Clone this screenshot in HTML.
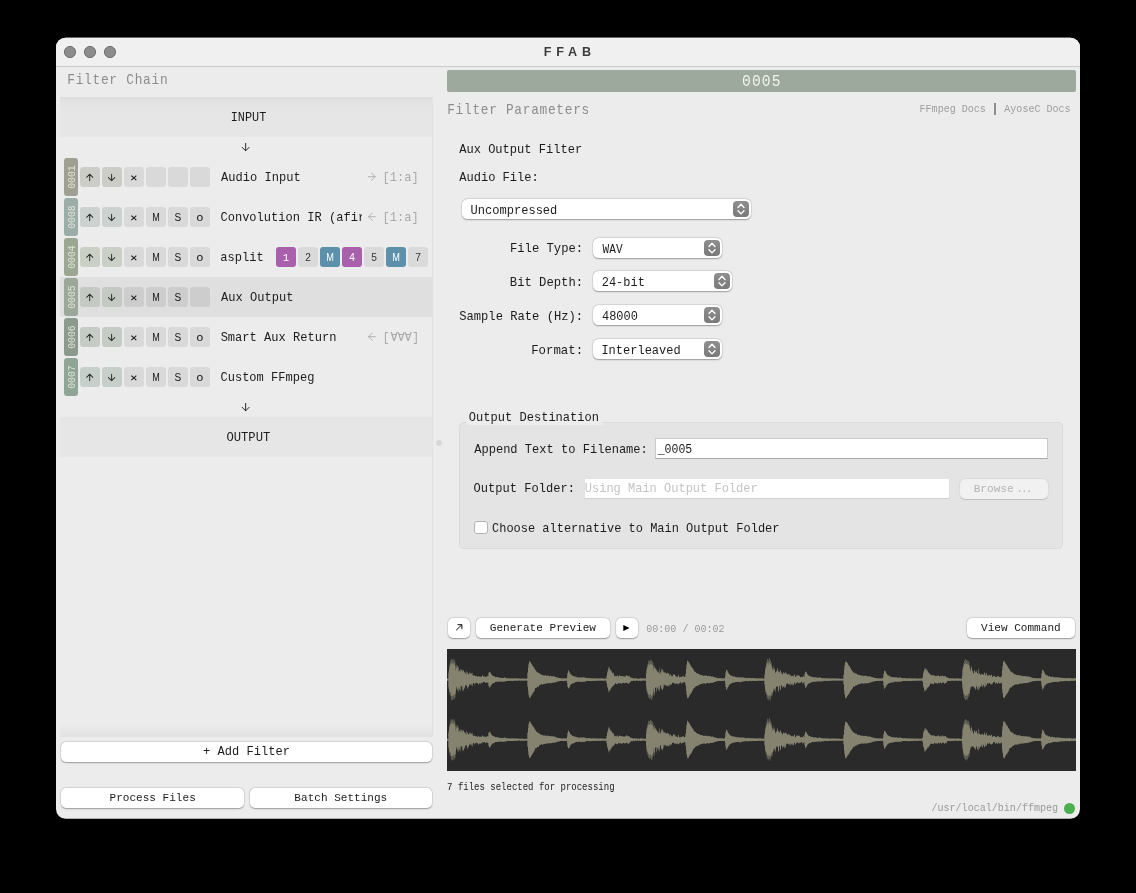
<!DOCTYPE html>
<html><head><meta charset="utf-8"><title>FFAB</title>
<style>
html,body{margin:0;padding:0;background:#000;}
body{width:1136px;height:893px;position:relative;overflow:hidden;font-family:"Liberation Mono",monospace;}
div,span,svg{position:absolute;box-sizing:border-box;}
.t{font-family:"Liberation Mono",monospace;line-height:20px;white-space:pre;transform-origin:0 0;}
.ts{font-family:"Liberation Sans",sans-serif;line-height:20px;white-space:pre;transform-origin:0 0;}
#root{left:0;top:0;width:1136px;height:893px;will-change:transform;}
.btn{background:#fff;border-radius:5px;box-shadow:0 0.5px 1.5px rgba(0,0,0,.32),0 0 0 0.5px rgba(0,0,0,.07);}
.sel{background:#fff;border-radius:5.5px;box-shadow:0 0.5px 1.5px rgba(0,0,0,.32),0 0 0 0.5px rgba(0,0,0,.07);}
.stp{width:16px;height:16px;border-radius:4px;background:linear-gradient(#8f8f8f,#797979);}
.sq{border-radius:3px;}
</style></head><body>
<div id="root">
<svg style="left:0;top:0" width="1136" height="893" viewBox="0 0 1136 893"><defs><clipPath id="wc"><rect x="56" y="37.8" width="1024" height="780.9" rx="9.6"/></clipPath></defs><g clip-path="url(#wc)"><rect x="56" y="37" width="1024" height="782" fill="#ececec"/><rect x="56" y="37" width="1024" height="29.2" fill="#f0f0f0"/><rect x="56" y="66.1" width="1024" height="0.95" fill="#c9c9c9"/></g></svg>

<span class="ts" style="left:543px;top:45px;line-height:14px;font-size:12.6px;color:#3c3c3c;transform:translateX(0.84px) scaleX(1.0000);letter-spacing:4.75px;font-weight:bold;">FFAB</span>
<span class="t" style="left:67px;top:72px;line-height:16px;font-size:14.6px;color:#8c8c8c;transform:translateX(0.28px) scaleX(0.8790);letter-spacing:0.82px;">Filter Chain</span>
<div style="left:60.00px;top:97.00px;width:373.00px;height:640.00px;background:#ececec;border-right:1px solid #e2e2e2;"></div>
<div style="left:60.00px;top:97.00px;width:372.00px;height:40.00px;background:linear-gradient(#dedede 0,#e3e3e3 6px,#e6e6e6 14px,#e6e6e6 100%);"></div>
<div style="left:60.00px;top:417.00px;width:372.00px;height:40.00px;background:#e6e6e6;"></div>
<div style="left:60.00px;top:277.00px;width:372.00px;height:40.00px;background:#dfdfdf;"></div>
<div style="left:60.00px;top:722.00px;width:372.00px;height:15.00px;background:linear-gradient(rgba(0,0,0,0),rgba(0,0,0,.045));"></div>
<span class="t" style="left:230px;top:110px;line-height:15px;font-size:13.5px;color:#1c1c1c;transform:translateX(0.73px) scaleX(0.8767);">INPUT</span>
<span class="t" style="left:226px;top:430px;line-height:15px;font-size:13.5px;color:#1c1c1c;transform:translateX(0.49px) scaleX(0.9003);">OUTPUT</span>
<div style="left:64.00px;top:158.00px;width:14.00px;height:38.00px;background:#a0a092;border-radius:3px;"></div>
<span class="t" style="left:58.17px;top:171.35px;width:27.36px;line-height:12px;font-size:11.4px;color:rgba(236,236,228,.86);transform-origin:50% 50%;transform:rotate(-90deg) scaleX(0.86);text-align:center;">0001</span>
<div class="sq" style="left:80.00px;top:167.00px;width:20.00px;height:20.00px;background:rgba(160,160,146,.4);"></div>
<div class="sq" style="left:102.00px;top:167.00px;width:20.00px;height:20.00px;background:rgba(160,160,146,.4);"></div>
<div class="sq" style="left:124.00px;top:167.00px;width:20.00px;height:20.00px;background:rgba(0,0,0,.078);"></div>
<div class="sq" style="left:146.00px;top:167.00px;width:20.00px;height:20.00px;background:rgba(0,0,0,.078);"></div>
<div class="sq" style="left:168.00px;top:167.00px;width:20.00px;height:20.00px;background:rgba(0,0,0,.078);"></div>
<div class="sq" style="left:190.00px;top:167.00px;width:20.00px;height:20.00px;background:rgba(0,0,0,.078);"></div>
<span class="t" style="left:221px;top:170px;line-height:15px;font-size:13.5px;color:#1c1c1c;transform:translateX(0.10px) scaleX(0.8930);">Audio Input</span>
<span class="t" style="left:382px;top:170px;line-height:15px;font-size:13.5px;color:#aaa;transform:translateX(0.49px) scaleX(0.8930);">[1:a]</span>
<div style="left:64.00px;top:198.00px;width:14.00px;height:38.00px;background:#9aada6;border-radius:3px;"></div>
<span class="t" style="left:58.17px;top:211.35px;width:27.36px;line-height:12px;font-size:11.4px;color:rgba(236,236,228,.86);transform-origin:50% 50%;transform:rotate(-90deg) scaleX(0.86);text-align:center;">0008</span>
<div class="sq" style="left:80.00px;top:207.00px;width:20.00px;height:20.00px;background:rgba(154,173,166,.4);"></div>
<div class="sq" style="left:102.00px;top:207.00px;width:20.00px;height:20.00px;background:rgba(154,173,166,.4);"></div>
<div class="sq" style="left:124.00px;top:207.00px;width:20.00px;height:20.00px;background:rgba(0,0,0,.078);"></div>
<div class="sq" style="left:146.00px;top:207.00px;width:20.00px;height:20.00px;background:rgba(0,0,0,.078);"></div>
<div class="sq" style="left:168.00px;top:207.00px;width:20.00px;height:20.00px;background:rgba(0,0,0,.078);"></div>
<div class="sq" style="left:190.00px;top:207.00px;width:20.00px;height:20.00px;background:rgba(0,0,0,.078);"></div>
<span class="ts" style="left:152px;top:212px;line-height:11px;font-size:10.0px;color:#111;transform:translateX(0.15px) scaleX(0.9000);">M</span>
<span class="ts" style="left:174px;top:212px;line-height:11px;font-size:10.0px;color:#111;transform:translateX(0.57px) scaleX(1.0000);">S</span>
<span class="ts" style="left:196px;top:212px;line-height:11px;font-size:10.0px;color:#111;transform:translateX(0.56px) scaleX(1.2000);">o</span>
<div style="left:215px;top:197px;width:147.3px;height:40px;overflow:hidden;">
<span class="t" style="left:5px;top:13px;line-height:15px;font-size:13.5px;color:#1c1c1c;transform:translateX(0.43px) scaleX(0.8930);">Convolution IR (afir)</span>
</div>
<span class="t" style="left:382px;top:210px;line-height:15px;font-size:13.5px;color:#aaa;transform:translateX(0.49px) scaleX(0.8930);">[1:a]</span>
<div style="left:64.00px;top:238.00px;width:14.00px;height:38.00px;background:#9ba791;border-radius:3px;"></div>
<span class="t" style="left:58.17px;top:251.35px;width:27.36px;line-height:12px;font-size:11.4px;color:rgba(236,236,228,.86);transform-origin:50% 50%;transform:rotate(-90deg) scaleX(0.86);text-align:center;">0004</span>
<div class="sq" style="left:80.00px;top:247.00px;width:20.00px;height:20.00px;background:rgba(155,167,145,.4);"></div>
<div class="sq" style="left:102.00px;top:247.00px;width:20.00px;height:20.00px;background:rgba(155,167,145,.4);"></div>
<div class="sq" style="left:124.00px;top:247.00px;width:20.00px;height:20.00px;background:rgba(0,0,0,.078);"></div>
<div class="sq" style="left:146.00px;top:247.00px;width:20.00px;height:20.00px;background:rgba(0,0,0,.078);"></div>
<div class="sq" style="left:168.00px;top:247.00px;width:20.00px;height:20.00px;background:rgba(0,0,0,.078);"></div>
<div class="sq" style="left:190.00px;top:247.00px;width:20.00px;height:20.00px;background:rgba(0,0,0,.078);"></div>
<span class="ts" style="left:152px;top:252px;line-height:11px;font-size:10.0px;color:#111;transform:translateX(0.15px) scaleX(0.9000);">M</span>
<span class="ts" style="left:174px;top:252px;line-height:11px;font-size:10.0px;color:#111;transform:translateX(0.57px) scaleX(1.0000);">S</span>
<span class="ts" style="left:196px;top:252px;line-height:11px;font-size:10.0px;color:#111;transform:translateX(0.56px) scaleX(1.2000);">o</span>
<span class="t" style="left:220px;top:250px;line-height:15px;font-size:13.5px;color:#1c1c1c;transform:translateX(0.35px) scaleX(0.8930);">asplit</span>
<div style="left:64.00px;top:278.00px;width:14.00px;height:38.00px;background:#9ba799;border-radius:3px;"></div>
<span class="t" style="left:58.17px;top:291.35px;width:27.36px;line-height:12px;font-size:11.4px;color:rgba(236,236,228,.86);transform-origin:50% 50%;transform:rotate(-90deg) scaleX(0.86);text-align:center;">0005</span>
<div class="sq" style="left:80.00px;top:287.00px;width:20.00px;height:20.00px;background:rgba(155,167,153,.4);"></div>
<div class="sq" style="left:102.00px;top:287.00px;width:20.00px;height:20.00px;background:rgba(155,167,153,.4);"></div>
<div class="sq" style="left:124.00px;top:287.00px;width:20.00px;height:20.00px;background:rgba(0,0,0,.078);"></div>
<div class="sq" style="left:146.00px;top:287.00px;width:20.00px;height:20.00px;background:rgba(0,0,0,.078);"></div>
<div class="sq" style="left:168.00px;top:287.00px;width:20.00px;height:20.00px;background:rgba(0,0,0,.078);"></div>
<div class="sq" style="left:190.00px;top:287.00px;width:20.00px;height:20.00px;background:rgba(0,0,0,.078);"></div>
<span class="ts" style="left:152px;top:292px;line-height:11px;font-size:10.0px;color:#111;transform:translateX(0.15px) scaleX(0.9000);">M</span>
<span class="ts" style="left:174px;top:292px;line-height:11px;font-size:10.0px;color:#111;transform:translateX(0.57px) scaleX(1.0000);">S</span>
<span class="t" style="left:221px;top:290px;line-height:15px;font-size:13.5px;color:#1c1c1c;transform:translateX(0.10px) scaleX(0.8930);">Aux Output</span>
<div style="left:64.00px;top:318.00px;width:14.00px;height:38.00px;background:#8b9a8d;border-radius:3px;"></div>
<span class="t" style="left:58.17px;top:331.35px;width:27.36px;line-height:12px;font-size:11.4px;color:rgba(236,236,228,.86);transform-origin:50% 50%;transform:rotate(-90deg) scaleX(0.86);text-align:center;">0006</span>
<div class="sq" style="left:80.00px;top:327.00px;width:20.00px;height:20.00px;background:rgba(139,154,141,.4);"></div>
<div class="sq" style="left:102.00px;top:327.00px;width:20.00px;height:20.00px;background:rgba(139,154,141,.4);"></div>
<div class="sq" style="left:124.00px;top:327.00px;width:20.00px;height:20.00px;background:rgba(0,0,0,.078);"></div>
<div class="sq" style="left:146.00px;top:327.00px;width:20.00px;height:20.00px;background:rgba(0,0,0,.078);"></div>
<div class="sq" style="left:168.00px;top:327.00px;width:20.00px;height:20.00px;background:rgba(0,0,0,.078);"></div>
<div class="sq" style="left:190.00px;top:327.00px;width:20.00px;height:20.00px;background:rgba(0,0,0,.078);"></div>
<span class="ts" style="left:152px;top:332px;line-height:11px;font-size:10.0px;color:#111;transform:translateX(0.15px) scaleX(0.9000);">M</span>
<span class="ts" style="left:174px;top:332px;line-height:11px;font-size:10.0px;color:#111;transform:translateX(0.57px) scaleX(1.0000);">S</span>
<span class="ts" style="left:196px;top:332px;line-height:11px;font-size:10.0px;color:#111;transform:translateX(0.56px) scaleX(1.2000);">o</span>
<span class="t" style="left:220px;top:330px;line-height:15px;font-size:13.5px;color:#1c1c1c;transform:translateX(0.63px) scaleX(0.8930);">Smart Aux Return</span>
<span class="t" style="left:382px;top:330px;line-height:15px;font-size:13.5px;color:#aaa;transform:translateX(0.39px) scaleX(0.8930);">[</span>
<span class="t" style="left:412px;top:330px;line-height:15px;font-size:13.5px;color:#aaa;transform:translateX(0.09px) scaleX(0.8930);">]</span>
<span class="t" style="left:389.55px;top:327.41px;font-size:13.5px;color:#aaa;transform-origin:50% 9.14px;transform:rotate(180deg) scaleX(0.893);">A</span>
<span class="t" style="left:396.75px;top:327.41px;font-size:13.5px;color:#aaa;transform-origin:50% 9.14px;transform:rotate(180deg) scaleX(0.893);">A</span>
<span class="t" style="left:403.95px;top:327.41px;font-size:13.5px;color:#aaa;transform-origin:50% 9.14px;transform:rotate(180deg) scaleX(0.893);">A</span>
<div style="left:64.00px;top:358.00px;width:14.00px;height:38.00px;background:#8fa696;border-radius:3px;"></div>
<span class="t" style="left:58.17px;top:371.35px;width:27.36px;line-height:12px;font-size:11.4px;color:rgba(236,236,228,.86);transform-origin:50% 50%;transform:rotate(-90deg) scaleX(0.86);text-align:center;">0007</span>
<div class="sq" style="left:80.00px;top:367.00px;width:20.00px;height:20.00px;background:rgba(143,166,150,.4);"></div>
<div class="sq" style="left:102.00px;top:367.00px;width:20.00px;height:20.00px;background:rgba(143,166,150,.4);"></div>
<div class="sq" style="left:124.00px;top:367.00px;width:20.00px;height:20.00px;background:rgba(0,0,0,.078);"></div>
<div class="sq" style="left:146.00px;top:367.00px;width:20.00px;height:20.00px;background:rgba(0,0,0,.078);"></div>
<div class="sq" style="left:168.00px;top:367.00px;width:20.00px;height:20.00px;background:rgba(0,0,0,.078);"></div>
<div class="sq" style="left:190.00px;top:367.00px;width:20.00px;height:20.00px;background:rgba(0,0,0,.078);"></div>
<span class="ts" style="left:152px;top:372px;line-height:11px;font-size:10.0px;color:#111;transform:translateX(0.15px) scaleX(0.9000);">M</span>
<span class="ts" style="left:174px;top:372px;line-height:11px;font-size:10.0px;color:#111;transform:translateX(0.57px) scaleX(1.0000);">S</span>
<span class="ts" style="left:196px;top:372px;line-height:11px;font-size:10.0px;color:#111;transform:translateX(0.56px) scaleX(1.2000);">o</span>
<span class="t" style="left:220px;top:370px;line-height:15px;font-size:13.5px;color:#1c1c1c;transform:translateX(0.43px) scaleX(0.8930);">Custom FFmpeg</span>
<div class="sq" style="left:276.00px;top:247.00px;width:20.00px;height:20.00px;background:#a960ac;"></div>
<span class="t" style="left:282px;top:252px;line-height:12px;font-size:10.8px;color:#fff;transform:translateX(0.63px) scaleX(1.0000);">1</span>
<div class="sq" style="left:298.00px;top:247.00px;width:20.00px;height:20.00px;background:#dadada;"></div>
<span class="ts" style="left:305px;top:252px;line-height:11px;font-size:10.2px;color:#333;transform:translateX(0.16px) scaleX(1.0000);">2</span>
<div class="sq" style="left:320.00px;top:247.00px;width:20.00px;height:20.00px;background:#5d90aa;"></div>
<span class="ts" style="left:326px;top:252px;line-height:11px;font-size:10.2px;color:#fff;transform:translateX(0.18px) scaleX(0.9000);">M</span>
<div class="sq" style="left:342.00px;top:247.00px;width:20.00px;height:20.00px;background:#a960ac;"></div>
<span class="ts" style="left:349px;top:252px;line-height:11px;font-size:10.2px;color:#fff;transform:translateX(0.20px) scaleX(1.0000);">4</span>
<div class="sq" style="left:364.00px;top:247.00px;width:20.00px;height:20.00px;background:#dadada;"></div>
<span class="ts" style="left:371px;top:252px;line-height:11px;font-size:10.2px;color:#333;transform:translateX(0.17px) scaleX(1.0000);">5</span>
<div class="sq" style="left:386.00px;top:247.00px;width:20.00px;height:20.00px;background:#5d90aa;"></div>
<span class="ts" style="left:392px;top:252px;line-height:11px;font-size:10.2px;color:#fff;transform:translateX(0.18px) scaleX(0.9000);">M</span>
<div class="sq" style="left:408.00px;top:247.00px;width:20.00px;height:20.00px;background:#dadada;"></div>
<span class="ts" style="left:415px;top:252px;line-height:11px;font-size:10.2px;color:#333;transform:translateX(0.16px) scaleX(1.0000);">7</span>
<div class="btn" style="left:61.00px;top:741.50px;width:371.00px;height:20.30px;"></div>
<span class="t" style="left:203px;top:744px;line-height:15px;font-size:13.5px;color:#1c1c1c;transform:translateX(0.12px) scaleX(0.8930);">+ Add Filter</span>
<div class="btn" style="left:61.00px;top:788.00px;width:183.00px;height:20.20px;"></div>
<span class="t" style="left:109px;top:791px;line-height:13px;font-size:11.6px;color:#1c1c1c;transform:translateX(0.53px) scaleX(0.9535);">Process Files</span>
<div class="btn" style="left:249.60px;top:788.00px;width:182.40px;height:20.20px;"></div>
<span class="t" style="left:294px;top:791px;line-height:13px;font-size:11.6px;color:#1c1c1c;transform:translateX(0.36px) scaleX(0.9535);">Batch Settings</span>
<div style="left:447.00px;top:70.00px;width:629.00px;height:22.00px;background:#9da99c;border-radius:2px;"></div>
<span class="t" style="left:742px;top:72px;line-height:19px;font-size:16.6px;color:#f3f3ec;transform:translateX(0.10px) scaleX(0.8850);letter-spacing:1.2px;">0005</span>
<span class="t" style="left:447px;top:102px;line-height:16px;font-size:14.6px;color:#8c8c8c;transform:translateX(0.19px) scaleX(0.8766);letter-spacing:0.82px;">Filter Parameters</span>
<span class="t" style="left:919px;top:103px;line-height:12px;font-size:10.8px;color:#9d9d9d;transform:translateX(0.55px) scaleX(0.9310);">FFmpeg Docs</span>
<div style="left:993.90px;top:103.20px;width:2.40px;height:11.40px;background:#8e8e8e;"></div>
<span class="t" style="left:1004px;top:103px;line-height:12px;font-size:10.8px;color:#9d9d9d;transform:translateX(0.30px) scaleX(0.9310);">AyoseC Docs</span>
<span class="t" style="left:459px;top:142px;line-height:15px;font-size:13.5px;color:#1c1c1c;transform:translateX(0.20px) scaleX(0.8930);">Aux Output Filter</span>
<span class="t" style="left:459px;top:170px;line-height:15px;font-size:13.5px;color:#1c1c1c;transform:translateX(0.20px) scaleX(0.8930);">Audio File:</span>
<div class="sel" style="left:462.00px;top:199.00px;width:289.00px;height:20.00px;"></div>
<div class="stp" style="left:733.00px;top:201.10px;"><svg width="16" height="16" viewBox="0 0 16 16" style="left:0;top:0"><path d="M5 6.5L8 3.3L11 6.5M5 9.7L8 12.9L11 9.7" fill="none" stroke="#fff" stroke-width="1.35" stroke-linecap="round" stroke-linejoin="round"/></svg></div>
<span class="t" style="left:470px;top:203px;line-height:15px;font-size:13.3px;color:#1c1c1c;transform:translateX(0.56px) scaleX(0.9062);">Uncompressed</span>
<span class="t" style="left:509px;top:241px;line-height:15px;font-size:13.5px;color:#1c1c1c;transform:translateX(0.95px) scaleX(0.9025);">File Type:</span>
<div class="sel" style="left:593.00px;top:238.00px;width:129.00px;height:20.00px;"></div>
<div class="stp" style="left:704.00px;top:240.10px;"><svg width="16" height="16" viewBox="0 0 16 16" style="left:0;top:0"><path d="M5 6.5L8 3.3L11 6.5M5 9.7L8 12.9L11 9.7" fill="none" stroke="#fff" stroke-width="1.35" stroke-linecap="round" stroke-linejoin="round"/></svg></div>
<span class="t" style="left:602px;top:242px;line-height:15px;font-size:13.3px;color:#1c1c1c;transform:translateX(0.60px) scaleX(0.8336);">WAV</span>
<span class="t" style="left:509px;top:275px;line-height:15px;font-size:13.5px;color:#1c1c1c;transform:translateX(0.83px) scaleX(0.9040);">Bit Depth:</span>
<div class="sel" style="left:593.00px;top:271.00px;width:139.20px;height:20.00px;"></div>
<div class="stp" style="left:714.20px;top:273.10px;"><svg width="16" height="16" viewBox="0 0 16 16" style="left:0;top:0"><path d="M5 6.5L8 3.3L11 6.5M5 9.7L8 12.9L11 9.7" fill="none" stroke="#fff" stroke-width="1.35" stroke-linecap="round" stroke-linejoin="round"/></svg></div>
<span class="t" style="left:601px;top:275px;line-height:15px;font-size:13.3px;color:#1c1c1c;transform:translateX(0.76px) scaleX(0.8996);">24-bit</span>
<span class="t" style="left:459px;top:309px;line-height:15px;font-size:13.5px;color:#1c1c1c;transform:translateX(0.23px) scaleX(0.8991);">Sample Rate (Hz):</span>
<div class="sel" style="left:593.00px;top:305.00px;width:129.00px;height:20.00px;"></div>
<div class="stp" style="left:704.00px;top:307.10px;"><svg width="16" height="16" viewBox="0 0 16 16" style="left:0;top:0"><path d="M5 6.5L8 3.3L11 6.5M5 9.7L8 12.9L11 9.7" fill="none" stroke="#fff" stroke-width="1.35" stroke-linecap="round" stroke-linejoin="round"/></svg></div>
<span class="t" style="left:601px;top:309px;line-height:15px;font-size:13.3px;color:#1c1c1c;transform:translateX(1.00px) scaleX(0.8980);">48000</span>
<span class="t" style="left:531px;top:343px;line-height:15px;font-size:13.5px;color:#1c1c1c;transform:translateX(0.13px) scaleX(0.9166);">Format:</span>
<div class="sel" style="left:593.00px;top:339.00px;width:129.00px;height:20.00px;"></div>
<div class="stp" style="left:704.00px;top:341.10px;"><svg width="16" height="16" viewBox="0 0 16 16" style="left:0;top:0"><path d="M5 6.5L8 3.3L11 6.5M5 9.7L8 12.9L11 9.7" fill="none" stroke="#fff" stroke-width="1.35" stroke-linecap="round" stroke-linejoin="round"/></svg></div>
<span class="t" style="left:601px;top:343px;line-height:15px;font-size:13.3px;color:#1c1c1c;transform:translateX(0.42px) scaleX(0.9026);">Interleaved</span>
<div style="left:459.30px;top:422.30px;width:604.00px;height:126.40px;background:#e4e4e4;border:1px solid #dadada;border-radius:5px;"></div>
<div style="left:466.00px;top:409.00px;width:137.00px;height:16.20px;background:#ececec;"></div>
<span class="t" style="left:468px;top:410px;line-height:15px;font-size:13.5px;color:#1c1c1c;transform:translateX(0.80px) scaleX(0.8930);">Output Destination</span>
<span class="t" style="left:474px;top:442px;line-height:15px;font-size:13.5px;color:#1c1c1c;transform:translateX(0.20px) scaleX(0.8930);">Append Text to Filename:</span>
<div style="left:655.00px;top:438.00px;width:393.00px;height:21.00px;background:#fff;border:1px solid #cacaca;border-bottom-color:#a9a9a9;"></div>
<span class="t" style="left:657px;top:442px;line-height:15px;font-size:13.5px;color:#1c1c1c;transform:translateX(0.63px) scaleX(0.8543);">_0005</span>
<span class="t" style="left:473px;top:481px;line-height:15px;font-size:13.5px;color:#1c1c1c;transform:translateX(0.60px) scaleX(0.8930);">Output Folder:</span>
<div style="left:584.00px;top:478.00px;width:366.00px;height:21.00px;background:#fff;border:1px solid #e2e2e2;border-bottom-color:#d0d0d0;"></div>
<span class="t" style="left:584px;top:481px;line-height:15px;font-size:13.5px;color:#c4c4c4;transform:translateX(0.77px) scaleX(0.8893);">Using Main Output Folder</span>
<div style="left:959.70px;top:479.00px;width:88.50px;height:20.40px;background:#f1f1f1;border-radius:5px;box-shadow:0 0.5px 1px rgba(0,0,0,.14),0 0 0 0.5px rgba(0,0,0,.05);"></div>
<span class="t" style="left:973px;top:482px;line-height:13px;font-size:11.6px;color:#b4b4b4;transform:translateX(0.73px) scaleX(0.9535);">Browse</span>
<span class="t" style="left:1016px;top:482px;line-height:13px;font-size:11.6px;color:#b4b4b4;transform:translateX(0.29px) scaleX(0.9535);letter-spacing:-2.0px;">...</span>
<div style="left:474.30px;top:521.20px;width:13.40px;height:13.20px;background:#fff;border:1px solid #b4b4b4;border-radius:3px;"></div>
<span class="t" style="left:492px;top:521px;line-height:15px;font-size:13.5px;color:#1c1c1c;transform:translateX(0.04px) scaleX(0.8870);">Choose alternative to Main Output Folder</span>
<div class="btn" style="left:447.70px;top:617.70px;width:22.60px;height:20.30px;"></div>
<div class="btn" style="left:475.60px;top:617.70px;width:134.40px;height:20.30px;"></div>
<span class="t" style="left:489px;top:621px;line-height:13px;font-size:11.6px;color:#1c1c1c;transform:translateX(0.79px) scaleX(0.9535);">Generate Preview</span>
<div class="btn" style="left:615.60px;top:617.70px;width:22.70px;height:20.30px;"></div>
<span class="t" style="left:646px;top:623px;line-height:12px;font-size:10.8px;color:#9a9a9a;transform:translateX(0.19px) scaleX(0.9310);">00:00 / 00:02</span>
<div class="btn" style="left:966.50px;top:617.70px;width:108.70px;height:20.30px;"></div>
<span class="t" style="left:981px;top:621px;line-height:13px;font-size:11.6px;color:#1c1c1c;transform:translateX(0.05px) scaleX(0.9535);">View Command</span>
<div style="left:447.00px;top:649.00px;width:629.00px;height:121.70px;background:#2a2a2a;"></div>
<span class="t" style="left:447px;top:781px;line-height:12px;font-size:10.3px;color:#222;transform:translateX(0.11px) scaleX(0.8740);">7 files selected for processing</span>
<span class="t" style="left:931px;top:802px;line-height:12px;font-size:10.8px;color:#9a9a9a;transform:translateX(0.44px) scaleX(0.9310);">/usr/local/bin/ffmpeg</span>
<div style="left:1064.10px;top:802.70px;width:11.00px;height:11.00px;background:#4caf50;border-radius:50%;"></div>
<svg style="left:0;top:0" width="1136" height="893" viewBox="0 0 1136 893">
<circle cx="70" cy="52" r="5.6" fill="#8c8c8c" stroke="#686868" stroke-width="0.9"/><circle cx="90" cy="52" r="5.6" fill="#8c8c8c" stroke="#686868" stroke-width="0.9"/><circle cx="110" cy="52" r="5.6" fill="#8c8c8c" stroke="#686868" stroke-width="0.9"/>
<path d="M245.65 143.40V150.70M242.20 147.35L245.65 150.80L249.10 147.35" fill="none" stroke="#222" stroke-width="0.95" stroke-linecap="round" stroke-linejoin="round"/>
<path d="M245.65 403.40V410.70M242.20 407.35L245.65 410.80L249.10 407.35" fill="none" stroke="#222" stroke-width="0.95" stroke-linecap="round" stroke-linejoin="round"/>
<path d="M89.70 180.60V174.30M86.60 177.30L89.70 174.20L92.80 177.30" fill="none" stroke="#333" stroke-width="1.05" stroke-linecap="round" stroke-linejoin="round"/>
<path d="M111.60 174.30V180.60M108.50 177.60L111.60 180.70L114.70 177.60" fill="none" stroke="#333" stroke-width="1.05" stroke-linecap="round" stroke-linejoin="round"/>
<path d="M131.35 175.6L136.35 180.20000000000002M136.35 175.6L131.35 180.20000000000002" stroke="#222" stroke-width="1.15" fill="none"/>
<path d="M368.40 176.70H375.10M371.40 173.10L375.30 176.70L371.40 180.30" fill="none" stroke="#aaa" stroke-width="0.9" stroke-linecap="round" stroke-linejoin="round"/>
<path d="M89.70 220.60V214.30M86.60 217.30L89.70 214.20L92.80 217.30" fill="none" stroke="#333" stroke-width="1.05" stroke-linecap="round" stroke-linejoin="round"/>
<path d="M111.60 214.30V220.60M108.50 217.60L111.60 220.70L114.70 217.60" fill="none" stroke="#333" stroke-width="1.05" stroke-linecap="round" stroke-linejoin="round"/>
<path d="M131.35 215.6L136.35 220.20000000000002M136.35 215.6L131.35 220.20000000000002" stroke="#222" stroke-width="1.15" fill="none"/>
<path d="M375.30 216.70H368.60M372.30 213.10L368.40 216.70L372.30 220.30" fill="none" stroke="#aaa" stroke-width="0.9" stroke-linecap="round" stroke-linejoin="round"/>
<path d="M89.70 260.60V254.30M86.60 257.30L89.70 254.20L92.80 257.30" fill="none" stroke="#333" stroke-width="1.05" stroke-linecap="round" stroke-linejoin="round"/>
<path d="M111.60 254.30V260.60M108.50 257.60L111.60 260.70L114.70 257.60" fill="none" stroke="#333" stroke-width="1.05" stroke-linecap="round" stroke-linejoin="round"/>
<path d="M131.35 255.59999999999997L136.35 260.2M136.35 255.59999999999997L131.35 260.2" stroke="#222" stroke-width="1.15" fill="none"/>
<path d="M89.70 300.60V294.30M86.60 297.30L89.70 294.20L92.80 297.30" fill="none" stroke="#333" stroke-width="1.05" stroke-linecap="round" stroke-linejoin="round"/>
<path d="M111.60 294.30V300.60M108.50 297.60L111.60 300.70L114.70 297.60" fill="none" stroke="#333" stroke-width="1.05" stroke-linecap="round" stroke-linejoin="round"/>
<path d="M131.35 295.59999999999997L136.35 300.2M136.35 295.59999999999997L131.35 300.2" stroke="#222" stroke-width="1.15" fill="none"/>
<path d="M89.70 340.60V334.30M86.60 337.30L89.70 334.20L92.80 337.30" fill="none" stroke="#333" stroke-width="1.05" stroke-linecap="round" stroke-linejoin="round"/>
<path d="M111.60 334.30V340.60M108.50 337.60L111.60 340.70L114.70 337.60" fill="none" stroke="#333" stroke-width="1.05" stroke-linecap="round" stroke-linejoin="round"/>
<path d="M131.35 335.59999999999997L136.35 340.2M136.35 335.59999999999997L131.35 340.2" stroke="#222" stroke-width="1.15" fill="none"/>
<path d="M375.40 336.70H368.60M372.30 333.10L368.40 336.70L372.30 340.30" fill="none" stroke="#aaa" stroke-width="0.9" stroke-linecap="round" stroke-linejoin="round"/>
<path d="M89.70 380.60V374.30M86.60 377.30L89.70 374.20L92.80 377.30" fill="none" stroke="#333" stroke-width="1.05" stroke-linecap="round" stroke-linejoin="round"/>
<path d="M111.60 374.30V380.60M108.50 377.60L111.60 380.70L114.70 377.60" fill="none" stroke="#333" stroke-width="1.05" stroke-linecap="round" stroke-linejoin="round"/>
<path d="M131.35 375.59999999999997L136.35 380.2M136.35 375.59999999999997L131.35 380.2" stroke="#222" stroke-width="1.15" fill="none"/>
<circle cx="439" cy="443" r="2.9" fill="#d7d7d7"/>
<path d="M456.4 630.0L461.8 624.8M457.9 624.7H461.9V628.7" fill="none" stroke="#111" stroke-width="1.0" stroke-linecap="round" stroke-linejoin="round"/>
<path d="M623.3 625V631L629.6 628Z" fill="#000"/>
<g transform="translate(0,0)"><path d="M447 679.6V678.7H447.5V678.8H448V678.8H448.5V670.9H449V666.0H449.5V663.7H450V661.2H450.5V659.9H451V659.5H451.5V658.8H452V659.5H452.5V659.3H453V659.3H453.5V661.0H454V660.6H454.5V658.8H455V662.4H455.5V669.2H456V664.8H456.5V665.6H457V665.0H457.5V666.0H458V671.0H458.5V666.2H459V670.1H459.5V670.3H460V671.0H460.5V668.8H461V669.2H461.5V669.3H462V671.5H462.5V669.4H463V669.8H463.5V669.9H464V671.8H464.5V672.0H465V672.0H465.5V673.7H466V670.5H466.5V674.2H467V672.2H467.5V672.4H468V673.8H468.5V674.0H469V671.9H469.5V673.7H470V672.8H470.5V672.9H471V672.7H471.5V673.7H472V674.9H472.5V672.7H473V675.3H473.5V675.4H474V675.6H474.5V675.1H475V675.8H475.5V675.8H476V675.8H476.5V675.9H477V676.4H477.5V676.5H478V676.0H478.5V676.0H479V676.4H479.5V676.4H480V676.7H480.5V676.3H481V676.5H481.5V676.6H482V674.9H482.5V675.5H483V676.2H483.5V676.3H484V676.3H484.5V676.3H485V676.6H485.5V676.7H486V677.2H486.5V675.8H487V676.0H487.5V676.1H488V676.2H488.5V672.4H489V671.4H489.5V671.9H490V672.0H490.5V672.9H491V673.8H491.5V674.7H492V675.3H492.5V675.7H493V676.0H493.5V676.1H494V676.2H494.5V676.4H495V677.0H495.5V677.1H496V676.7H496.5V677.1H497V677.1H497.5V677.2H498V677.3H498.5V677.4H499V677.6H499.5V677.7H500V677.9H500.5V677.9H501V677.8H501.5V677.8H502V677.8H502.5V677.8H503V677.8H503.5V677.9H504V677.4H504.5V677.5H505V678.0H505.5V677.7H506V678.1H506.5V678.2H507V678.1H507.5V678.2H508V678.4H508.5V678.4H509V678.3H509.5V678.5H510V678.4H510.5V678.4H511V678.4H511.5V678.4H512V678.4H512.5V678.4H513V678.4H513.5V678.4H514V678.3H514.5V678.3H515V678.4H515.5V678.4H516V678.5H516.5V678.5H517V678.5H517.5V678.4H518V678.5H518.5V678.6H519V678.6H519.5V678.7H520V678.7H520.5V678.7H521V678.5H521.5V678.7H522V678.5H522.5V678.6H523V678.8H523.5V678.8H524V678.8H524.5V678.6H525V678.8H525.5V678.7H526V678.6H526.5V678.7H527V678.8H527.5V672.3H528V667.4H528.5V663.5H529V660.8H529.5V661.2H530V661.4H530.5V662.2H531V663.1H531.5V664.0H532V664.7H532.5V665.5H533V666.3H533.5V667.1H534V667.5H534.5V669.1H535V669.6H535.5V670.0H536V671.0H536.5V671.4H537V672.0H537.5V672.3H538V672.5H538.5V672.8H539V673.0H539.5V673.3H540V673.9H540.5V674.3H541V674.6H541.5V674.7H542V674.7H542.5V674.9H543V675.3H543.5V675.4H544V675.1H544.5V675.5H545V675.3H545.5V675.3H546V675.8H546.5V675.8H547V675.3H547.5V675.4H548V675.6H548.5V675.6H549V676.1H549.5V676.0H550V675.6H550.5V675.7H551V676.0H551.5V676.1H552V676.2H552.5V676.3H553V676.1H553.5V676.2H554V676.3H554.5V676.5H555V676.9H555.5V677.1H556V677.3H556.5V677.4H557V677.6H557.5V677.7H558V677.8H558.5V677.8H559V677.9H559.5V678.0H560V678.1H560.5V678.1H561V678.3H561.5V678.3H562V678.4H562.5V678.4H563V678.3H563.5V678.4H564V678.4H564.5V678.4H565V678.4H565.5V678.4H566V678.4H566.5V678.4H567V676.1H567.5V672.5H568V670.0H568.5V670.6H569V671.3H569.5V672.2H570V673.3H570.5V674.4H571V674.4H571.5V674.8H572V675.6H572.5V675.8H573V675.7H573.5V675.9H574V676.2H574.5V676.8H575V676.5H575.5V676.6H576V676.8H576.5V676.9H577V677.3H577.5V677.3H578V677.4H578.5V677.4H579V677.6H579.5V677.7H580V677.3H580.5V677.3H581V677.3H581.5V677.3H582V677.7H582.5V677.6H583V677.1H583.5V677.1H584V677.3H584.5V677.8H585V677.6H585.5V677.7H586V678.0H586.5V678.3H587V678.1H587.5V677.8H588V678.1H588.5V678.4H589V677.9H589.5V677.9H590V678.2H590.5V678.3H591V678.4H591.5V678.4H592V678.3H592.5V678.4H593V678.1H593.5V678.3H594V678.3H594.5V678.4H595V678.5H595.5V678.4H596V678.5H596.5V678.3H597V678.4H597.5V678.4H598V678.6H598.5V678.4H599V678.5H599.5V678.5H600V678.4H600.5V678.4H601V678.5H601.5V678.5H602V678.5H602.5V678.5H603V678.7H603.5V678.5H604V678.7H604.5V678.7H605V678.5H605.5V678.7H606V678.7H606.5V675.7H607V672.4H607.5V670.4H608V669.0H608.5V666.5H609V666.8H609.5V667.7H610V669.3H610.5V670.0H611V670.4H611.5V671.2H612V672.0H612.5V672.9H613V672.6H613.5V673.1H614V675.7H614.5V676.0H615V675.4H615.5V676.2H616V675.9H616.5V676.3H617V676.3H617.5V674.8H618V676.4H618.5V676.5H619V675.6H619.5V675.3H620V675.6H620.5V675.7H621V676.0H621.5V676.1H622V676.1H622.5V676.1H623V676.3H623.5V676.3H624V676.5H624.5V676.5H625V676.0H625.5V676.1H626V675.2H626.5V675.2H627V676.4H627.5V675.4H628V675.9H628.5V676.0H629V675.8H629.5V677.1H630V677.4H630.5V677.7H631V677.6H631.5V677.8H632V677.8H632.5V677.9H633V678.6H633.5V678.6H634V678.1H634.5V678.2H635V678.6H635.5V678.3H636V678.3H636.5V678.3H637V678.7H637.5V678.7H638V678.7H638.5V678.7H639V678.7H639.5V678.6H640V678.3H640.5V678.3H641V678.4H641.5V678.4H642V678.7H642.5V678.5H643V678.5H643.5V678.5H644V678.6H644.5V678.6H645V678.5H645.5V678.8H646V672.6H646.5V667.7H647V665.5H647.5V663.4H648V661.1H648.5V660.2H649V661.2H649.5V660.9H650V660.0H650.5V659.8H651V660.3H651.5V660.6H652V661.5H652.5V661.9H653V663.1H653.5V668.2H654V665.2H654.5V666.0H655V667.7H655.5V667.9H656V670.0H656.5V668.7H657V670.8H657.5V671.0H658V672.2H658.5V671.6H659V667.7H659.5V673.2H660V672.3H660.5V672.5H661V668.3H661.5V670.8H662V669.0H662.5V669.3H663V670.6H663.5V672.1H664V671.7H664.5V672.2H665V672.2H665.5V672.4H666V673.1H666.5V673.3H667V672.4H667.5V672.6H668V672.8H668.5V673.0H669V675.8H669.5V674.1H670V674.2H670.5V674.0H671V675.5H671.5V676.2H672V675.7H672.5V675.8H673V674.0H673.5V674.1H674V674.1H674.5V674.6H675V675.2H675.5V676.3H676V676.2H676.5V676.4H677V676.8H677.5V676.8H678V674.8H678.5V674.9H679V677.1H679.5V677.2H680V676.7H680.5V676.8H681V676.7H681.5V676.8H682V676.3H682.5V675.8H683V675.9H683.5V676.3H684V676.8H684.5V676.8H685V676.5H685.5V673.5H686V668.4H686.5V664.2H687V660.6H687.5V660.4H688V661.1H688.5V662.0H689V662.6H689.5V663.4H690V664.4H690.5V665.4H691V666.2H691.5V667.0H692V667.5H692.5V668.3H693V668.9H693.5V670.4H694V671.0H694.5V671.4H695V671.5H695.5V671.9H696V672.7H696.5V673.0H697V673.1H697.5V673.4H698V673.6H698.5V673.9H699V674.0H699.5V674.2H700V674.7H700.5V675.1H701V674.8H701.5V674.9H702V675.0H702.5V675.2H703V675.7H703.5V675.7H704V675.6H704.5V675.5H705V675.4H705.5V675.5H706V675.5H706.5V675.5H707V676.1H707.5V676.1H708V675.6H708.5V675.7H709V676.0H709.5V676.0H710V676.1H710.5V676.2H711V676.5H711.5V676.6H712V676.2H712.5V676.4H713V676.8H713.5V677.0H714V677.1H714.5V677.3H715V677.4H715.5V677.5H716V677.7H716.5V678.0H717V678.1H717.5V678.1H718V678.2H718.5V678.2H719V678.2H719.5V678.1H720V678.2H720.5V678.2H721V678.2H721.5V678.4H722V678.4H722.5V678.4H723V678.5H723.5V678.5H724V678.4H724.5V678.4H725V676.2H725.5V672.1H726V669.3H726.5V669.9H727V670.0H727.5V671.6H728V672.3H728.5V673.4H729V673.8H729.5V674.3H730V675.2H730.5V675.5H731V675.3H731.5V675.6H732V675.8H732.5V676.6H733V676.1H733.5V676.7H734V676.4H734.5V676.5H735V676.8H735.5V676.9H736V677.0H736.5V677.0H737V677.2H737.5V677.2H738V677.2H738.5V677.2H739V677.4H739.5V677.4H740V677.5H740.5V677.5H741V677.5H741.5V677.5H742V677.4H742.5V677.5H743V677.4H743.5V677.5H744V677.6H744.5V677.9H745V677.8H745.5V677.8H746V678.2H746.5V678.2H747V677.7H747.5V677.7H748V677.9H748.5V677.9H749V677.8H749.5V677.9H750V678.2H750.5V678.2H751V678.1H751.5V678.2H752V678.0H752.5V678.0H753V678.2H753.5V678.2H754V678.2H754.5V678.3H755V678.3H755.5V678.3H756V678.4H756.5V678.5H757V678.4H757.5V678.5H758V678.4H758.5V678.5H759V678.4H759.5V678.4H760V678.4H760.5V678.4H761V678.5H761.5V678.5H762V678.6H762.5V678.5H763V678.6H763.5V678.7H764V678.7H764.5V673.5H765V667.9H765.5V665.9H766V663.1H766.5V661.5H767V659.4H767.5V658.4H768V661.1H768.5V659.1H769V658.1H769.5V658.3H770V660.8H770.5V660.1H771V662.3H771.5V663.4H772V667.3H772.5V668.0H773V665.3H773.5V669.1H774V667.5H774.5V669.2H775V671.7H775.5V672.5H776V670.7H776.5V670.9H777V668.1H777.5V668.2H778V670.8H778.5V670.9H779V671.7H779.5V671.8H780V669.8H780.5V670.0H781V672.4H781.5V672.6H782V673.8H782.5V674.0H783V671.9H783.5V672.1H784V672.7H784.5V673.2H785V672.1H785.5V672.3H786V672.5H786.5V673.4H787V674.3H787.5V674.5H788V673.6H788.5V673.8H789V674.7H789.5V674.0H790V674.7H790.5V675.5H791V676.0H791.5V676.1H792V675.7H792.5V675.7H793V675.8H793.5V675.9H794V674.1H794.5V674.2H795V676.7H795.5V676.8H796V675.7H796.5V675.6H797V675.1H797.5V675.2H798V675.2H798.5V675.3H799V675.6H799.5V675.7H800V677.1H800.5V677.1H801V676.8H801.5V676.8H802V677.0H802.5V676.7H803V675.8H803.5V675.9H804V677.2H804.5V673.8H805V671.4H805.5V671.4H806V671.9H806.5V672.7H807V673.7H807.5V674.6H808V675.1H808.5V675.5H809V675.8H809.5V676.0H810V676.3H810.5V676.5H811V676.6H811.5V676.7H812V676.7H812.5V676.8H813V677.3H813.5V677.4H814V677.6H814.5V677.0H815V677.3H815.5V677.4H816V677.4H816.5V677.4H817V677.8H817.5V677.8H818V677.7H818.5V677.7H819V677.3H819.5V677.3H820V677.7H820.5V677.7H821V677.8H821.5V677.9H822V678.2H822.5V678.2H823V678.2H823.5V678.2H824V678.0H824.5V678.3H825V678.4H825.5V678.3H826V678.2H826.5V678.3H827V678.3H827.5V678.3H828V678.4H828.5V678.4H829V678.6H829.5V678.6H830V678.6H830.5V678.6H831V678.5H831.5V678.5H832V678.3H832.5V678.3H833V678.5H833.5V678.5H834V678.4H834.5V678.4H835V678.5H835.5V678.5H836V678.6H836.5V678.6H837V678.5H837.5V678.6H838V678.6H838.5V678.7H839V678.6H839.5V678.6H840V678.8H840.5V678.8H841V678.7H841.5V678.7H842V678.9H842.5V678.7H843V678.8H843.5V674.7H844V669.2H844.5V665.1H845V661.5H845.5V661.3H846V661.2H846.5V661.9H847V662.2H847.5V663.1H848V664.2H848.5V665.3H849V665.8H849.5V666.4H850V667.5H850.5V668.3H851V669.3H851.5V669.9H852V670.8H852.5V671.2H853V672.0H853.5V672.4H854V672.4H854.5V672.8H855V673.4H855.5V673.1H856V673.2H856.5V673.6H857V674.4H857.5V674.6H858V674.5H858.5V674.6H859V674.8H859.5V674.9H860V675.2H860.5V675.3H861V675.7H861.5V675.5H862V675.3H862.5V675.4H863V675.9H863.5V675.9H864V675.8H864.5V675.8H865V675.4H865.5V675.5H866V675.9H866.5V676.0H867V676.3H867.5V676.3H868V676.3H868.5V676.4H869V676.3H869.5V676.4H870V676.6H870.5V676.4H871V677.0H871.5V677.1H872V677.3H872.5V677.4H873V677.4H873.5V677.6H874V677.8H874.5V677.9H875V677.8H875.5V677.9H876V678.1H876.5V678.2H877V678.3H877.5V678.3H878V678.3H878.5V678.4H879V678.3H879.5V678.4H880V678.4H880.5V678.4H881V678.3H881.5V678.4H882V678.5H882.5V678.5H883V677.2H883.5V673.4H884V670.3H884.5V670.8H885V670.9H885.5V671.8H886V672.6H886.5V673.7H887V674.5H887.5V674.9H888V675.2H888.5V675.5H889V675.9H889.5V676.1H890V676.1H890.5V676.7H891V677.0H891.5V677.0H892V676.9H892.5V676.9H893V677.4H893.5V677.3H894V677.2H894.5V677.2H895V677.5H895.5V677.5H896V677.0H896.5V677.3H897V677.7H897.5V677.7H898V677.7H898.5V677.7H899V677.4H899.5V677.4H900V677.5H900.5V677.6H901V677.8H901.5V677.9H902V677.9H902.5V678.0H903V678.3H903.5V678.3H904V678.0H904.5V678.0H905V678.1H905.5V678.1H906V678.4H906.5V678.2H907V678.3H907.5V678.3H908V678.4H908.5V678.4H909V678.2H909.5V678.2H910V678.3H910.5V678.4H911V678.5H911.5V678.5H912V678.5H912.5V678.6H913V678.3H913.5V678.3H914V678.5H914.5V678.6H915V678.5H915.5V678.5H916V678.6H916.5V678.6H917V678.6H917.5V678.7H918V678.4H918.5V678.5H919V678.5H919.5V678.7H920V678.6H920.5V678.6H921V678.6H921.5V678.6H922V678.6H922.5V677.0H923V673.1H923.5V670.9H924V669.7H924.5V667.9H925V667.7H925.5V668.5H926V668.5H926.5V669.5H927V669.8H927.5V670.5H928V671.9H928.5V672.4H929V672.9H929.5V672.9H930V674.3H930.5V674.6H931V674.8H931.5V675.0H932V675.2H932.5V675.3H933V675.3H933.5V675.3H934V675.4H934.5V675.4H935V676.1H935.5V676.1H936V675.8H936.5V675.8H937V675.4H937.5V676.3H938V675.3H938.5V675.4H939V676.3H939.5V676.3H940V676.7H940.5V675.5H941V676.0H941.5V676.0H942V675.2H942.5V675.9H943V676.2H943.5V676.2H944V676.2H944.5V676.2H945V675.7H945.5V676.0H946V677.0H946.5V677.5H947V677.4H947.5V677.7H948V677.9H948.5V678.0H949V678.5H949.5V678.5H950V678.3H950.5V678.3H951V678.3H951.5V678.5H952V678.2H952.5V678.2H953V678.6H953.5V678.6H954V678.4H954.5V678.3H955V678.7H955.5V678.7H956V678.5H956.5V678.5H957V678.3H957.5V678.3H958V678.4H958.5V678.6H959V678.6H959.5V678.6H960V678.8H960.5V678.7H961V678.7H961.5V678.7H962V675.3H962.5V667.2H963V665.2H963.5V663.0H964V660.8H964.5V660.2H965V659.5H965.5V659.0H966V660.2H966.5V660.0H967V660.2H967.5V661.3H968V660.7H968.5V661.5H969V662.1H969.5V665.4H970V669.9H970.5V667.7H971V666.2H971.5V666.6H972V670.3H972.5V670.5H973V672.8H973.5V672.9H974V669.8H974.5V670.0H975V671.4H975.5V671.5H976V670.7H976.5V670.3H977V672.9H977.5V673.1H978V668.1H978.5V674.0H979V673.0H979.5V673.1H980V674.2H980.5V674.4H981V673.8H981.5V674.1H982V673.7H982.5V673.8H983V674.4H983.5V674.5H984V672.2H984.5V672.4H985V674.4H985.5V674.8H986V672.7H986.5V672.9H987V675.2H987.5V675.5H988V675.2H988.5V675.3H989V674.6H989.5V674.8H990V675.4H990.5V675.5H991V674.3H991.5V674.5H992V676.5H992.5V676.5H993V675.7H993.5V675.8H994V675.7H994.5V675.8H995V676.6H995.5V676.6H996V676.8H996.5V676.9H997V675.8H997.5V675.9H998V675.7H998.5V676.9H999V676.8H999.5V676.8H1000V677.1H1000.5V677.1H1001V677.4H1001.5V675.8H1002V669.9H1002.5V665.8H1003V661.2H1003.5V660.8H1004V660.8H1004.5V661.6H1005V662.2H1005.5V663.4H1006V664.0H1006.5V664.9H1007V665.5H1007.5V666.3H1008V667.3H1008.5V668.1H1009V669.0H1009.5V669.6H1010V670.8H1010.5V671.3H1011V671.4H1011.5V671.8H1012V672.2H1012.5V672.6H1013V673.0H1013.5V673.3H1014V674.0H1014.5V674.3H1015V674.0H1015.5V674.4H1016V675.0H1016.5V674.6H1017V675.1H1017.5V675.2H1018V674.9H1018.5V675.1H1019V675.0H1019.5V675.1H1020V675.5H1020.5V675.5H1021V675.8H1021.5V675.9H1022V675.8H1022.5V675.8H1023V676.1H1023.5V676.1H1024V676.0H1024.5V676.1H1025V676.1H1025.5V676.1H1026V676.2H1026.5V676.0H1027V676.5H1027.5V676.6H1028V676.3H1028.5V676.4H1029V676.4H1029.5V676.6H1030V677.0H1030.5V677.2H1031V677.5H1031.5V677.7H1032V677.6H1032.5V678.0H1033V677.8H1033.5V678.1H1034V678.1H1034.5V678.3H1035V678.1H1035.5V678.2H1036V678.3H1036.5V678.3H1037V678.3H1037.5V678.3H1038V678.3H1038.5V678.3H1039V678.3H1039.5V678.3H1040V678.4H1040.5V678.5H1041V677.5H1041.5V673.3H1042V669.6H1042.5V669.4H1043V670.0H1043.5V670.9H1044V672.0H1044.5V673.1H1045V674.2H1045.5V674.6H1046V674.9H1046.5V675.4H1047V675.2H1047.5V675.5H1048V675.9H1048.5V676.6H1049V675.9H1049.5V676.0H1050V676.7H1050.5V676.8H1051V676.8H1051.5V676.7H1052V676.5H1052.5V676.6H1053V677.1H1053.5V677.3H1054V677.0H1054.5V677.0H1055V677.5H1055.5V677.5H1056V677.3H1056.5V677.3H1057V677.4H1057.5V677.5H1058V677.3H1058.5V677.5H1059V677.5H1059.5V677.7H1060V677.6H1060.5V677.7H1061V677.7H1061.5V678.2H1062V678.0H1062.5V678.0H1063V677.8H1063.5V677.8H1064V678.0H1064.5V678.0H1065V678.3H1065.5V678.3H1066V678.0H1066.5V678.0H1067V678.4H1067.5V678.0H1068V677.9H1068.5V677.9H1069V678.1H1069.5V678.1H1070V678.2H1070.5V678.3H1071V678.3H1071.5V678.3H1072V678.5H1072.5V678.5H1073V678.5H1073.5V678.5H1074V678.2H1074.5V678.2H1075V678.2H1075.5V678.3H1076V679.6V680.7H1075.5V680.7H1075V680.7H1074.5V680.7H1074V680.7H1073.5V680.7H1073V681.0H1072.5V681.0H1072V680.8H1071.5V680.8H1071V680.8H1070.5V680.8H1070V681.2H1069.5V681.2H1069V681.1H1068.5V681.2H1068V680.9H1067.5V681.1H1067V681.1H1066.5V681.1H1066V680.9H1065.5V680.9H1065V681.2H1064.5V681.2H1064V681.2H1063.5V681.2H1063V681.3H1062.5V681.3H1062V681.2H1061.5V681.2H1061V681.2H1060.5V681.3H1060V681.4H1059.5V681.5H1059V682.0H1058.5V682.0H1058V681.8H1057.5V681.9H1057V681.9H1056.5V682.0H1056V681.8H1055.5V681.9H1055V681.9H1054.5V681.9H1054V682.0H1053.5V682.1H1053V682.2H1052.5V682.2H1052V682.5H1051.5V682.5H1051V682.7H1050.5V682.8H1050V683.2H1049.5V683.3H1049V683.0H1048.5V683.3H1048V683.6H1047.5V683.8H1047V683.8H1046.5V684.2H1046V685.0H1045.5V685.4H1045V685.8H1044.5V686.8H1044V688.1H1043.5V689.0H1043V689.4H1042.5V689.6H1042V686.0H1041.5V681.7H1041V680.7H1040.5V680.8H1040V680.8H1039.5V680.8H1039V680.9H1038.5V680.9H1038V680.8H1037.5V680.8H1037V680.9H1036.5V680.9H1036V681.0H1035.5V681.0H1035V680.9H1034.5V681.2H1034V681.1H1033.5V681.2H1033V681.3H1032.5V681.5H1032V681.7H1031.5V681.8H1031V681.8H1030.5V682.0H1030V682.3H1029.5V682.4H1029V682.5H1028.5V682.7H1028V683.0H1027.5V683.0H1027V683.3H1026.5V682.9H1026V683.1H1025.5V683.2H1025V683.2H1024.5V683.3H1024V683.3H1023.5V683.3H1023V683.7H1022.5V683.8H1022V683.5H1021.5V683.5H1021V683.7H1020.5V683.8H1020V683.7H1019.5V683.8H1019V684.2H1018.5V684.3H1018V684.6H1017.5V684.7H1017V684.4H1016.5V684.6H1016V684.4H1015.5V684.7H1015V684.8H1014.5V685.1H1014V685.6H1013.5V685.9H1013V686.1H1012.5V686.4H1012V687.3H1011.5V687.8H1011V687.6H1010.5V688.0H1010V688.7H1009.5V689.2H1009V691.1H1008.5V691.9H1008V692.9H1007.5V693.7H1007V694.1H1006.5V695.0H1006V695.8H1005.5V696.8H1005V698.0H1004.5V698.8H1004V698.0H1003.5V697.6H1003V693.4H1002.5V689.6H1002V683.4H1001.5V682.0H1001V683.4H1000.5V683.4H1000V683.7H999.5V683.7H999V683.3H998.5V682.0H998V684.0H997.5V684.0H997V682.9H996.5V683.0H996V683.8H995.5V683.9H995V682.1H994.5V682.1H994V682.3H993.5V682.3H993V683.8H992.5V683.9H992V684.5H991.5V684.6H991V684.3H990.5V684.4H990V683.1H989.5V683.2H989V683.8H988.5V683.9H988V683.6H987.5V683.4H987V685.6H986.5V685.9H986V686.8H985.5V683.8H985V687.2H984.5V687.4H984V685.2H983.5V685.4H983V687.3H982.5V687.5H982V684.4H981.5V686.6H981V687.0H980.5V687.2H980V688.4H979.5V688.7H979V686.8H978.5V691.0H978V689.6H977.5V689.8H977V687.1H976.5V686.4H976V689.7H975.5V689.9H975V688.3H974.5V688.4H974V687.1H973.5V687.2H973V686.7H972.5V686.9H972V686.9H971.5V687.2H971V688.4H970.5V689.9H970V693.8H969.5V696.2H969V696.7H968.5V697.4H968V698.7H967.5V700.4H967V699.4H966.5V699.2H966V700.2H965.5V699.7H965V698.7H964.5V698.1H964V696.4H963.5V694.1H963V690.3H962.5V684.4H962V680.5H961.5V680.5H961V680.8H960.5V680.8H960V680.7H959.5V680.7H959V680.6H958.5V680.6H958V680.9H957.5V680.9H957V680.7H956.5V680.6H956V680.6H955.5V680.6H955V680.8H954.5V680.5H954V680.9H953.5V680.9H953V680.7H952.5V680.7H952V680.7H951.5V680.9H951V681.1H950.5V681.1H950V681.1H949.5V681.1H949V680.9H948.5V681.0H948V681.0H947.5V681.2H947V682.5H946.5V683.1H946V682.9H945.5V683.2H945V683.6H944.5V683.7H944V682.5H943.5V682.5H943V682.9H942.5V682.5H942V683.5H941.5V683.5H941V682.5H940.5V682.6H940V683.3H939.5V683.3H939V682.7H938.5V682.8H938V683.1H937.5V684.3H937V683.3H936.5V683.3H936V683.4H935.5V683.4H935V682.8H934.5V682.8H934V684.2H933.5V684.2H933V683.9H932.5V684.0H932V683.7H931.5V683.8H931V683.8H930.5V684.1H930V685.7H929.5V686.1H929V687.2H928.5V687.8H928V687.9H927.5V688.6H927V689.9H926.5V689.9H926V691.0H925.5V691.8H925V692.1H924.5V690.2H924V687.9H923.5V686.1H923V682.1H922.5V680.5H922V680.5H921.5V680.5H921V680.5H920.5V680.5H920V680.5H919.5V680.7H919V680.5H918.5V680.7H918V680.7H917.5V680.7H917V680.9H916.5V680.9H916V680.6H915.5V680.6H915V680.8H914.5V680.8H914V680.7H913.5V680.7H913V680.9H912.5V680.9H912V681.0H911.5V681.0H911V681.0H910.5V681.0H910V680.9H909.5V680.9H909V681.2H908.5V681.2H908V681.1H907.5V681.1H907V680.9H906.5V681.1H906V681.0H905.5V681.0H905V681.0H904.5V681.0H904V681.0H903.5V681.0H903V681.0H902.5V681.1H902V681.4H901.5V681.5H901V681.6H900.5V681.7H900V681.5H899.5V681.5H899V681.7H898.5V682.1H898V681.6H897.5V681.6H897V681.8H896.5V681.9H896V681.8H895.5V681.8H895V681.9H894.5V681.9H894V682.1H893.5V682.6H893V682.3H892.5V682.4H892V682.5H891.5V682.6H891V682.8H890.5V682.9H890V683.0H889.5V683.2H889V683.6H888.5V683.8H888V684.3H887.5V684.7H887V685.3H886.5V686.3H886V687.1H885.5V688.0H885V688.6H884.5V689.2H884V685.8H883.5V682.0H883V680.7H882.5V680.7H882V680.7H881.5V680.8H881V680.8H880.5V680.8H880V680.9H879.5V680.9H879V680.9H878.5V680.9H878V680.9H877.5V681.1H877V681.1H876.5V681.1H876V681.1H875.5V681.2H875V681.3H874.5V681.4H874V681.4H873.5V681.5H873V681.8H872.5V681.9H872V682.1H871.5V682.3H871V682.5H870.5V682.8H870V682.6H869.5V682.7H869V683.1H868.5V683.2H868V683.2H867.5V683.3H867V683.5H866.5V683.5H866V683.3H865.5V683.4H865V683.4H864.5V683.5H864V683.7H863.5V683.7H863V683.5H862.5V683.5H862V683.4H861.5V683.5H861V683.9H860.5V684.0H860V684.2H859.5V684.4H859V684.3H858.5V684.4H858V684.9H857.5V685.1H857V685.4H856.5V685.7H856V685.5H855.5V686.1H855V686.7H854.5V687.1H854V686.7H853.5V687.1H853V688.5H852.5V689.0H852V689.6H851.5V690.2H851V690.8H850.5V691.6H850V692.5H849.5V693.7H849V694.5H848.5V695.1H848V695.7H847.5V696.5H847V697.2H846.5V698.5H846V698.6H845.5V698.4H845V694.7H844.5V690.5H844V684.5H843.5V680.4H843V680.5H842.5V680.5H842V680.5H841.5V680.4H841V680.6H840.5V680.4H840V680.6H839.5V680.6H839V680.6H838.5V680.6H838V680.6H837.5V680.5H837V680.6H836.5V680.6H836V680.7H835.5V680.7H835V680.6H834.5V680.6H834V680.7H833.5V680.7H833V680.6H832.5V680.6H832V680.6H831.5V680.7H831V681.0H830.5V681.0H830V680.6H829.5V680.6H829V681.0H828.5V681.0H828V681.1H827.5V681.1H827V680.9H826.5V680.9H826V681.1H825.5V680.8H825V680.7H824.5V680.9H824V681.2H823.5V681.3H823V681.1H822.5V681.2H822V681.4H821.5V681.5H821V681.6H820.5V681.6H820V681.3H819.5V681.3H819V681.5H818.5V681.5H818V681.4H817.5V681.4H817V681.8H816.5V681.8H816V681.8H815.5V681.9H815V681.8H814.5V681.7H814V682.0H813.5V682.1H813V681.9H812.5V681.9H812V682.2H811.5V682.8H811V682.8H810.5V683.0H810V683.0H809.5V683.2H809V683.7H808.5V684.1H808V684.5H807.5V685.4H807V686.6H806.5V687.5H806V687.5H805.5V688.3H805V685.2H804.5V682.0H804V682.9H803.5V682.9H803V683.3H802.5V683.6H802V681.9H801.5V681.9H801V682.8H800.5V682.8H800V683.0H799.5V683.1H799V683.4H798.5V683.4H798V682.4H797.5V682.4H797V682.7H796.5V683.4H796V684.5H795.5V684.6H795V682.9H794.5V682.9H794V685.1H793.5V685.3H793V683.7H792.5V685.4H792V684.5H791.5V684.6H791V685.6H790.5V683.3H790V685.2H789.5V683.8H789V684.4H788.5V684.5H788V683.6H787.5V683.7H787V683.8H786.5V684.7H786V687.6H785.5V687.8H785V685.9H784.5V688.6H784V686.8H783.5V687.0H783V687.4H782.5V687.7H782V685.6H781.5V685.8H781V690.2H780.5V690.4H780V686.4H779.5V686.5H779V691.7H778.5V691.9H778V687.0H777.5V687.1H777V687.0H776.5V687.1H776V689.2H775.5V692.4H775V689.3H774.5V690.5H774V691.6H773.5V690.3H773V694.8H772.5V695.7H772V695.9H771.5V697.0H771V700.9H770.5V698.7H770V699.2H769.5V699.5H769V699.0H768.5V700.5H768V699.3H767.5V698.4H767V696.6H766.5V695.0H766V693.5H765.5V691.4H765V685.9H764.5V680.6H764V680.7H763.5V680.7H763V680.7H762.5V680.8H762V680.7H761.5V680.8H761V680.7H760.5V680.8H760V680.6H759.5V680.6H759V680.8H758.5V680.8H758V680.8H757.5V680.9H757V680.9H756.5V681.0H756V680.9H755.5V680.9H755V681.0H754.5V681.0H754V681.1H753.5V681.1H753V680.8H752.5V680.9H752V680.9H751.5V681.1H751V681.2H750.5V681.2H750V680.9H749.5V680.9H749V681.2H748.5V681.2H748V681.3H747.5V681.3H747V681.1H746.5V681.1H746V681.1H745.5V681.1H745V681.1H744.5V681.5H744V681.3H743.5V681.4H743V681.4H742.5V681.5H742V681.8H741.5V681.8H741V682.3H740.5V682.3H740V682.2H739.5V682.2H739V681.7H738.5V681.7H738V682.1H737.5V682.0H737V682.0H736.5V682.1H736V682.2H735.5V682.3H735V682.4H734.5V682.4H734V682.7H733.5V682.9H733V682.4H732.5V683.3H732V683.3H731.5V683.5H731V684.0H730.5V684.3H730V684.6H729.5V685.1H729V685.9H728.5V687.0H728V687.7H727.5V688.9H727V689.6H726.5V690.2H726V687.1H725.5V683.0H725V680.7H724.5V680.7H724V680.9H723.5V680.9H723V680.8H722.5V680.9H722V680.8H721.5V680.9H721V680.9H720.5V681.0H720V681.0H719.5V680.9H719V681.0H718.5V681.1H718V681.1H717.5V681.3H717V681.3H716.5V681.4H716V681.7H715.5V681.8H715V681.9H714.5V682.1H714V682.4H713.5V682.6H713V682.8H712.5V682.9H712V682.9H711.5V683.0H711V682.9H710.5V682.9H710V683.4H709.5V683.5H709V683.3H708.5V683.4H708V683.1H707.5V683.1H707V683.3H706.5V683.4H706V683.9H705.5V683.9H705V683.5H704.5V683.4H704V683.5H703.5V683.5H703V683.7H702.5V683.8H702V684.1H701.5V684.2H701V684.1H700.5V684.3H700V685.0H699.5V685.2H699V685.2H698.5V685.5H698V685.9H697.5V686.2H697V686.3H696.5V686.2H696V686.7H695.5V687.1H695V687.9H694.5V688.3H694V688.6H693.5V689.2H693V690.7H692.5V691.3H692V692.7H691.5V693.5H691V693.8H690.5V694.9H690V695.6H689.5V696.5H689V697.6H688.5V698.5H688V698.4H687.5V698.2H687V694.9H686.5V690.8H686V685.7H685.5V682.8H685V682.2H684.5V682.2H684V682.8H683.5V682.3H683V682.8H682.5V683.0H682V683.6H681.5V683.7H681V682.5H680.5V682.5H680V683.4H679.5V683.4H679V684.4H678.5V684.4H678V683.8H677.5V683.9H677V683.5H676.5V684.3H676V684.0H675.5V683.7H675V683.4H674.5V684.0H674V682.9H673.5V682.9H673V683.0H672.5V683.0H672V684.6H671.5V685.0H671V684.7H670.5V685.3H670V686.4H669.5V684.3H669V686.2H668.5V686.4H668V686.0H667.5V686.2H667V686.2H666.5V686.4H666V685.3H665.5V685.5H665V685.9H664.5V684.8H664V685.1H663.5V688.5H663V690.2H662.5V690.5H662V688.9H661.5V689.4H661V685.7H660.5V685.8H660V691.5H659.5V689.0H659V686.8H658.5V690.9H658V688.7H657.5V688.9H657V692.7H656.5V687.7H656V687.9H655.5V688.0H655V694.7H654.5V695.6H654V690.2H653.5V695.8H653V697.5H652.5V699.4H652V699.8H651.5V700.1H651V698.2H650.5V698.0H650V699.0H649.5V698.8H649V697.8H648.5V697.0H648V695.1H647.5V693.1H647V692.2H646.5V687.0H646V680.7H645.5V680.4H645V680.6H644.5V680.6H644V680.5H643.5V680.5H643V680.5H642.5V680.5H642V680.8H641.5V680.8H641V680.8H640.5V680.8H640V680.5H639.5V680.5H639V680.9H638.5V681.0H638V680.5H637.5V680.5H637V680.6H636.5V680.6H636V680.5H635.5V680.5H635V681.1H634.5V681.1H634V680.6H633.5V680.6H633V681.1H632.5V681.2H632V680.9H631.5V681.1H631V681.7H630.5V682.3H630V682.1H629.5V683.2H629V683.9H628.5V683.9H628V683.2H627.5V683.5H627V682.8H626.5V682.8H626V683.1H625.5V683.2H625V683.4H624.5V683.4H624V682.9H623.5V682.9H623V683.3H622.5V683.4H622V684.0H621.5V683.6H621V683.2H620.5V683.3H620V683.4H619.5V683.3H619V683.2H618.5V683.2H618V684.1H617.5V684.1H617V684.0H616.5V684.3H616V682.9H615.5V683.8H615V684.9H614.5V684.6H614V685.9H613.5V686.4H613V686.6H612.5V687.0H612V687.9H611.5V688.6H611V689.8H610.5V690.5H610V691.1H609.5V692.0H609V692.7H608.5V690.4H608V688.5H607.5V686.9H607V683.4H606.5V680.5H606V680.7H605.5V680.6H605V680.7H604.5V680.7H604V680.7H603.5V680.7H603V680.5H602.5V680.6H602V680.7H601.5V680.7H601V680.6H600.5V680.7H600V680.7H599.5V680.7H599V680.7H598.5V680.6H598V680.7H597.5V680.7H597V680.8H596.5V680.9H596V680.8H595.5V681.0H595V680.7H594.5V680.7H594V680.9H593.5V681.0H593V680.8H592.5V681.1H592V681.0H591.5V681.0H591V681.2H590.5V681.2H590V681.0H589.5V681.1H589V681.0H588.5V681.1H588V680.9H587.5V680.9H587V680.9H586.5V681.1H586V681.5H585.5V681.6H585V681.5H584.5V681.8H584V681.7H583.5V681.8H583V681.6H582.5V682.1H582V682.0H581.5V682.1H581V681.9H580.5V681.9H580V681.8H579.5V681.8H579V681.6H578.5V681.7H578V681.9H577.5V682.0H577V681.8H576.5V681.9H576V682.1H575.5V682.2H575V682.9H574.5V683.1H574V683.3H573.5V683.5H573V683.4H572.5V683.6H572V684.1H571.5V684.5H571V684.8H570.5V685.7H570V687.0H569.5V687.9H569V688.6H568.5V688.7H568V687.0H567.5V683.3H567V680.7H566.5V680.7H566V680.8H565.5V680.9H565V680.9H564.5V680.9H564V680.9H563.5V680.9H563V681.0H562.5V680.9H562V680.8H561.5V680.9H561V681.0H560.5V681.0H560V681.2H559.5V681.3H559V681.2H558.5V681.4H558V681.7H557.5V681.8H557V681.8H556.5V682.2H556V682.3H555.5V682.5H555V682.5H554.5V682.7H554V682.6H553.5V682.7H553V682.7H552.5V682.8H552V683.2H551.5V683.3H551V683.2H550.5V683.2H550V683.3H549.5V683.2H549V683.4H548.5V683.4H548V683.3H547.5V683.3H547V683.4H546.5V683.5H546V684.0H545.5V684.1H545V684.0H544.5V683.9H544V684.1H543.5V684.3H543V684.6H542.5V684.7H542V684.4H541.5V684.5H541V684.6H540.5V684.9H540V685.3H539.5V685.6H539V686.8H538.5V687.2H538V686.8H537.5V687.2H537V687.8H536.5V688.3H536V688.1H535.5V688.5H535V689.7H534.5V691.5H534V692.1H533.5V692.9H533V693.7H532.5V694.5H532V695.3H531.5V696.2H531V697.1H530.5V698.0H530V698.1H529.5V698.4H529V695.5H528.5V691.4H528V686.8H527.5V680.4H527V680.6H526.5V680.6H526V680.5H525.5V680.6H525V680.5H524.5V680.6H524V680.6H523.5V680.6H523V680.5H522.5V680.6H522V680.6H521.5V680.5H521V680.7H520.5V680.7H520V680.5H519.5V680.5H519V680.5H518.5V680.5H518V680.6H517.5V680.7H517V680.8H516.5V680.8H516V680.7H515.5V680.7H515V680.7H514.5V680.7H514V680.9H513.5V680.9H513V681.0H512.5V681.0H512V680.9H511.5V680.9H511V680.8H510.5V680.9H510V680.9H509.5V680.9H509V680.7H508.5V680.8H508V681.0H507.5V681.1H507V681.1H506.5V681.1H506V681.3H505.5V681.4H505V681.5H504.5V681.5H504V681.7H503.5V681.8H503V681.6H502.5V681.6H502V681.7H501.5V681.7H501V681.6H500.5V681.6H500V681.5H499.5V681.6H499V681.7H498.5V681.7H498V681.9H497.5V681.9H497V681.9H496.5V681.8H496V682.0H495.5V682.0H495V682.8H494.5V683.0H494V683.2H493.5V683.3H493V683.5H492.5V683.8H492V684.6H491.5V685.5H491V686.1H490.5V686.9H490V687.4H489.5V687.9H489V686.2H488.5V683.0H488V682.7H487.5V682.8H487V682.7H486.5V682.3H486V683.1H485.5V683.1H485V682.2H484.5V682.2H484V682.1H483.5V682.1H483V682.1H482.5V683.4H482V683.1H481.5V683.1H481V683.2H480.5V684.4H480V683.6H479.5V683.6H479V684.6H478.5V684.7H478V683.4H477.5V683.5H477V682.8H476.5V682.9H476V683.4H475.5V683.5H475V683.5H474.5V684.9H474V683.1H473.5V683.2H473V686.6H472.5V684.2H472V683.8H471.5V685.7H471V685.6H470.5V684.1H470V684.4H469.5V685.0H469V687.1H468.5V687.3H468V688.4H467.5V688.7H467V685.2H466.5V686.0H466V685.9H465.5V685.8H465V688.4H464.5V688.7H464V690.8H463.5V691.0H463V686.9H462.5V691.2H462V686.6H461.5V686.7H461V686.4H460.5V691.7H460V689.6H459.5V689.8H459V687.9H458.5V692.7H458V691.2H457.5V689.7H457V688.4H456.5V688.9H456V693.7H455.5V698.0H455V698.1H454.5V699.9H454V698.2H453.5V699.4H453V700.0H452.5V699.8H452V700.2H451.5V700.4H451V696.5H450.5V695.3H450V694.9H449.5V692.7H449V688.9H448.5V680.4H448V680.4H447.5V680.5H447Z" fill="#85836f" opacity=".55"/><path d="M447 679.6V678.7H447.5V678.8H448V678.8H448.5V672.7H449V668.7H449.5V666.9H450V664.9H450.5V663.8H451V663.5H451.5V662.9H452V663.5H452.5V663.4H453V663.3H453.5V664.8H454V664.4H454.5V663.0H455V665.9H455.5V671.2H456V667.8H456.5V668.4H457V666.8H457.5V667.6H458V672.0H458.5V667.8H459V671.3H459.5V671.4H460V672.0H460.5V670.1H461V670.4H461.5V670.6H462V672.4H462.5V670.6H463V671.0H463.5V671.1H464V672.7H464.5V672.9H465V673.0H465.5V674.4H466V671.6H466.5V674.9H467V673.1H467.5V673.3H468V674.5H468.5V674.6H469V672.8H469.5V674.4H470V673.6H470.5V673.7H471V673.6H471.5V674.4H472V675.4H472.5V673.5H473V675.8H473.5V675.9H474V676.1H474.5V675.7H475V676.2H475.5V676.3H476V676.3H476.5V676.3H477V676.8H477.5V676.9H478V676.4H478.5V676.5H479V676.8H479.5V676.8H480V677.0H480.5V676.7H481V676.9H481.5V676.9H482V675.4H482.5V676.0H483V676.6H483.5V676.7H484V676.7H484.5V676.7H485V677.0H485.5V677.0H486V677.5H486.5V676.3H487V676.4H487.5V676.5H488V676.5H488.5V672.9H489V672.0H489.5V672.5H490V672.6H490.5V673.4H491V674.3H491.5V675.1H492V675.6H492.5V676.0H493V676.3H493.5V676.4H494V676.5H494.5V676.6H495V677.3H495.5V677.3H496V676.9H496.5V677.3H497V677.3H497.5V677.4H498V677.5H498.5V677.6H499V677.7H499.5V677.8H500V678.0H500.5V678.0H501V677.9H501.5V678.0H502V677.9H502.5V677.9H503V678.0H503.5V678.0H504V677.6H504.5V677.6H505V678.2H505.5V677.9H506V678.2H506.5V678.3H507V678.2H507.5V678.3H508V678.5H508.5V678.5H509V678.4H509.5V678.6H510V678.5H510.5V678.5H511V678.4H511.5V678.5H512V678.4H512.5V678.5H513V678.5H513.5V678.5H514V678.4H514.5V678.4H515V678.5H515.5V678.5H516V678.6H516.5V678.6H517V678.5H517.5V678.5H518V678.6H518.5V678.6H519V678.7H519.5V678.7H520V678.7H520.5V678.8H521V678.6H521.5V678.7H522V678.6H522.5V678.6H523V678.8H523.5V678.8H524V678.8H524.5V678.6H525V678.8H525.5V678.7H526V678.7H526.5V678.7H527V678.8H527.5V672.7H528V668.0H528.5V664.3H529V661.7H529.5V662.1H530V662.3H530.5V663.1H531V664.0H531.5V664.8H532V665.4H532.5V666.2H533V666.9H533.5V667.7H534V668.1H534.5V669.6H535V670.1H535.5V670.5H536V671.6H536.5V672.0H537V672.5H537.5V672.8H538V673.0H538.5V673.3H539V673.5H539.5V673.8H540V674.3H540.5V674.6H541V674.9H541.5V675.0H542V675.1H542.5V675.2H543V675.6H543.5V675.7H544V675.4H544.5V675.8H545V675.6H545.5V675.6H546V676.1H546.5V676.1H547V675.6H547.5V675.7H548V675.9H548.5V675.9H549V676.3H549.5V676.2H550V675.9H550.5V676.0H551V676.3H551.5V676.4H552V676.4H552.5V676.5H553V676.3H553.5V676.4H554V676.6H554.5V676.7H555V677.1H555.5V677.3H556V677.5H556.5V677.5H557V677.7H557.5V677.8H558V677.9H558.5V678.0H559V678.0H559.5V678.1H560V678.2H560.5V678.3H561V678.4H561.5V678.4H562V678.5H562.5V678.5H563V678.4H563.5V678.5H564V678.5H564.5V678.5H565V678.5H565.5V678.5H566V678.5H566.5V678.5H567V676.4H567.5V673.1H568V670.8H568.5V671.3H569V671.9H569.5V672.8H570V673.8H570.5V674.8H571V674.8H571.5V675.2H572V675.9H572.5V676.1H573V676.1H573.5V676.2H574V676.5H574.5V677.0H575V676.7H575.5V676.8H576V677.0H576.5V677.1H577V677.4H577.5V677.5H578V677.5H578.5V677.6H579V677.8H579.5V677.8H580V677.5H580.5V677.5H581V677.5H581.5V677.5H582V677.9H582.5V677.7H583V677.3H583.5V677.3H584V677.4H584.5V677.9H585V677.7H585.5V677.8H586V678.1H586.5V678.3H587V678.2H587.5V678.0H588V678.2H588.5V678.4H589V678.0H589.5V678.0H590V678.3H590.5V678.3H591V678.5H591.5V678.5H592V678.4H592.5V678.5H593V678.2H593.5V678.4H594V678.4H594.5V678.5H595V678.6H595.5V678.5H596V678.6H596.5V678.4H597V678.4H597.5V678.5H598V678.7H598.5V678.5H599V678.6H599.5V678.6H600V678.5H600.5V678.5H601V678.5H601.5V678.6H602V678.5H602.5V678.6H603V678.7H603.5V678.6H604V678.8H604.5V678.8H605V678.6H605.5V678.7H606V678.7H606.5V676.2H607V673.2H607.5V671.5H608V670.2H608.5V668.0H609V668.3H609.5V669.1H610V670.5H610.5V671.1H611V671.5H611.5V672.2H612V672.9H612.5V673.7H613V673.5H613.5V673.9H614V676.2H614.5V676.4H615V675.9H615.5V676.4H616V676.1H616.5V676.6H617V676.5H617.5V675.1H618V676.7H618.5V676.7H619V675.9H619.5V675.6H620V675.9H620.5V675.9H621V676.2H621.5V676.4H622V676.3H622.5V676.3H623V676.6H623.5V676.6H624V676.7H624.5V676.7H625V676.3H625.5V676.3H626V675.5H626.5V675.5H627V676.7H627.5V675.7H628V676.2H628.5V676.2H629V676.1H629.5V677.2H630V677.6H630.5V677.8H631V677.7H631.5V677.9H632V677.9H632.5V678.0H633V678.7H633.5V678.7H634V678.2H634.5V678.3H635V678.7H635.5V678.4H636V678.4H636.5V678.4H637V678.7H637.5V678.7H638V678.7H638.5V678.7H639V678.8H639.5V678.7H640V678.4H640.5V678.4H641V678.5H641.5V678.5H642V678.7H642.5V678.6H643V678.6H643.5V678.6H644V678.7H644.5V678.7H645V678.6H645.5V678.8H646V674.0H646.5V670.1H647V668.3H647.5V666.6H648V664.8H648.5V664.1H649V664.9H649.5V664.7H650V663.9H650.5V663.7H651V664.2H651.5V664.4H652V665.1H652.5V665.5H653V666.4H653.5V670.5H654V668.1H654.5V668.7H655V669.1H655.5V669.3H656V671.2H656.5V670.0H657V671.9H657.5V672.0H658V673.1H658.5V672.6H659V669.2H659.5V674.0H660V673.2H660.5V673.3H661V669.6H661.5V671.9H662V670.3H662.5V670.6H663V671.7H663.5V673.0H664V672.6H664.5V673.1H665V673.1H665.5V673.3H666V673.9H666.5V674.0H667V673.3H667.5V673.5H668V673.6H668.5V673.8H669V676.3H669.5V674.7H670V674.8H670.5V674.7H671V676.0H671.5V676.6H672V676.2H672.5V676.3H673V674.6H673.5V674.7H674V674.8H674.5V675.2H675V675.7H675.5V676.7H676V676.6H676.5V676.8H677V677.1H677.5V677.1H678V675.4H678.5V675.5H679V677.4H679.5V677.5H680V677.1H680.5V677.1H681V677.0H681.5V677.1H682V676.7H682.5V676.3H683V676.3H683.5V676.7H684V677.1H684.5V677.1H685V676.8H685.5V673.8H686V668.9H686.5V665.0H687V661.5H687.5V661.4H688V662.1H688.5V662.8H689V663.4H689.5V664.2H690V665.2H690.5V666.1H691V666.9H691.5V667.7H692V668.1H692.5V668.8H693V669.5H693.5V670.8H694V671.4H694.5V672.0H695V672.0H695.5V672.4H696V673.2H696.5V673.5H697V673.5H697.5V673.8H698V674.0H698.5V674.3H699V674.4H699.5V674.6H700V675.0H700.5V675.4H701V675.1H701.5V675.2H702V675.4H702.5V675.5H703V675.9H703.5V676.0H704V675.9H704.5V675.8H705V675.7H705.5V675.8H706V675.8H706.5V675.8H707V676.3H707.5V676.4H708V675.9H708.5V676.0H709V676.2H709.5V676.3H710V676.3H710.5V676.4H711V676.8H711.5V676.8H712V676.5H712.5V676.6H713V677.0H713.5V677.2H714V677.3H714.5V677.4H715V677.5H715.5V677.6H716V677.8H716.5V678.1H717V678.2H717.5V678.2H718V678.3H718.5V678.3H719V678.3H719.5V678.2H720V678.3H720.5V678.3H721V678.3H721.5V678.4H722V678.5H722.5V678.5H723V678.6H723.5V678.6H724V678.5H724.5V678.5H725V676.5H725.5V672.7H726V670.1H726.5V670.7H727V670.8H727.5V672.3H728V672.8H728.5V673.9H729V674.3H729.5V674.7H730V675.6H730.5V675.8H731V675.7H731.5V675.9H732V676.1H732.5V676.8H733V676.4H733.5V676.9H734V676.6H734.5V676.7H735V677.0H735.5V677.1H736V677.1H736.5V677.2H737V677.4H737.5V677.4H738V677.4H738.5V677.4H739V677.5H739.5V677.5H740V677.6H740.5V677.6H741V677.6H741.5V677.7H742V677.5H742.5V677.6H743V677.6H743.5V677.7H744V677.7H744.5V678.1H745V677.9H745.5V677.9H746V678.3H746.5V678.3H747V677.8H747.5V677.9H748V678.0H748.5V678.0H749V678.0H749.5V678.0H750V678.3H750.5V678.3H751V678.2H751.5V678.3H752V678.1H752.5V678.1H753V678.3H753.5V678.3H754V678.3H754.5V678.4H755V678.3H755.5V678.4H756V678.5H756.5V678.6H757V678.5H757.5V678.5H758V678.5H758.5V678.5H759V678.5H759.5V678.5H760V678.5H760.5V678.5H761V678.6H761.5V678.6H762V678.6H762.5V678.6H763V678.7H763.5V678.7H764V678.7H764.5V674.7H765V670.3H765.5V668.6H766V666.4H766.5V665.1H767V663.4H767.5V662.7H768V664.8H768.5V663.2H769V662.4H769.5V662.6H770V664.5H770.5V664.0H771V665.8H771.5V666.7H772V669.8H772.5V670.3H773V668.2H773.5V670.4H774V669.0H774.5V670.4H775V672.7H775.5V673.4H776V671.8H776.5V671.9H777V669.4H777.5V669.6H778V671.9H778.5V672.0H779V672.6H779.5V672.7H780V671.0H780.5V671.2H781V673.2H781.5V673.4H782V674.5H782.5V674.7H783V672.8H783.5V673.0H784V673.5H784.5V674.0H785V673.0H785.5V673.1H786V673.4H786.5V674.2H787V674.9H787.5V675.1H788V674.3H788.5V674.5H789V675.3H789.5V674.6H790V675.2H790.5V676.0H791V676.4H791.5V676.5H792V676.1H792.5V676.2H793V676.3H793.5V676.4H794V674.8H794.5V674.9H795V677.1H795.5V677.1H796V676.1H796.5V676.1H797V675.6H797.5V675.7H798V675.8H798.5V675.8H799V676.1H799.5V676.2H800V677.4H800.5V677.4H801V677.1H801.5V677.2H802V677.3H802.5V677.1H803V676.3H803.5V676.3H804V677.3H804.5V674.3H805V672.0H805.5V672.0H806V672.5H806.5V673.3H807V674.2H807.5V675.0H808V675.5H808.5V675.8H809V676.1H809.5V676.3H810V676.5H810.5V676.7H811V676.9H811.5V676.9H812V676.9H812.5V677.0H813V677.5H813.5V677.6H814V677.7H814.5V677.2H815V677.5H815.5V677.5H816V677.6H816.5V677.6H817V677.9H817.5V678.0H818V677.8H818.5V677.8H819V677.5H819.5V677.5H820V677.8H820.5V677.8H821V677.9H821.5V678.0H822V678.3H822.5V678.3H823V678.3H823.5V678.3H824V678.1H824.5V678.4H825V678.5H825.5V678.4H826V678.3H826.5V678.4H827V678.4H827.5V678.4H828V678.5H828.5V678.5H829V678.6H829.5V678.6H830V678.6H830.5V678.7H831V678.6H831.5V678.5H832V678.4H832.5V678.4H833V678.6H833.5V678.6H834V678.4H834.5V678.5H835V678.6H835.5V678.6H836V678.7H836.5V678.7H837V678.6H837.5V678.6H838V678.7H838.5V678.7H839V678.6H839.5V678.7H840V678.8H840.5V678.9H841V678.8H841.5V678.7H842V678.9H842.5V678.7H843V678.8H843.5V674.9H844V669.7H844.5V665.8H845V662.4H845.5V662.2H846V662.1H846.5V662.8H847V663.1H847.5V663.9H848V665.0H848.5V666.0H849V666.5H849.5V667.1H850V668.1H850.5V668.9H851V669.9H851.5V670.4H852V671.2H852.5V671.8H853V672.5H853.5V672.9H854V672.9H854.5V673.3H855V673.8H855.5V673.6H856V673.7H856.5V674.0H857V674.8H857.5V674.9H858V674.9H858.5V675.0H859V675.1H859.5V675.3H860V675.5H860.5V675.6H861V676.0H861.5V675.8H862V675.6H862.5V675.7H863V676.2H863.5V676.2H864V676.0H864.5V676.1H865V675.7H865.5V675.8H866V676.2H866.5V676.2H867V676.5H867.5V676.5H868V676.6H868.5V676.6H869V676.6H869.5V676.6H870V676.8H870.5V676.6H871V677.1H871.5V677.3H872V677.4H872.5V677.6H873V677.6H873.5V677.7H874V678.0H874.5V678.0H875V677.9H875.5V678.1H876V678.2H876.5V678.3H877V678.4H877.5V678.4H878V678.4H878.5V678.5H879V678.4H879.5V678.5H880V678.5H880.5V678.5H881V678.4H881.5V678.5H882V678.6H882.5V678.6H883V677.4H883.5V673.9H884V671.0H884.5V671.5H885V671.6H885.5V672.4H886V673.2H886.5V674.1H887V674.9H887.5V675.3H888V675.6H888.5V675.8H889V676.2H889.5V676.3H890V676.3H890.5V677.0H891V677.2H891.5V677.2H892V677.1H892.5V677.1H893V677.5H893.5V677.4H894V677.3H894.5V677.4H895V677.6H895.5V677.6H896V677.2H896.5V677.5H897V677.8H897.5V677.8H898V677.9H898.5V677.8H899V677.5H899.5V677.6H900V677.7H900.5V677.8H901V677.9H901.5V678.0H902V678.0H902.5V678.1H903V678.4H903.5V678.4H904V678.1H904.5V678.1H905V678.2H905.5V678.2H906V678.5H906.5V678.3H907V678.4H907.5V678.4H908V678.5H908.5V678.5H909V678.3H909.5V678.3H910V678.4H910.5V678.4H911V678.6H911.5V678.6H912V678.6H912.5V678.6H913V678.4H913.5V678.4H914V678.6H914.5V678.6H915V678.6H915.5V678.6H916V678.7H916.5V678.7H917V678.7H917.5V678.7H918V678.5H918.5V678.6H919V678.6H919.5V678.8H920V678.7H920.5V678.7H921V678.6H921.5V678.7H922V678.7H922.5V677.3H923V673.9H923.5V671.9H924V670.9H924.5V669.3H925V669.1H925.5V669.8H926V669.8H926.5V670.7H927V670.9H927.5V671.6H928V672.8H928.5V673.3H929V673.7H929.5V673.7H930V674.9H930.5V675.2H931V675.4H931.5V675.3H932V675.5H932.5V675.6H933V675.6H933.5V675.6H934V675.7H934.5V675.7H935V676.3H935.5V676.4H936V676.0H936.5V676.1H937V675.7H937.5V676.6H938V675.6H938.5V675.7H939V676.5H939.5V676.5H940V676.9H940.5V675.8H941V676.3H941.5V676.3H942V675.5H942.5V676.1H943V676.4H943.5V676.4H944V676.5H944.5V676.5H945V675.9H945.5V676.2H946V677.2H946.5V677.6H947V677.6H947.5V677.8H948V678.0H948.5V678.1H949V678.6H949.5V678.6H950V678.3H950.5V678.4H951V678.4H951.5V678.6H952V678.3H952.5V678.3H953V678.7H953.5V678.7H954V678.5H954.5V678.4H955V678.7H955.5V678.7H956V678.6H956.5V678.6H957V678.4H957.5V678.4H958V678.5H958.5V678.7H959V678.7H959.5V678.7H960V678.8H960.5V678.7H961V678.7H961.5V678.8H962V676.1H962.5V669.7H963V668.1H963.5V666.3H964V664.5H964.5V664.1H965V663.5H965.5V663.1H966V664.1H966.5V663.9H967V664.1H967.5V665.0H968V664.5H968.5V665.1H969V665.6H969.5V668.2H970V671.8H970.5V670.1H971V667.8H971.5V668.2H972V671.4H972.5V671.6H973V673.6H973.5V673.7H974V671.0H974.5V671.1H975V672.4H975.5V672.5H976V671.7H976.5V671.4H977V673.7H977.5V673.8H978V669.5H978.5V674.6H979V673.8H979.5V673.9H980V674.9H980.5V675.0H981V674.5H981.5V674.8H982V674.4H982.5V674.5H983V675.0H983.5V675.1H984V673.1H984.5V673.3H985V675.0H985.5V675.4H986V673.5H986.5V673.7H987V675.7H987.5V675.9H988V675.7H988.5V675.8H989V675.2H989.5V675.3H990V675.9H990.5V676.0H991V675.0H991.5V675.1H992V676.9H992.5V676.9H993V676.2H993.5V676.2H994V676.2H994.5V676.3H995V676.9H995.5V677.0H996V677.2H996.5V677.2H997V676.2H997.5V676.3H998V676.2H998.5V677.2H999V677.1H999.5V677.1H1000V677.4H1000.5V677.4H1001V677.6H1001.5V676.0H1002V670.4H1002.5V666.5H1003V662.2H1003.5V661.8H1004V661.7H1004.5V662.5H1005V663.1H1005.5V664.2H1006V664.8H1006.5V665.6H1007V666.2H1007.5V666.9H1008V667.9H1008.5V668.7H1009V669.6H1009.5V670.1H1010V671.3H1010.5V671.8H1011V671.9H1011.5V672.4H1012V672.7H1012.5V673.1H1013V673.5H1013.5V673.8H1014V674.4H1014.5V674.7H1015V674.4H1015.5V674.7H1016V675.3H1016.5V675.0H1017V675.4H1017.5V675.5H1018V675.3H1018.5V675.4H1019V675.3H1019.5V675.4H1020V675.8H1020.5V675.8H1021V676.1H1021.5V676.1H1022V676.0H1022.5V676.1H1023V676.3H1023.5V676.4H1024V676.3H1024.5V676.3H1025V676.3H1025.5V676.4H1026V676.4H1026.5V676.3H1027V676.7H1027.5V676.8H1028V676.5H1028.5V676.7H1029V676.7H1029.5V676.9H1030V677.2H1030.5V677.4H1031V677.6H1031.5V677.8H1032V677.8H1032.5V678.1H1033V678.0H1033.5V678.2H1034V678.2H1034.5V678.4H1035V678.2H1035.5V678.3H1036V678.4H1036.5V678.4H1037V678.4H1037.5V678.4H1038V678.4H1038.5V678.4H1039V678.4H1039.5V678.4H1040V678.5H1040.5V678.6H1041V677.7H1041.5V673.8H1042V670.4H1042.5V670.2H1043V670.8H1043.5V671.6H1044V672.6H1044.5V673.6H1045V674.6H1045.5V675.0H1046V675.3H1046.5V675.7H1047V675.6H1047.5V675.8H1048V676.2H1048.5V676.9H1049V676.2H1049.5V676.3H1050V676.9H1050.5V677.0H1051V677.0H1051.5V676.9H1052V676.7H1052.5V676.8H1053V677.2H1053.5V677.5H1054V677.2H1054.5V677.2H1055V677.6H1055.5V677.6H1056V677.4H1056.5V677.5H1057V677.6H1057.5V677.6H1058V677.5H1058.5V677.6H1059V677.7H1059.5V677.8H1060V677.7H1060.5V677.8H1061V677.8H1061.5V678.3H1062V678.1H1062.5V678.1H1063V677.9H1063.5V677.9H1064V678.1H1064.5V678.1H1065V678.4H1065.5V678.4H1066V678.1H1066.5V678.1H1067V678.4H1067.5V678.1H1068V678.0H1068.5V678.1H1069V678.2H1069.5V678.2H1070V678.3H1070.5V678.4H1071V678.4H1071.5V678.4H1072V678.6H1072.5V678.6H1073V678.6H1073.5V678.6H1074V678.3H1074.5V678.3H1075V678.3H1075.5V678.3H1076V679.6V680.6H1075.5V680.6H1075V680.6H1074.5V680.6H1074V680.6H1073.5V680.6H1073V680.9H1072.5V680.9H1072V680.7H1071.5V680.8H1071V680.7H1070.5V680.8H1070V681.1H1069.5V681.1H1069V681.0H1068.5V681.0H1068V680.8H1067.5V681.0H1067V681.0H1066.5V681.0H1066V680.8H1065.5V680.8H1065V681.1H1064.5V681.1H1064V681.1H1063.5V681.1H1063V681.2H1062.5V681.2H1062V681.1H1061.5V681.0H1061V681.1H1060.5V681.2H1060V681.3H1059.5V681.4H1059V681.9H1058.5V681.8H1058V681.7H1057.5V681.7H1057V681.8H1056.5V681.8H1056V681.7H1055.5V681.7H1055V681.7H1054.5V681.7H1054V681.9H1053.5V681.9H1053V682.0H1052.5V682.1H1052V682.3H1051.5V682.3H1051V682.5H1050.5V682.6H1050V682.9H1049.5V683.0H1049V682.7H1048.5V683.0H1048V683.3H1047.5V683.5H1047V683.5H1046.5V683.8H1046V684.5H1045.5V684.9H1045V685.3H1044.5V686.3H1044V687.5H1043.5V688.3H1043V688.6H1042.5V688.8H1042V685.5H1041.5V681.6H1041V680.6H1040.5V680.7H1040V680.7H1039.5V680.7H1039V680.8H1038.5V680.9H1038V680.7H1037.5V680.8H1037V680.8H1036.5V680.8H1036V680.9H1035.5V680.9H1035V680.8H1034.5V681.0H1034V681.0H1033.5V681.1H1033V681.2H1032.5V681.3H1032V681.6H1031.5V681.7H1031V681.7H1030.5V681.8H1030V682.1H1029.5V682.2H1029V682.3H1028.5V682.4H1028V682.7H1027.5V682.8H1027V683.0H1026.5V682.7H1026V682.9H1025.5V683.0H1025V683.0H1024.5V683.0H1024V683.0H1023.5V683.1H1023V683.4H1022.5V683.5H1022V683.2H1021.5V683.2H1021V683.4H1020.5V683.5H1020V683.4H1019.5V683.5H1019V683.9H1018.5V684.0H1018V684.2H1017.5V684.3H1017V684.1H1016.5V684.3H1016V684.1H1015.5V684.4H1015V684.4H1014.5V684.7H1014V685.2H1013.5V685.5H1013V685.6H1012.5V686.0H1012V686.8H1011.5V687.2H1011V687.1H1010.5V687.6H1010V688.2H1009.5V688.7H1009V690.5H1008.5V691.3H1008V692.2H1007.5V693.0H1007V693.4H1006.5V694.2H1006V695.0H1005.5V695.9H1005V697.1H1004.5V697.8H1004V697.1H1003.5V696.7H1003V692.7H1002.5V689.1H1002V683.2H1001.5V681.7H1001V683.0H1000.5V683.0H1000V683.2H999.5V683.2H999V682.8H998.5V681.7H998V683.4H997.5V683.5H997V682.5H996.5V682.6H996V683.3H995.5V683.3H995V681.8H994.5V681.8H994V682.0H993.5V682.0H993V683.3H992.5V683.4H992V683.9H991.5V684.0H991V683.7H990.5V683.8H990V682.7H989.5V682.8H989V683.3H988.5V683.4H988V683.1H987.5V683.0H987V684.9H986.5V685.1H986V685.9H985.5V683.3H985V686.3H984.5V686.5H984V684.5H983.5V684.7H983V686.4H982.5V686.6H982V683.8H981.5V685.7H981V686.1H980.5V686.3H980V687.3H979.5V687.6H979V685.9H978.5V689.7H978V688.4H977.5V688.5H977V686.2H976.5V685.6H976V688.5H975.5V688.6H975V687.3H974.5V687.4H974V686.2H973.5V686.3H973V685.9H972.5V686.0H972V686.0H971.5V686.3H971V686.6H970.5V687.8H970V690.9H969.5V692.9H969V693.3H968.5V693.9H968V694.9H967.5V696.2H967V695.4H966.5V695.3H966V696.1H965.5V695.7H965V694.8H964.5V694.4H964V693.0H963.5V691.2H963V688.2H962.5V683.5H962V680.4H961.5V680.4H961V680.8H960.5V680.7H960V680.6H959.5V680.6H959V680.5H958.5V680.5H958V680.8H957.5V680.8H957V680.6H956.5V680.5H956V680.5H955.5V680.5H955V680.7H954.5V680.5H954V680.8H953.5V680.8H953V680.6H952.5V680.6H952V680.6H951.5V680.8H951V681.0H950.5V681.0H950V681.0H949.5V681.0H949V680.8H948.5V680.9H948V680.9H947.5V681.1H947V682.3H946.5V682.8H946V682.6H945.5V682.9H945V683.4H944.5V683.4H944V682.3H943.5V682.3H943V682.7H942.5V682.3H942V683.2H941.5V683.3H941V682.3H940.5V682.4H940V683.1H939.5V683.1H939V682.5H938.5V682.5H938V682.9H937.5V684.0H937V683.1H936.5V683.1H936V683.1H935.5V683.1H935V682.6H934.5V682.6H934V683.9H933.5V683.9H933V683.6H932.5V683.7H932V683.4H931.5V683.3H931V683.3H930.5V683.5H930V685.0H929.5V685.3H929V686.3H928.5V686.9H928V686.9H927.5V687.6H927V688.7H926.5V688.7H926V689.6H925.5V690.4H925V690.6H924.5V688.9H924V686.9H923.5V685.3H923V681.8H922.5V680.4H922V680.5H921.5V680.4H921V680.5H920.5V680.4H920V680.4H919.5V680.6H919V680.5H918.5V680.6H918V680.6H917.5V680.6H917V680.8H916.5V680.8H916V680.5H915.5V680.5H915V680.7H914.5V680.7H914V680.7H913.5V680.7H913V680.8H912.5V680.8H912V680.9H911.5V680.9H911V680.9H910.5V680.9H910V680.8H909.5V680.8H909V681.1H908.5V681.1H908V681.0H907.5V681.0H907V680.8H906.5V681.0H906V680.9H905.5V680.9H905V680.9H904.5V680.9H904V680.9H903.5V680.9H903V680.9H902.5V681.0H902V681.3H901.5V681.4H901V681.5H900.5V681.6H900V681.3H899.5V681.4H899V681.6H898.5V681.9H898V681.4H897.5V681.4H897V681.7H896.5V681.7H896V681.6H895.5V681.6H895V681.7H894.5V681.8H894V681.9H893.5V682.4H893V682.1H892.5V682.2H892V682.3H891.5V682.4H891V682.5H890.5V682.7H890V682.7H889.5V682.9H889V683.2H888.5V683.5H888V683.9H887.5V684.3H887V684.9H886.5V685.8H886V686.5H885.5V687.3H885V687.9H884.5V688.4H884V685.3H883.5V681.8H883V680.6H882.5V680.6H882V680.7H881.5V680.7H881V680.7H880.5V680.7H880V680.8H879.5V680.8H879V680.8H878.5V680.8H878V680.8H877.5V681.0H877V681.0H876.5V681.0H876V681.0H875.5V681.1H875V681.2H874.5V681.3H874V681.3H873.5V681.4H873V681.6H872.5V681.8H872V681.9H871.5V682.1H871V682.3H870.5V682.6H870V682.4H869.5V682.5H869V682.9H868.5V682.9H868V683.0H867.5V683.0H867V683.2H866.5V683.3H866V683.1H865.5V683.1H865V683.2H864.5V683.2H864V683.4H863.5V683.4H863V683.2H862.5V683.2H862V683.1H861.5V683.3H861V683.6H860.5V683.7H860V683.9H859.5V684.0H859V684.0H858.5V684.1H858V684.5H857.5V684.7H857V685.0H856.5V685.3H856V685.1H855.5V685.7H855V686.2H854.5V686.6H854V686.2H853.5V686.5H853V687.9H852.5V688.5H852V689.1H851.5V689.6H851V690.2H850.5V691.0H850V691.9H849.5V693.0H849V693.7H848.5V694.3H848V694.9H847.5V695.7H847V696.3H846.5V697.5H846V697.7H845.5V697.5H845V694.0H844.5V689.9H844V684.2H843.5V680.3H843V680.5H842.5V680.4H842V680.5H841.5V680.3H841V680.5H840.5V680.4H840V680.5H839.5V680.5H839V680.5H838.5V680.6H838V680.5H837.5V680.4H837V680.5H836.5V680.5H836V680.6H835.5V680.6H835V680.5H834.5V680.5H834V680.6H833.5V680.6H833V680.5H832.5V680.5H832V680.5H831.5V680.6H831V680.9H830.5V680.9H830V680.6H829.5V680.6H829V680.9H828.5V680.9H828V681.0H827.5V681.0H827V680.8H826.5V680.8H826V681.0H825.5V680.7H825V680.7H824.5V680.8H824V681.1H823.5V681.2H823V681.0H822.5V681.1H822V681.3H821.5V681.4H821V681.4H820.5V681.5H820V681.2H819.5V681.2H819V681.3H818.5V681.3H818V681.2H817.5V681.3H817V681.6H816.5V681.6H816V681.7H815.5V681.7H815V681.6H814.5V681.6H814V681.9H813.5V681.9H813V681.7H812.5V681.7H812V682.0H811.5V682.5H811V682.6H810.5V682.7H810V682.7H809.5V682.9H809V683.4H808.5V683.7H808V684.1H807.5V684.9H807V686.1H806.5V686.8H806V686.8H805.5V687.6H805V684.8H804.5V681.8H804V682.5H803.5V682.5H803V682.8H802.5V683.1H802V681.6H801.5V681.7H801V682.4H800.5V682.4H800V682.6H799.5V682.7H799V682.9H798.5V683.0H798V682.1H797.5V682.1H797V682.3H796.5V682.9H796V683.9H795.5V684.0H795V682.5H794.5V682.5H794V684.5H793.5V684.6H793V683.2H792.5V684.7H792V683.9H791.5V684.0H791V684.9H790.5V682.9H790V684.5H789.5V683.3H789V683.8H788.5V683.9H788V683.1H787.5V683.2H787V683.3H786.5V684.1H786V686.6H785.5V686.8H785V685.2H784.5V687.5H784V686.0H783.5V686.2H783V686.5H782.5V686.7H782V684.9H781.5V685.0H781V688.9H780.5V689.1H780V685.6H779.5V685.7H779V690.3H778.5V690.4H778V686.1H777.5V686.2H777V686.1H776.5V686.2H776V688.0H775.5V690.9H775V688.2H774.5V689.2H774V690.2H773.5V688.2H773V691.8H772.5V692.5H772V692.6H771.5V693.5H771V696.6H770.5V694.9H770V695.3H769.5V695.5H769V695.1H768.5V696.3H768V695.3H767.5V694.6H767V693.2H766.5V691.9H766V690.7H765.5V689.0H765V684.6H764.5V680.5H764V680.6H763.5V680.6H763V680.6H762.5V680.7H762V680.7H761.5V680.7H761V680.7H760.5V680.7H760V680.5H759.5V680.5H759V680.7H758.5V680.7H758V680.7H757.5V680.8H757V680.9H756.5V680.9H756V680.8H755.5V680.8H755V680.9H754.5V680.9H754V681.0H753.5V681.0H753V680.7H752.5V680.8H752V680.8H751.5V681.0H751V681.1H750.5V681.1H750V680.8H749.5V680.8H749V681.1H748.5V681.1H748V681.1H747.5V681.2H747V681.0H746.5V681.0H746V681.0H745.5V681.0H745V681.0H744.5V681.4H744V681.2H743.5V681.3H743V681.3H742.5V681.4H742V681.7H741.5V681.7H741V682.1H740.5V682.1H740V682.0H739.5V682.0H739V681.6H738.5V681.6H738V681.9H737.5V681.9H737V681.8H736.5V681.9H736V682.0H735.5V682.1H735V682.2H734.5V682.2H734V682.5H733.5V682.6H733V682.1H732.5V683.0H732V683.0H731.5V683.2H731V683.7H730.5V683.9H730V684.2H729.5V684.6H729V685.4H728.5V686.4H728V687.1H727.5V688.2H727V688.8H726.5V689.4H726V686.5H725.5V682.7H725V680.6H724.5V680.6H724V680.8H723.5V680.8H723V680.7H722.5V680.8H722V680.7H721.5V680.8H721V680.8H720.5V680.9H720V680.9H719.5V680.8H719V680.9H718.5V681.0H718V681.0H717.5V681.1H717V681.2H716.5V681.3H716V681.5H715.5V681.7H715V681.8H714.5V682.0H714V682.2H713.5V682.4H713V682.5H712.5V682.7H712V682.7H711.5V682.7H711V682.7H710.5V682.6H710V683.1H709.5V683.2H709V683.1H708.5V683.1H708V682.8H707.5V682.9H707V683.1H706.5V683.1H706V683.6H705.5V683.6H705V683.2H704.5V683.2H704V683.2H703.5V683.3H703V683.4H702.5V683.5H702V683.8H701.5V683.9H701V683.8H700.5V683.9H700V684.6H699.5V684.8H699V684.8H698.5V685.1H698V685.5H697.5V685.8H697V685.8H696.5V685.7H696V686.2H695.5V686.6H695V687.3H694.5V687.9H694V688.1H693.5V688.7H693V690.1H692.5V690.8H692V692.1H691.5V692.8H691V693.1H690.5V694.1H690V694.8H689.5V695.6H689V696.7H688.5V697.6H688V697.5H687.5V697.3H687V694.1H686.5V690.2H686V685.4H685.5V682.4H685V681.9H684.5V681.9H684V682.4H683.5V682.0H683V682.5H682.5V682.6H682V683.2H681.5V683.2H681V682.1H680.5V682.2H680V682.9H679.5V683.0H679V683.8H678.5V683.9H678V683.3H677.5V683.4H677V683.0H676.5V683.7H676V683.5H675.5V683.2H675V682.9H674.5V683.5H674V682.5H673.5V682.5H673V682.5H672.5V682.6H672V684.0H671.5V684.4H671V684.1H670.5V684.7H670V685.6H669.5V683.8H669V685.4H668.5V685.6H668V685.2H667.5V685.4H667V685.4H666.5V685.6H666V684.7H665.5V684.8H665V685.1H664.5V684.1H664V684.4H663.5V687.4H663V689.0H662.5V689.2H662V687.8H661.5V688.3H661V685.0H660.5V685.0H660V690.0H659.5V687.9H659V686.0H658.5V689.5H658V687.6H657.5V687.8H657V691.1H656.5V686.8H656V686.9H655.5V687.0H655V691.7H654.5V692.4H654V688.1H653.5V692.6H653V693.9H652.5V695.4H652V695.7H651.5V696.0H651V694.5H650.5V694.3H650V695.2H649.5V694.9H649V694.2H648.5V693.5H648V692.0H647.5V690.4H647V689.7H646.5V685.5H646V680.6H645.5V680.4H645V680.5H644.5V680.5H644V680.5H643.5V680.5H643V680.4H642.5V680.4H642V680.7H641.5V680.7H641V680.7H640.5V680.7H640V680.4H639.5V680.5H639V680.9H638.5V680.9H638V680.4H637.5V680.4H637V680.5H636.5V680.5H636V680.5H635.5V680.5H635V681.0H634.5V681.0H634V680.6H633.5V680.6H633V681.0H632.5V681.1H632V680.8H631.5V681.0H631V681.5H630.5V682.1H630V681.9H629.5V683.0H629V683.6H628.5V683.6H628V682.9H627.5V683.2H627V682.6H626.5V682.6H626V682.9H625.5V682.9H625V683.1H624.5V683.1H624V682.6H623.5V682.7H623V683.1H622.5V683.1H622V683.7H621.5V683.3H621V683.0H620.5V683.0H620V683.2H619.5V683.0H619V682.9H618.5V682.9H618V683.7H617.5V683.7H617V683.7H616.5V683.9H616V682.7H615.5V683.3H615V684.3H614.5V684.0H614V685.1H613.5V685.6H613V685.7H612.5V686.1H612V686.9H611.5V687.5H611V688.5H610.5V689.2H610V689.7H609.5V690.5H609V691.2H608.5V689.1H608V687.4H607.5V686.0H607V683.0H606.5V680.4H606V680.6H605.5V680.5H605V680.6H604.5V680.6H604V680.6H603.5V680.6H603V680.5H602.5V680.5H602V680.6H601.5V680.6H601V680.6H600.5V680.6H600V680.6H599.5V680.7H599V680.6H598.5V680.6H598V680.6H597.5V680.6H597V680.7H596.5V680.8H596V680.7H595.5V680.9H595V680.7H594.5V680.7H594V680.8H593.5V680.9H593V680.7H592.5V681.0H592V680.9H591.5V680.9H591V681.1H590.5V681.1H590V680.9H589.5V681.0H589V680.9H588.5V681.0H588V680.8H587.5V680.8H587V680.8H586.5V681.0H586V681.3H585.5V681.4H585V681.3H584.5V681.7H584V681.6H583.5V681.6H583V681.4H582.5V682.0H582V681.9H581.5V681.9H581V681.7H580.5V681.7H580V681.6H579.5V681.6H579V681.5H578.5V681.6H578V681.7H577.5V681.8H577V681.7H576.5V681.7H576V681.9H575.5V682.0H575V682.6H574.5V682.9H574V683.0H573.5V683.1H573V683.1H572.5V683.2H572V683.7H571.5V684.1H571V684.4H570.5V685.2H570V686.4H569.5V687.3H569V687.9H568.5V688.0H568V686.4H567.5V683.0H567V680.6H566.5V680.6H566V680.8H565.5V680.8H565V680.8H564.5V680.8H564V680.9H563.5V680.8H563V680.9H562.5V680.8H562V680.8H561.5V680.8H561V680.9H560.5V680.9H560V681.1H559.5V681.2H559V681.1H558.5V681.3H558V681.5H557.5V681.6H557V681.6H556.5V682.0H556V682.1H555.5V682.3H555V682.3H554.5V682.5H554V682.4H553.5V682.5H553V682.5H552.5V682.5H552V683.0H551.5V683.0H551V682.9H550.5V683.0H550V683.1H549.5V682.9H549V683.1H548.5V683.2H548V683.0H547.5V683.1H547V683.2H546.5V683.2H546V683.7H545.5V683.8H545V683.7H544.5V683.6H544V683.8H543.5V683.9H543V684.3H542.5V684.4H542V684.0H541.5V684.1H541V684.3H540.5V684.5H540V684.9H539.5V685.1H539V686.3H538.5V686.7H538V686.3H537.5V686.6H537V687.3H536.5V687.7H536V687.7H535.5V688.1H535V689.2H534.5V690.9H534V691.5H533.5V692.2H533V693.0H532.5V693.8H532V694.6H531.5V695.3H531V696.3H530.5V697.0H530V697.1H529.5V697.5H529V694.7H528.5V690.8H528V686.5H527.5V680.4H527V680.5H526.5V680.5H526V680.5H525.5V680.5H525V680.4H524.5V680.5H524V680.6H523.5V680.6H523V680.5H522.5V680.5H522V680.5H521.5V680.4H521V680.6H520.5V680.6H520V680.5H519.5V680.5H519V680.5H518.5V680.5H518V680.6H517.5V680.6H517V680.7H516.5V680.7H516V680.6H515.5V680.6H515V680.6H514.5V680.6H514V680.8H513.5V680.8H513V680.9H512.5V680.9H512V680.8H511.5V680.8H511V680.8H510.5V680.8H510V680.8H509.5V680.8H509V680.7H508.5V680.7H508V680.9H507.5V681.0H507V681.0H506.5V681.0H506V681.2H505.5V681.3H505V681.3H504.5V681.4H504V681.6H503.5V681.6H503V681.4H502.5V681.4H502V681.5H501.5V681.6H501V681.4H500.5V681.5H500V681.4H499.5V681.4H499V681.5H498.5V681.6H498V681.7H497.5V681.8H497V681.8H496.5V681.6H496V681.8H495.5V681.8H495V682.5H494.5V682.7H494V682.9H493.5V683.0H493V683.2H492.5V683.5H492V684.2H491.5V685.0H491V685.5H490.5V686.3H490V686.8H489.5V687.3H489V685.7H488.5V682.7H488V682.3H487.5V682.4H487V682.4H486.5V682.0H486V682.7H485.5V682.7H485V681.9H484.5V681.9H484V681.8H483.5V681.8H483V681.8H482.5V683.0H482V682.6H481.5V682.7H481V682.8H480.5V683.8H480V683.1H479.5V683.1H479V684.0H478.5V684.1H478V682.9H477.5V683.0H477V682.4H476.5V682.5H476V683.0H475.5V683.1H475V683.1H474.5V684.2H474V682.7H473.5V682.7H473V685.8H472.5V683.7H472V683.3H471.5V684.9H471V684.8H470.5V683.5H470V683.9H469.5V684.4H469V686.2H468.5V686.4H468V687.4H467.5V687.6H467V684.6H466.5V685.2H466V685.1H465.5V685.1H465V687.4H464.5V687.6H464V689.5H463.5V689.7H463V686.1H462.5V689.8H462V685.8H461.5V685.9H461V685.6H460.5V690.3H460V688.4H459.5V688.6H459V686.9H458.5V691.1H458V689.8H457.5V688.5H457V686.7H456.5V687.1H456V690.9H455.5V694.3H455V694.4H454.5V695.8H454V694.5H453.5V695.5H453V695.9H452.5V695.7H452V696.1H451.5V696.3H451V693.1H450.5V692.2H450V691.8H449.5V690.1H449V687.0H448.5V680.4H448V680.4H447.5V680.5H447Z" fill="#85836f"/></g>
<g transform="translate(0,60.1)"><path d="M447 679.6V678.7H447.5V678.8H448V678.8H448.5V670.9H449V666.0H449.5V663.7H450V661.2H450.5V659.9H451V659.5H451.5V658.8H452V659.5H452.5V659.3H453V659.3H453.5V661.0H454V660.6H454.5V658.8H455V662.4H455.5V669.2H456V664.8H456.5V665.6H457V665.0H457.5V666.0H458V671.0H458.5V666.2H459V670.1H459.5V670.3H460V671.0H460.5V668.8H461V669.2H461.5V669.3H462V671.5H462.5V669.4H463V669.8H463.5V669.9H464V671.8H464.5V672.0H465V672.0H465.5V673.7H466V670.5H466.5V674.2H467V672.2H467.5V672.4H468V673.8H468.5V674.0H469V671.9H469.5V673.7H470V672.8H470.5V672.9H471V672.7H471.5V673.7H472V674.9H472.5V672.7H473V675.3H473.5V675.4H474V675.6H474.5V675.1H475V675.8H475.5V675.8H476V675.8H476.5V675.9H477V676.4H477.5V676.5H478V676.0H478.5V676.0H479V676.4H479.5V676.4H480V676.7H480.5V676.3H481V676.5H481.5V676.6H482V674.9H482.5V675.5H483V676.2H483.5V676.3H484V676.3H484.5V676.3H485V676.6H485.5V676.7H486V677.2H486.5V675.8H487V676.0H487.5V676.1H488V676.2H488.5V672.4H489V671.4H489.5V671.9H490V672.0H490.5V672.9H491V673.8H491.5V674.7H492V675.3H492.5V675.7H493V676.0H493.5V676.1H494V676.2H494.5V676.4H495V677.0H495.5V677.1H496V676.7H496.5V677.1H497V677.1H497.5V677.2H498V677.3H498.5V677.4H499V677.6H499.5V677.7H500V677.9H500.5V677.9H501V677.8H501.5V677.8H502V677.8H502.5V677.8H503V677.8H503.5V677.9H504V677.4H504.5V677.5H505V678.0H505.5V677.7H506V678.1H506.5V678.2H507V678.1H507.5V678.2H508V678.4H508.5V678.4H509V678.3H509.5V678.5H510V678.4H510.5V678.4H511V678.4H511.5V678.4H512V678.4H512.5V678.4H513V678.4H513.5V678.4H514V678.3H514.5V678.3H515V678.4H515.5V678.4H516V678.5H516.5V678.5H517V678.5H517.5V678.4H518V678.5H518.5V678.6H519V678.6H519.5V678.7H520V678.7H520.5V678.7H521V678.5H521.5V678.7H522V678.5H522.5V678.6H523V678.8H523.5V678.8H524V678.8H524.5V678.6H525V678.8H525.5V678.7H526V678.6H526.5V678.7H527V678.8H527.5V672.3H528V667.4H528.5V663.5H529V660.8H529.5V661.2H530V661.4H530.5V662.2H531V663.1H531.5V664.0H532V664.7H532.5V665.5H533V666.3H533.5V667.1H534V667.5H534.5V669.1H535V669.6H535.5V670.0H536V671.0H536.5V671.4H537V672.0H537.5V672.3H538V672.5H538.5V672.8H539V673.0H539.5V673.3H540V673.9H540.5V674.3H541V674.6H541.5V674.7H542V674.7H542.5V674.9H543V675.3H543.5V675.4H544V675.1H544.5V675.5H545V675.3H545.5V675.3H546V675.8H546.5V675.8H547V675.3H547.5V675.4H548V675.6H548.5V675.6H549V676.1H549.5V676.0H550V675.6H550.5V675.7H551V676.0H551.5V676.1H552V676.2H552.5V676.3H553V676.1H553.5V676.2H554V676.3H554.5V676.5H555V676.9H555.5V677.1H556V677.3H556.5V677.4H557V677.6H557.5V677.7H558V677.8H558.5V677.8H559V677.9H559.5V678.0H560V678.1H560.5V678.1H561V678.3H561.5V678.3H562V678.4H562.5V678.4H563V678.3H563.5V678.4H564V678.4H564.5V678.4H565V678.4H565.5V678.4H566V678.4H566.5V678.4H567V676.1H567.5V672.5H568V670.0H568.5V670.6H569V671.3H569.5V672.2H570V673.3H570.5V674.4H571V674.4H571.5V674.8H572V675.6H572.5V675.8H573V675.7H573.5V675.9H574V676.2H574.5V676.8H575V676.5H575.5V676.6H576V676.8H576.5V676.9H577V677.3H577.5V677.3H578V677.4H578.5V677.4H579V677.6H579.5V677.7H580V677.3H580.5V677.3H581V677.3H581.5V677.3H582V677.7H582.5V677.6H583V677.1H583.5V677.1H584V677.3H584.5V677.8H585V677.6H585.5V677.7H586V678.0H586.5V678.3H587V678.1H587.5V677.8H588V678.1H588.5V678.4H589V677.9H589.5V677.9H590V678.2H590.5V678.3H591V678.4H591.5V678.4H592V678.3H592.5V678.4H593V678.1H593.5V678.3H594V678.3H594.5V678.4H595V678.5H595.5V678.4H596V678.5H596.5V678.3H597V678.4H597.5V678.4H598V678.6H598.5V678.4H599V678.5H599.5V678.5H600V678.4H600.5V678.4H601V678.5H601.5V678.5H602V678.5H602.5V678.5H603V678.7H603.5V678.5H604V678.7H604.5V678.7H605V678.5H605.5V678.7H606V678.7H606.5V675.7H607V672.4H607.5V670.4H608V669.0H608.5V666.5H609V666.8H609.5V667.7H610V669.3H610.5V670.0H611V670.4H611.5V671.2H612V672.0H612.5V672.9H613V672.6H613.5V673.1H614V675.7H614.5V676.0H615V675.4H615.5V676.2H616V675.9H616.5V676.3H617V676.3H617.5V674.8H618V676.4H618.5V676.5H619V675.6H619.5V675.3H620V675.6H620.5V675.7H621V676.0H621.5V676.1H622V676.1H622.5V676.1H623V676.3H623.5V676.3H624V676.5H624.5V676.5H625V676.0H625.5V676.1H626V675.2H626.5V675.2H627V676.4H627.5V675.4H628V675.9H628.5V676.0H629V675.8H629.5V677.1H630V677.4H630.5V677.7H631V677.6H631.5V677.8H632V677.8H632.5V677.9H633V678.6H633.5V678.6H634V678.1H634.5V678.2H635V678.6H635.5V678.3H636V678.3H636.5V678.3H637V678.7H637.5V678.7H638V678.7H638.5V678.7H639V678.7H639.5V678.6H640V678.3H640.5V678.3H641V678.4H641.5V678.4H642V678.7H642.5V678.5H643V678.5H643.5V678.5H644V678.6H644.5V678.6H645V678.5H645.5V678.8H646V672.6H646.5V667.7H647V665.5H647.5V663.4H648V661.1H648.5V660.2H649V661.2H649.5V660.9H650V660.0H650.5V659.8H651V660.3H651.5V660.6H652V661.5H652.5V661.9H653V663.1H653.5V668.2H654V665.2H654.5V666.0H655V667.7H655.5V667.9H656V670.0H656.5V668.7H657V670.8H657.5V671.0H658V672.2H658.5V671.6H659V667.7H659.5V673.2H660V672.3H660.5V672.5H661V668.3H661.5V670.8H662V669.0H662.5V669.3H663V670.6H663.5V672.1H664V671.7H664.5V672.2H665V672.2H665.5V672.4H666V673.1H666.5V673.3H667V672.4H667.5V672.6H668V672.8H668.5V673.0H669V675.8H669.5V674.1H670V674.2H670.5V674.0H671V675.5H671.5V676.2H672V675.7H672.5V675.8H673V674.0H673.5V674.1H674V674.1H674.5V674.6H675V675.2H675.5V676.3H676V676.2H676.5V676.4H677V676.8H677.5V676.8H678V674.8H678.5V674.9H679V677.1H679.5V677.2H680V676.7H680.5V676.8H681V676.7H681.5V676.8H682V676.3H682.5V675.8H683V675.9H683.5V676.3H684V676.8H684.5V676.8H685V676.5H685.5V673.5H686V668.4H686.5V664.2H687V660.6H687.5V660.4H688V661.1H688.5V662.0H689V662.6H689.5V663.4H690V664.4H690.5V665.4H691V666.2H691.5V667.0H692V667.5H692.5V668.3H693V668.9H693.5V670.4H694V671.0H694.5V671.4H695V671.5H695.5V671.9H696V672.7H696.5V673.0H697V673.1H697.5V673.4H698V673.6H698.5V673.9H699V674.0H699.5V674.2H700V674.7H700.5V675.1H701V674.8H701.5V674.9H702V675.0H702.5V675.2H703V675.7H703.5V675.7H704V675.6H704.5V675.5H705V675.4H705.5V675.5H706V675.5H706.5V675.5H707V676.1H707.5V676.1H708V675.6H708.5V675.7H709V676.0H709.5V676.0H710V676.1H710.5V676.2H711V676.5H711.5V676.6H712V676.2H712.5V676.4H713V676.8H713.5V677.0H714V677.1H714.5V677.3H715V677.4H715.5V677.5H716V677.7H716.5V678.0H717V678.1H717.5V678.1H718V678.2H718.5V678.2H719V678.2H719.5V678.1H720V678.2H720.5V678.2H721V678.2H721.5V678.4H722V678.4H722.5V678.4H723V678.5H723.5V678.5H724V678.4H724.5V678.4H725V676.2H725.5V672.1H726V669.3H726.5V669.9H727V670.0H727.5V671.6H728V672.3H728.5V673.4H729V673.8H729.5V674.3H730V675.2H730.5V675.5H731V675.3H731.5V675.6H732V675.8H732.5V676.6H733V676.1H733.5V676.7H734V676.4H734.5V676.5H735V676.8H735.5V676.9H736V677.0H736.5V677.0H737V677.2H737.5V677.2H738V677.2H738.5V677.2H739V677.4H739.5V677.4H740V677.5H740.5V677.5H741V677.5H741.5V677.5H742V677.4H742.5V677.5H743V677.4H743.5V677.5H744V677.6H744.5V677.9H745V677.8H745.5V677.8H746V678.2H746.5V678.2H747V677.7H747.5V677.7H748V677.9H748.5V677.9H749V677.8H749.5V677.9H750V678.2H750.5V678.2H751V678.1H751.5V678.2H752V678.0H752.5V678.0H753V678.2H753.5V678.2H754V678.2H754.5V678.3H755V678.3H755.5V678.3H756V678.4H756.5V678.5H757V678.4H757.5V678.5H758V678.4H758.5V678.5H759V678.4H759.5V678.4H760V678.4H760.5V678.4H761V678.5H761.5V678.5H762V678.6H762.5V678.5H763V678.6H763.5V678.7H764V678.7H764.5V673.5H765V667.9H765.5V665.9H766V663.1H766.5V661.5H767V659.4H767.5V658.4H768V661.1H768.5V659.1H769V658.1H769.5V658.3H770V660.8H770.5V660.1H771V662.3H771.5V663.4H772V667.3H772.5V668.0H773V665.3H773.5V669.1H774V667.5H774.5V669.2H775V671.7H775.5V672.5H776V670.7H776.5V670.9H777V668.1H777.5V668.2H778V670.8H778.5V670.9H779V671.7H779.5V671.8H780V669.8H780.5V670.0H781V672.4H781.5V672.6H782V673.8H782.5V674.0H783V671.9H783.5V672.1H784V672.7H784.5V673.2H785V672.1H785.5V672.3H786V672.5H786.5V673.4H787V674.3H787.5V674.5H788V673.6H788.5V673.8H789V674.7H789.5V674.0H790V674.7H790.5V675.5H791V676.0H791.5V676.1H792V675.7H792.5V675.7H793V675.8H793.5V675.9H794V674.1H794.5V674.2H795V676.7H795.5V676.8H796V675.7H796.5V675.6H797V675.1H797.5V675.2H798V675.2H798.5V675.3H799V675.6H799.5V675.7H800V677.1H800.5V677.1H801V676.8H801.5V676.8H802V677.0H802.5V676.7H803V675.8H803.5V675.9H804V677.2H804.5V673.8H805V671.4H805.5V671.4H806V671.9H806.5V672.7H807V673.7H807.5V674.6H808V675.1H808.5V675.5H809V675.8H809.5V676.0H810V676.3H810.5V676.5H811V676.6H811.5V676.7H812V676.7H812.5V676.8H813V677.3H813.5V677.4H814V677.6H814.5V677.0H815V677.3H815.5V677.4H816V677.4H816.5V677.4H817V677.8H817.5V677.8H818V677.7H818.5V677.7H819V677.3H819.5V677.3H820V677.7H820.5V677.7H821V677.8H821.5V677.9H822V678.2H822.5V678.2H823V678.2H823.5V678.2H824V678.0H824.5V678.3H825V678.4H825.5V678.3H826V678.2H826.5V678.3H827V678.3H827.5V678.3H828V678.4H828.5V678.4H829V678.6H829.5V678.6H830V678.6H830.5V678.6H831V678.5H831.5V678.5H832V678.3H832.5V678.3H833V678.5H833.5V678.5H834V678.4H834.5V678.4H835V678.5H835.5V678.5H836V678.6H836.5V678.6H837V678.5H837.5V678.6H838V678.6H838.5V678.7H839V678.6H839.5V678.6H840V678.8H840.5V678.8H841V678.7H841.5V678.7H842V678.9H842.5V678.7H843V678.8H843.5V674.7H844V669.2H844.5V665.1H845V661.5H845.5V661.3H846V661.2H846.5V661.9H847V662.2H847.5V663.1H848V664.2H848.5V665.3H849V665.8H849.5V666.4H850V667.5H850.5V668.3H851V669.3H851.5V669.9H852V670.8H852.5V671.2H853V672.0H853.5V672.4H854V672.4H854.5V672.8H855V673.4H855.5V673.1H856V673.2H856.5V673.6H857V674.4H857.5V674.6H858V674.5H858.5V674.6H859V674.8H859.5V674.9H860V675.2H860.5V675.3H861V675.7H861.5V675.5H862V675.3H862.5V675.4H863V675.9H863.5V675.9H864V675.8H864.5V675.8H865V675.4H865.5V675.5H866V675.9H866.5V676.0H867V676.3H867.5V676.3H868V676.3H868.5V676.4H869V676.3H869.5V676.4H870V676.6H870.5V676.4H871V677.0H871.5V677.1H872V677.3H872.5V677.4H873V677.4H873.5V677.6H874V677.8H874.5V677.9H875V677.8H875.5V677.9H876V678.1H876.5V678.2H877V678.3H877.5V678.3H878V678.3H878.5V678.4H879V678.3H879.5V678.4H880V678.4H880.5V678.4H881V678.3H881.5V678.4H882V678.5H882.5V678.5H883V677.2H883.5V673.4H884V670.3H884.5V670.8H885V670.9H885.5V671.8H886V672.6H886.5V673.7H887V674.5H887.5V674.9H888V675.2H888.5V675.5H889V675.9H889.5V676.1H890V676.1H890.5V676.7H891V677.0H891.5V677.0H892V676.9H892.5V676.9H893V677.4H893.5V677.3H894V677.2H894.5V677.2H895V677.5H895.5V677.5H896V677.0H896.5V677.3H897V677.7H897.5V677.7H898V677.7H898.5V677.7H899V677.4H899.5V677.4H900V677.5H900.5V677.6H901V677.8H901.5V677.9H902V677.9H902.5V678.0H903V678.3H903.5V678.3H904V678.0H904.5V678.0H905V678.1H905.5V678.1H906V678.4H906.5V678.2H907V678.3H907.5V678.3H908V678.4H908.5V678.4H909V678.2H909.5V678.2H910V678.3H910.5V678.4H911V678.5H911.5V678.5H912V678.5H912.5V678.6H913V678.3H913.5V678.3H914V678.5H914.5V678.6H915V678.5H915.5V678.5H916V678.6H916.5V678.6H917V678.6H917.5V678.7H918V678.4H918.5V678.5H919V678.5H919.5V678.7H920V678.6H920.5V678.6H921V678.6H921.5V678.6H922V678.6H922.5V677.0H923V673.1H923.5V670.9H924V669.7H924.5V667.9H925V667.7H925.5V668.5H926V668.5H926.5V669.5H927V669.8H927.5V670.5H928V671.9H928.5V672.4H929V672.9H929.5V672.9H930V674.3H930.5V674.6H931V674.8H931.5V675.0H932V675.2H932.5V675.3H933V675.3H933.5V675.3H934V675.4H934.5V675.4H935V676.1H935.5V676.1H936V675.8H936.5V675.8H937V675.4H937.5V676.3H938V675.3H938.5V675.4H939V676.3H939.5V676.3H940V676.7H940.5V675.5H941V676.0H941.5V676.0H942V675.2H942.5V675.9H943V676.2H943.5V676.2H944V676.2H944.5V676.2H945V675.7H945.5V676.0H946V677.0H946.5V677.5H947V677.4H947.5V677.7H948V677.9H948.5V678.0H949V678.5H949.5V678.5H950V678.3H950.5V678.3H951V678.3H951.5V678.5H952V678.2H952.5V678.2H953V678.6H953.5V678.6H954V678.4H954.5V678.3H955V678.7H955.5V678.7H956V678.5H956.5V678.5H957V678.3H957.5V678.3H958V678.4H958.5V678.6H959V678.6H959.5V678.6H960V678.8H960.5V678.7H961V678.7H961.5V678.7H962V675.3H962.5V667.2H963V665.2H963.5V663.0H964V660.8H964.5V660.2H965V659.5H965.5V659.0H966V660.2H966.5V660.0H967V660.2H967.5V661.3H968V660.7H968.5V661.5H969V662.1H969.5V665.4H970V669.9H970.5V667.7H971V666.2H971.5V666.6H972V670.3H972.5V670.5H973V672.8H973.5V672.9H974V669.8H974.5V670.0H975V671.4H975.5V671.5H976V670.7H976.5V670.3H977V672.9H977.5V673.1H978V668.1H978.5V674.0H979V673.0H979.5V673.1H980V674.2H980.5V674.4H981V673.8H981.5V674.1H982V673.7H982.5V673.8H983V674.4H983.5V674.5H984V672.2H984.5V672.4H985V674.4H985.5V674.8H986V672.7H986.5V672.9H987V675.2H987.5V675.5H988V675.2H988.5V675.3H989V674.6H989.5V674.8H990V675.4H990.5V675.5H991V674.3H991.5V674.5H992V676.5H992.5V676.5H993V675.7H993.5V675.8H994V675.7H994.5V675.8H995V676.6H995.5V676.6H996V676.8H996.5V676.9H997V675.8H997.5V675.9H998V675.7H998.5V676.9H999V676.8H999.5V676.8H1000V677.1H1000.5V677.1H1001V677.4H1001.5V675.8H1002V669.9H1002.5V665.8H1003V661.2H1003.5V660.8H1004V660.8H1004.5V661.6H1005V662.2H1005.5V663.4H1006V664.0H1006.5V664.9H1007V665.5H1007.5V666.3H1008V667.3H1008.5V668.1H1009V669.0H1009.5V669.6H1010V670.8H1010.5V671.3H1011V671.4H1011.5V671.8H1012V672.2H1012.5V672.6H1013V673.0H1013.5V673.3H1014V674.0H1014.5V674.3H1015V674.0H1015.5V674.4H1016V675.0H1016.5V674.6H1017V675.1H1017.5V675.2H1018V674.9H1018.5V675.1H1019V675.0H1019.5V675.1H1020V675.5H1020.5V675.5H1021V675.8H1021.5V675.9H1022V675.8H1022.5V675.8H1023V676.1H1023.5V676.1H1024V676.0H1024.5V676.1H1025V676.1H1025.5V676.1H1026V676.2H1026.5V676.0H1027V676.5H1027.5V676.6H1028V676.3H1028.5V676.4H1029V676.4H1029.5V676.6H1030V677.0H1030.5V677.2H1031V677.5H1031.5V677.7H1032V677.6H1032.5V678.0H1033V677.8H1033.5V678.1H1034V678.1H1034.5V678.3H1035V678.1H1035.5V678.2H1036V678.3H1036.5V678.3H1037V678.3H1037.5V678.3H1038V678.3H1038.5V678.3H1039V678.3H1039.5V678.3H1040V678.4H1040.5V678.5H1041V677.5H1041.5V673.3H1042V669.6H1042.5V669.4H1043V670.0H1043.5V670.9H1044V672.0H1044.5V673.1H1045V674.2H1045.5V674.6H1046V674.9H1046.5V675.4H1047V675.2H1047.5V675.5H1048V675.9H1048.5V676.6H1049V675.9H1049.5V676.0H1050V676.7H1050.5V676.8H1051V676.8H1051.5V676.7H1052V676.5H1052.5V676.6H1053V677.1H1053.5V677.3H1054V677.0H1054.5V677.0H1055V677.5H1055.5V677.5H1056V677.3H1056.5V677.3H1057V677.4H1057.5V677.5H1058V677.3H1058.5V677.5H1059V677.5H1059.5V677.7H1060V677.6H1060.5V677.7H1061V677.7H1061.5V678.2H1062V678.0H1062.5V678.0H1063V677.8H1063.5V677.8H1064V678.0H1064.5V678.0H1065V678.3H1065.5V678.3H1066V678.0H1066.5V678.0H1067V678.4H1067.5V678.0H1068V677.9H1068.5V677.9H1069V678.1H1069.5V678.1H1070V678.2H1070.5V678.3H1071V678.3H1071.5V678.3H1072V678.5H1072.5V678.5H1073V678.5H1073.5V678.5H1074V678.2H1074.5V678.2H1075V678.2H1075.5V678.3H1076V679.6V680.7H1075.5V680.7H1075V680.7H1074.5V680.7H1074V680.7H1073.5V680.7H1073V681.0H1072.5V681.0H1072V680.8H1071.5V680.8H1071V680.8H1070.5V680.8H1070V681.2H1069.5V681.2H1069V681.1H1068.5V681.2H1068V680.9H1067.5V681.1H1067V681.1H1066.5V681.1H1066V680.9H1065.5V680.9H1065V681.2H1064.5V681.2H1064V681.2H1063.5V681.2H1063V681.3H1062.5V681.3H1062V681.2H1061.5V681.2H1061V681.2H1060.5V681.3H1060V681.4H1059.5V681.5H1059V682.0H1058.5V682.0H1058V681.8H1057.5V681.9H1057V681.9H1056.5V682.0H1056V681.8H1055.5V681.9H1055V681.9H1054.5V681.9H1054V682.0H1053.5V682.1H1053V682.2H1052.5V682.2H1052V682.5H1051.5V682.5H1051V682.7H1050.5V682.8H1050V683.2H1049.5V683.3H1049V683.0H1048.5V683.3H1048V683.6H1047.5V683.8H1047V683.8H1046.5V684.2H1046V685.0H1045.5V685.4H1045V685.8H1044.5V686.8H1044V688.1H1043.5V689.0H1043V689.4H1042.5V689.6H1042V686.0H1041.5V681.7H1041V680.7H1040.5V680.8H1040V680.8H1039.5V680.8H1039V680.9H1038.5V680.9H1038V680.8H1037.5V680.8H1037V680.9H1036.5V680.9H1036V681.0H1035.5V681.0H1035V680.9H1034.5V681.2H1034V681.1H1033.5V681.2H1033V681.3H1032.5V681.5H1032V681.7H1031.5V681.8H1031V681.8H1030.5V682.0H1030V682.3H1029.5V682.4H1029V682.5H1028.5V682.7H1028V683.0H1027.5V683.0H1027V683.3H1026.5V682.9H1026V683.1H1025.5V683.2H1025V683.2H1024.5V683.3H1024V683.3H1023.5V683.3H1023V683.7H1022.5V683.8H1022V683.5H1021.5V683.5H1021V683.7H1020.5V683.8H1020V683.7H1019.5V683.8H1019V684.2H1018.5V684.3H1018V684.6H1017.5V684.7H1017V684.4H1016.5V684.6H1016V684.4H1015.5V684.7H1015V684.8H1014.5V685.1H1014V685.6H1013.5V685.9H1013V686.1H1012.5V686.4H1012V687.3H1011.5V687.8H1011V687.6H1010.5V688.0H1010V688.7H1009.5V689.2H1009V691.1H1008.5V691.9H1008V692.9H1007.5V693.7H1007V694.1H1006.5V695.0H1006V695.8H1005.5V696.8H1005V698.0H1004.5V698.8H1004V698.0H1003.5V697.6H1003V693.4H1002.5V689.6H1002V683.4H1001.5V682.0H1001V683.4H1000.5V683.4H1000V683.7H999.5V683.7H999V683.3H998.5V682.0H998V684.0H997.5V684.0H997V682.9H996.5V683.0H996V683.8H995.5V683.9H995V682.1H994.5V682.1H994V682.3H993.5V682.3H993V683.8H992.5V683.9H992V684.5H991.5V684.6H991V684.3H990.5V684.4H990V683.1H989.5V683.2H989V683.8H988.5V683.9H988V683.6H987.5V683.4H987V685.6H986.5V685.9H986V686.8H985.5V683.8H985V687.2H984.5V687.4H984V685.2H983.5V685.4H983V687.3H982.5V687.5H982V684.4H981.5V686.6H981V687.0H980.5V687.2H980V688.4H979.5V688.7H979V686.8H978.5V691.0H978V689.6H977.5V689.8H977V687.1H976.5V686.4H976V689.7H975.5V689.9H975V688.3H974.5V688.4H974V687.1H973.5V687.2H973V686.7H972.5V686.9H972V686.9H971.5V687.2H971V688.4H970.5V689.9H970V693.8H969.5V696.2H969V696.7H968.5V697.4H968V698.7H967.5V700.4H967V699.4H966.5V699.2H966V700.2H965.5V699.7H965V698.7H964.5V698.1H964V696.4H963.5V694.1H963V690.3H962.5V684.4H962V680.5H961.5V680.5H961V680.8H960.5V680.8H960V680.7H959.5V680.7H959V680.6H958.5V680.6H958V680.9H957.5V680.9H957V680.7H956.5V680.6H956V680.6H955.5V680.6H955V680.8H954.5V680.5H954V680.9H953.5V680.9H953V680.7H952.5V680.7H952V680.7H951.5V680.9H951V681.1H950.5V681.1H950V681.1H949.5V681.1H949V680.9H948.5V681.0H948V681.0H947.5V681.2H947V682.5H946.5V683.1H946V682.9H945.5V683.2H945V683.6H944.5V683.7H944V682.5H943.5V682.5H943V682.9H942.5V682.5H942V683.5H941.5V683.5H941V682.5H940.5V682.6H940V683.3H939.5V683.3H939V682.7H938.5V682.8H938V683.1H937.5V684.3H937V683.3H936.5V683.3H936V683.4H935.5V683.4H935V682.8H934.5V682.8H934V684.2H933.5V684.2H933V683.9H932.5V684.0H932V683.7H931.5V683.8H931V683.8H930.5V684.1H930V685.7H929.5V686.1H929V687.2H928.5V687.8H928V687.9H927.5V688.6H927V689.9H926.5V689.9H926V691.0H925.5V691.8H925V692.1H924.5V690.2H924V687.9H923.5V686.1H923V682.1H922.5V680.5H922V680.5H921.5V680.5H921V680.5H920.5V680.5H920V680.5H919.5V680.7H919V680.5H918.5V680.7H918V680.7H917.5V680.7H917V680.9H916.5V680.9H916V680.6H915.5V680.6H915V680.8H914.5V680.8H914V680.7H913.5V680.7H913V680.9H912.5V680.9H912V681.0H911.5V681.0H911V681.0H910.5V681.0H910V680.9H909.5V680.9H909V681.2H908.5V681.2H908V681.1H907.5V681.1H907V680.9H906.5V681.1H906V681.0H905.5V681.0H905V681.0H904.5V681.0H904V681.0H903.5V681.0H903V681.0H902.5V681.1H902V681.4H901.5V681.5H901V681.6H900.5V681.7H900V681.5H899.5V681.5H899V681.7H898.5V682.1H898V681.6H897.5V681.6H897V681.8H896.5V681.9H896V681.8H895.5V681.8H895V681.9H894.5V681.9H894V682.1H893.5V682.6H893V682.3H892.5V682.4H892V682.5H891.5V682.6H891V682.8H890.5V682.9H890V683.0H889.5V683.2H889V683.6H888.5V683.8H888V684.3H887.5V684.7H887V685.3H886.5V686.3H886V687.1H885.5V688.0H885V688.6H884.5V689.2H884V685.8H883.5V682.0H883V680.7H882.5V680.7H882V680.7H881.5V680.8H881V680.8H880.5V680.8H880V680.9H879.5V680.9H879V680.9H878.5V680.9H878V680.9H877.5V681.1H877V681.1H876.5V681.1H876V681.1H875.5V681.2H875V681.3H874.5V681.4H874V681.4H873.5V681.5H873V681.8H872.5V681.9H872V682.1H871.5V682.3H871V682.5H870.5V682.8H870V682.6H869.5V682.7H869V683.1H868.5V683.2H868V683.2H867.5V683.3H867V683.5H866.5V683.5H866V683.3H865.5V683.4H865V683.4H864.5V683.5H864V683.7H863.5V683.7H863V683.5H862.5V683.5H862V683.4H861.5V683.5H861V683.9H860.5V684.0H860V684.2H859.5V684.4H859V684.3H858.5V684.4H858V684.9H857.5V685.1H857V685.4H856.5V685.7H856V685.5H855.5V686.1H855V686.7H854.5V687.1H854V686.7H853.5V687.1H853V688.5H852.5V689.0H852V689.6H851.5V690.2H851V690.8H850.5V691.6H850V692.5H849.5V693.7H849V694.5H848.5V695.1H848V695.7H847.5V696.5H847V697.2H846.5V698.5H846V698.6H845.5V698.4H845V694.7H844.5V690.5H844V684.5H843.5V680.4H843V680.5H842.5V680.5H842V680.5H841.5V680.4H841V680.6H840.5V680.4H840V680.6H839.5V680.6H839V680.6H838.5V680.6H838V680.6H837.5V680.5H837V680.6H836.5V680.6H836V680.7H835.5V680.7H835V680.6H834.5V680.6H834V680.7H833.5V680.7H833V680.6H832.5V680.6H832V680.6H831.5V680.7H831V681.0H830.5V681.0H830V680.6H829.5V680.6H829V681.0H828.5V681.0H828V681.1H827.5V681.1H827V680.9H826.5V680.9H826V681.1H825.5V680.8H825V680.7H824.5V680.9H824V681.2H823.5V681.3H823V681.1H822.5V681.2H822V681.4H821.5V681.5H821V681.6H820.5V681.6H820V681.3H819.5V681.3H819V681.5H818.5V681.5H818V681.4H817.5V681.4H817V681.8H816.5V681.8H816V681.8H815.5V681.9H815V681.8H814.5V681.7H814V682.0H813.5V682.1H813V681.9H812.5V681.9H812V682.2H811.5V682.8H811V682.8H810.5V683.0H810V683.0H809.5V683.2H809V683.7H808.5V684.1H808V684.5H807.5V685.4H807V686.6H806.5V687.5H806V687.5H805.5V688.3H805V685.2H804.5V682.0H804V682.9H803.5V682.9H803V683.3H802.5V683.6H802V681.9H801.5V681.9H801V682.8H800.5V682.8H800V683.0H799.5V683.1H799V683.4H798.5V683.4H798V682.4H797.5V682.4H797V682.7H796.5V683.4H796V684.5H795.5V684.6H795V682.9H794.5V682.9H794V685.1H793.5V685.3H793V683.7H792.5V685.4H792V684.5H791.5V684.6H791V685.6H790.5V683.3H790V685.2H789.5V683.8H789V684.4H788.5V684.5H788V683.6H787.5V683.7H787V683.8H786.5V684.7H786V687.6H785.5V687.8H785V685.9H784.5V688.6H784V686.8H783.5V687.0H783V687.4H782.5V687.7H782V685.6H781.5V685.8H781V690.2H780.5V690.4H780V686.4H779.5V686.5H779V691.7H778.5V691.9H778V687.0H777.5V687.1H777V687.0H776.5V687.1H776V689.2H775.5V692.4H775V689.3H774.5V690.5H774V691.6H773.5V690.3H773V694.8H772.5V695.7H772V695.9H771.5V697.0H771V700.9H770.5V698.7H770V699.2H769.5V699.5H769V699.0H768.5V700.5H768V699.3H767.5V698.4H767V696.6H766.5V695.0H766V693.5H765.5V691.4H765V685.9H764.5V680.6H764V680.7H763.5V680.7H763V680.7H762.5V680.8H762V680.7H761.5V680.8H761V680.7H760.5V680.8H760V680.6H759.5V680.6H759V680.8H758.5V680.8H758V680.8H757.5V680.9H757V680.9H756.5V681.0H756V680.9H755.5V680.9H755V681.0H754.5V681.0H754V681.1H753.5V681.1H753V680.8H752.5V680.9H752V680.9H751.5V681.1H751V681.2H750.5V681.2H750V680.9H749.5V680.9H749V681.2H748.5V681.2H748V681.3H747.5V681.3H747V681.1H746.5V681.1H746V681.1H745.5V681.1H745V681.1H744.5V681.5H744V681.3H743.5V681.4H743V681.4H742.5V681.5H742V681.8H741.5V681.8H741V682.3H740.5V682.3H740V682.2H739.5V682.2H739V681.7H738.5V681.7H738V682.1H737.5V682.0H737V682.0H736.5V682.1H736V682.2H735.5V682.3H735V682.4H734.5V682.4H734V682.7H733.5V682.9H733V682.4H732.5V683.3H732V683.3H731.5V683.5H731V684.0H730.5V684.3H730V684.6H729.5V685.1H729V685.9H728.5V687.0H728V687.7H727.5V688.9H727V689.6H726.5V690.2H726V687.1H725.5V683.0H725V680.7H724.5V680.7H724V680.9H723.5V680.9H723V680.8H722.5V680.9H722V680.8H721.5V680.9H721V680.9H720.5V681.0H720V681.0H719.5V680.9H719V681.0H718.5V681.1H718V681.1H717.5V681.3H717V681.3H716.5V681.4H716V681.7H715.5V681.8H715V681.9H714.5V682.1H714V682.4H713.5V682.6H713V682.8H712.5V682.9H712V682.9H711.5V683.0H711V682.9H710.5V682.9H710V683.4H709.5V683.5H709V683.3H708.5V683.4H708V683.1H707.5V683.1H707V683.3H706.5V683.4H706V683.9H705.5V683.9H705V683.5H704.5V683.4H704V683.5H703.5V683.5H703V683.7H702.5V683.8H702V684.1H701.5V684.2H701V684.1H700.5V684.3H700V685.0H699.5V685.2H699V685.2H698.5V685.5H698V685.9H697.5V686.2H697V686.3H696.5V686.2H696V686.7H695.5V687.1H695V687.9H694.5V688.3H694V688.6H693.5V689.2H693V690.7H692.5V691.3H692V692.7H691.5V693.5H691V693.8H690.5V694.9H690V695.6H689.5V696.5H689V697.6H688.5V698.5H688V698.4H687.5V698.2H687V694.9H686.5V690.8H686V685.7H685.5V682.8H685V682.2H684.5V682.2H684V682.8H683.5V682.3H683V682.8H682.5V683.0H682V683.6H681.5V683.7H681V682.5H680.5V682.5H680V683.4H679.5V683.4H679V684.4H678.5V684.4H678V683.8H677.5V683.9H677V683.5H676.5V684.3H676V684.0H675.5V683.7H675V683.4H674.5V684.0H674V682.9H673.5V682.9H673V683.0H672.5V683.0H672V684.6H671.5V685.0H671V684.7H670.5V685.3H670V686.4H669.5V684.3H669V686.2H668.5V686.4H668V686.0H667.5V686.2H667V686.2H666.5V686.4H666V685.3H665.5V685.5H665V685.9H664.5V684.8H664V685.1H663.5V688.5H663V690.2H662.5V690.5H662V688.9H661.5V689.4H661V685.7H660.5V685.8H660V691.5H659.5V689.0H659V686.8H658.5V690.9H658V688.7H657.5V688.9H657V692.7H656.5V687.7H656V687.9H655.5V688.0H655V694.7H654.5V695.6H654V690.2H653.5V695.8H653V697.5H652.5V699.4H652V699.8H651.5V700.1H651V698.2H650.5V698.0H650V699.0H649.5V698.8H649V697.8H648.5V697.0H648V695.1H647.5V693.1H647V692.2H646.5V687.0H646V680.7H645.5V680.4H645V680.6H644.5V680.6H644V680.5H643.5V680.5H643V680.5H642.5V680.5H642V680.8H641.5V680.8H641V680.8H640.5V680.8H640V680.5H639.5V680.5H639V680.9H638.5V681.0H638V680.5H637.5V680.5H637V680.6H636.5V680.6H636V680.5H635.5V680.5H635V681.1H634.5V681.1H634V680.6H633.5V680.6H633V681.1H632.5V681.2H632V680.9H631.5V681.1H631V681.7H630.5V682.3H630V682.1H629.5V683.2H629V683.9H628.5V683.9H628V683.2H627.5V683.5H627V682.8H626.5V682.8H626V683.1H625.5V683.2H625V683.4H624.5V683.4H624V682.9H623.5V682.9H623V683.3H622.5V683.4H622V684.0H621.5V683.6H621V683.2H620.5V683.3H620V683.4H619.5V683.3H619V683.2H618.5V683.2H618V684.1H617.5V684.1H617V684.0H616.5V684.3H616V682.9H615.5V683.8H615V684.9H614.5V684.6H614V685.9H613.5V686.4H613V686.6H612.5V687.0H612V687.9H611.5V688.6H611V689.8H610.5V690.5H610V691.1H609.5V692.0H609V692.7H608.5V690.4H608V688.5H607.5V686.9H607V683.4H606.5V680.5H606V680.7H605.5V680.6H605V680.7H604.5V680.7H604V680.7H603.5V680.7H603V680.5H602.5V680.6H602V680.7H601.5V680.7H601V680.6H600.5V680.7H600V680.7H599.5V680.7H599V680.7H598.5V680.6H598V680.7H597.5V680.7H597V680.8H596.5V680.9H596V680.8H595.5V681.0H595V680.7H594.5V680.7H594V680.9H593.5V681.0H593V680.8H592.5V681.1H592V681.0H591.5V681.0H591V681.2H590.5V681.2H590V681.0H589.5V681.1H589V681.0H588.5V681.1H588V680.9H587.5V680.9H587V680.9H586.5V681.1H586V681.5H585.5V681.6H585V681.5H584.5V681.8H584V681.7H583.5V681.8H583V681.6H582.5V682.1H582V682.0H581.5V682.1H581V681.9H580.5V681.9H580V681.8H579.5V681.8H579V681.6H578.5V681.7H578V681.9H577.5V682.0H577V681.8H576.5V681.9H576V682.1H575.5V682.2H575V682.9H574.5V683.1H574V683.3H573.5V683.5H573V683.4H572.5V683.6H572V684.1H571.5V684.5H571V684.8H570.5V685.7H570V687.0H569.5V687.9H569V688.6H568.5V688.7H568V687.0H567.5V683.3H567V680.7H566.5V680.7H566V680.8H565.5V680.9H565V680.9H564.5V680.9H564V680.9H563.5V680.9H563V681.0H562.5V680.9H562V680.8H561.5V680.9H561V681.0H560.5V681.0H560V681.2H559.5V681.3H559V681.2H558.5V681.4H558V681.7H557.5V681.8H557V681.8H556.5V682.2H556V682.3H555.5V682.5H555V682.5H554.5V682.7H554V682.6H553.5V682.7H553V682.7H552.5V682.8H552V683.2H551.5V683.3H551V683.2H550.5V683.2H550V683.3H549.5V683.2H549V683.4H548.5V683.4H548V683.3H547.5V683.3H547V683.4H546.5V683.5H546V684.0H545.5V684.1H545V684.0H544.5V683.9H544V684.1H543.5V684.3H543V684.6H542.5V684.7H542V684.4H541.5V684.5H541V684.6H540.5V684.9H540V685.3H539.5V685.6H539V686.8H538.5V687.2H538V686.8H537.5V687.2H537V687.8H536.5V688.3H536V688.1H535.5V688.5H535V689.7H534.5V691.5H534V692.1H533.5V692.9H533V693.7H532.5V694.5H532V695.3H531.5V696.2H531V697.1H530.5V698.0H530V698.1H529.5V698.4H529V695.5H528.5V691.4H528V686.8H527.5V680.4H527V680.6H526.5V680.6H526V680.5H525.5V680.6H525V680.5H524.5V680.6H524V680.6H523.5V680.6H523V680.5H522.5V680.6H522V680.6H521.5V680.5H521V680.7H520.5V680.7H520V680.5H519.5V680.5H519V680.5H518.5V680.5H518V680.6H517.5V680.7H517V680.8H516.5V680.8H516V680.7H515.5V680.7H515V680.7H514.5V680.7H514V680.9H513.5V680.9H513V681.0H512.5V681.0H512V680.9H511.5V680.9H511V680.8H510.5V680.9H510V680.9H509.5V680.9H509V680.7H508.5V680.8H508V681.0H507.5V681.1H507V681.1H506.5V681.1H506V681.3H505.5V681.4H505V681.5H504.5V681.5H504V681.7H503.5V681.8H503V681.6H502.5V681.6H502V681.7H501.5V681.7H501V681.6H500.5V681.6H500V681.5H499.5V681.6H499V681.7H498.5V681.7H498V681.9H497.5V681.9H497V681.9H496.5V681.8H496V682.0H495.5V682.0H495V682.8H494.5V683.0H494V683.2H493.5V683.3H493V683.5H492.5V683.8H492V684.6H491.5V685.5H491V686.1H490.5V686.9H490V687.4H489.5V687.9H489V686.2H488.5V683.0H488V682.7H487.5V682.8H487V682.7H486.5V682.3H486V683.1H485.5V683.1H485V682.2H484.5V682.2H484V682.1H483.5V682.1H483V682.1H482.5V683.4H482V683.1H481.5V683.1H481V683.2H480.5V684.4H480V683.6H479.5V683.6H479V684.6H478.5V684.7H478V683.4H477.5V683.5H477V682.8H476.5V682.9H476V683.4H475.5V683.5H475V683.5H474.5V684.9H474V683.1H473.5V683.2H473V686.6H472.5V684.2H472V683.8H471.5V685.7H471V685.6H470.5V684.1H470V684.4H469.5V685.0H469V687.1H468.5V687.3H468V688.4H467.5V688.7H467V685.2H466.5V686.0H466V685.9H465.5V685.8H465V688.4H464.5V688.7H464V690.8H463.5V691.0H463V686.9H462.5V691.2H462V686.6H461.5V686.7H461V686.4H460.5V691.7H460V689.6H459.5V689.8H459V687.9H458.5V692.7H458V691.2H457.5V689.7H457V688.4H456.5V688.9H456V693.7H455.5V698.0H455V698.1H454.5V699.9H454V698.2H453.5V699.4H453V700.0H452.5V699.8H452V700.2H451.5V700.4H451V696.5H450.5V695.3H450V694.9H449.5V692.7H449V688.9H448.5V680.4H448V680.4H447.5V680.5H447Z" fill="#85836f" opacity=".55"/><path d="M447 679.6V678.7H447.5V678.8H448V678.8H448.5V672.7H449V668.7H449.5V666.9H450V664.9H450.5V663.8H451V663.5H451.5V662.9H452V663.5H452.5V663.4H453V663.3H453.5V664.8H454V664.4H454.5V663.0H455V665.9H455.5V671.2H456V667.8H456.5V668.4H457V666.8H457.5V667.6H458V672.0H458.5V667.8H459V671.3H459.5V671.4H460V672.0H460.5V670.1H461V670.4H461.5V670.6H462V672.4H462.5V670.6H463V671.0H463.5V671.1H464V672.7H464.5V672.9H465V673.0H465.5V674.4H466V671.6H466.5V674.9H467V673.1H467.5V673.3H468V674.5H468.5V674.6H469V672.8H469.5V674.4H470V673.6H470.5V673.7H471V673.6H471.5V674.4H472V675.4H472.5V673.5H473V675.8H473.5V675.9H474V676.1H474.5V675.7H475V676.2H475.5V676.3H476V676.3H476.5V676.3H477V676.8H477.5V676.9H478V676.4H478.5V676.5H479V676.8H479.5V676.8H480V677.0H480.5V676.7H481V676.9H481.5V676.9H482V675.4H482.5V676.0H483V676.6H483.5V676.7H484V676.7H484.5V676.7H485V677.0H485.5V677.0H486V677.5H486.5V676.3H487V676.4H487.5V676.5H488V676.5H488.5V672.9H489V672.0H489.5V672.5H490V672.6H490.5V673.4H491V674.3H491.5V675.1H492V675.6H492.5V676.0H493V676.3H493.5V676.4H494V676.5H494.5V676.6H495V677.3H495.5V677.3H496V676.9H496.5V677.3H497V677.3H497.5V677.4H498V677.5H498.5V677.6H499V677.7H499.5V677.8H500V678.0H500.5V678.0H501V677.9H501.5V678.0H502V677.9H502.5V677.9H503V678.0H503.5V678.0H504V677.6H504.5V677.6H505V678.2H505.5V677.9H506V678.2H506.5V678.3H507V678.2H507.5V678.3H508V678.5H508.5V678.5H509V678.4H509.5V678.6H510V678.5H510.5V678.5H511V678.4H511.5V678.5H512V678.4H512.5V678.5H513V678.5H513.5V678.5H514V678.4H514.5V678.4H515V678.5H515.5V678.5H516V678.6H516.5V678.6H517V678.5H517.5V678.5H518V678.6H518.5V678.6H519V678.7H519.5V678.7H520V678.7H520.5V678.8H521V678.6H521.5V678.7H522V678.6H522.5V678.6H523V678.8H523.5V678.8H524V678.8H524.5V678.6H525V678.8H525.5V678.7H526V678.7H526.5V678.7H527V678.8H527.5V672.7H528V668.0H528.5V664.3H529V661.7H529.5V662.1H530V662.3H530.5V663.1H531V664.0H531.5V664.8H532V665.4H532.5V666.2H533V666.9H533.5V667.7H534V668.1H534.5V669.6H535V670.1H535.5V670.5H536V671.6H536.5V672.0H537V672.5H537.5V672.8H538V673.0H538.5V673.3H539V673.5H539.5V673.8H540V674.3H540.5V674.6H541V674.9H541.5V675.0H542V675.1H542.5V675.2H543V675.6H543.5V675.7H544V675.4H544.5V675.8H545V675.6H545.5V675.6H546V676.1H546.5V676.1H547V675.6H547.5V675.7H548V675.9H548.5V675.9H549V676.3H549.5V676.2H550V675.9H550.5V676.0H551V676.3H551.5V676.4H552V676.4H552.5V676.5H553V676.3H553.5V676.4H554V676.6H554.5V676.7H555V677.1H555.5V677.3H556V677.5H556.5V677.5H557V677.7H557.5V677.8H558V677.9H558.5V678.0H559V678.0H559.5V678.1H560V678.2H560.5V678.3H561V678.4H561.5V678.4H562V678.5H562.5V678.5H563V678.4H563.5V678.5H564V678.5H564.5V678.5H565V678.5H565.5V678.5H566V678.5H566.5V678.5H567V676.4H567.5V673.1H568V670.8H568.5V671.3H569V671.9H569.5V672.8H570V673.8H570.5V674.8H571V674.8H571.5V675.2H572V675.9H572.5V676.1H573V676.1H573.5V676.2H574V676.5H574.5V677.0H575V676.7H575.5V676.8H576V677.0H576.5V677.1H577V677.4H577.5V677.5H578V677.5H578.5V677.6H579V677.8H579.5V677.8H580V677.5H580.5V677.5H581V677.5H581.5V677.5H582V677.9H582.5V677.7H583V677.3H583.5V677.3H584V677.4H584.5V677.9H585V677.7H585.5V677.8H586V678.1H586.5V678.3H587V678.2H587.5V678.0H588V678.2H588.5V678.4H589V678.0H589.5V678.0H590V678.3H590.5V678.3H591V678.5H591.5V678.5H592V678.4H592.5V678.5H593V678.2H593.5V678.4H594V678.4H594.5V678.5H595V678.6H595.5V678.5H596V678.6H596.5V678.4H597V678.4H597.5V678.5H598V678.7H598.5V678.5H599V678.6H599.5V678.6H600V678.5H600.5V678.5H601V678.5H601.5V678.6H602V678.5H602.5V678.6H603V678.7H603.5V678.6H604V678.8H604.5V678.8H605V678.6H605.5V678.7H606V678.7H606.5V676.2H607V673.2H607.5V671.5H608V670.2H608.5V668.0H609V668.3H609.5V669.1H610V670.5H610.5V671.1H611V671.5H611.5V672.2H612V672.9H612.5V673.7H613V673.5H613.5V673.9H614V676.2H614.5V676.4H615V675.9H615.5V676.4H616V676.1H616.5V676.6H617V676.5H617.5V675.1H618V676.7H618.5V676.7H619V675.9H619.5V675.6H620V675.9H620.5V675.9H621V676.2H621.5V676.4H622V676.3H622.5V676.3H623V676.6H623.5V676.6H624V676.7H624.5V676.7H625V676.3H625.5V676.3H626V675.5H626.5V675.5H627V676.7H627.5V675.7H628V676.2H628.5V676.2H629V676.1H629.5V677.2H630V677.6H630.5V677.8H631V677.7H631.5V677.9H632V677.9H632.5V678.0H633V678.7H633.5V678.7H634V678.2H634.5V678.3H635V678.7H635.5V678.4H636V678.4H636.5V678.4H637V678.7H637.5V678.7H638V678.7H638.5V678.7H639V678.8H639.5V678.7H640V678.4H640.5V678.4H641V678.5H641.5V678.5H642V678.7H642.5V678.6H643V678.6H643.5V678.6H644V678.7H644.5V678.7H645V678.6H645.5V678.8H646V674.0H646.5V670.1H647V668.3H647.5V666.6H648V664.8H648.5V664.1H649V664.9H649.5V664.7H650V663.9H650.5V663.7H651V664.2H651.5V664.4H652V665.1H652.5V665.5H653V666.4H653.5V670.5H654V668.1H654.5V668.7H655V669.1H655.5V669.3H656V671.2H656.5V670.0H657V671.9H657.5V672.0H658V673.1H658.5V672.6H659V669.2H659.5V674.0H660V673.2H660.5V673.3H661V669.6H661.5V671.9H662V670.3H662.5V670.6H663V671.7H663.5V673.0H664V672.6H664.5V673.1H665V673.1H665.5V673.3H666V673.9H666.5V674.0H667V673.3H667.5V673.5H668V673.6H668.5V673.8H669V676.3H669.5V674.7H670V674.8H670.5V674.7H671V676.0H671.5V676.6H672V676.2H672.5V676.3H673V674.6H673.5V674.7H674V674.8H674.5V675.2H675V675.7H675.5V676.7H676V676.6H676.5V676.8H677V677.1H677.5V677.1H678V675.4H678.5V675.5H679V677.4H679.5V677.5H680V677.1H680.5V677.1H681V677.0H681.5V677.1H682V676.7H682.5V676.3H683V676.3H683.5V676.7H684V677.1H684.5V677.1H685V676.8H685.5V673.8H686V668.9H686.5V665.0H687V661.5H687.5V661.4H688V662.1H688.5V662.8H689V663.4H689.5V664.2H690V665.2H690.5V666.1H691V666.9H691.5V667.7H692V668.1H692.5V668.8H693V669.5H693.5V670.8H694V671.4H694.5V672.0H695V672.0H695.5V672.4H696V673.2H696.5V673.5H697V673.5H697.5V673.8H698V674.0H698.5V674.3H699V674.4H699.5V674.6H700V675.0H700.5V675.4H701V675.1H701.5V675.2H702V675.4H702.5V675.5H703V675.9H703.5V676.0H704V675.9H704.5V675.8H705V675.7H705.5V675.8H706V675.8H706.5V675.8H707V676.3H707.5V676.4H708V675.9H708.5V676.0H709V676.2H709.5V676.3H710V676.3H710.5V676.4H711V676.8H711.5V676.8H712V676.5H712.5V676.6H713V677.0H713.5V677.2H714V677.3H714.5V677.4H715V677.5H715.5V677.6H716V677.8H716.5V678.1H717V678.2H717.5V678.2H718V678.3H718.5V678.3H719V678.3H719.5V678.2H720V678.3H720.5V678.3H721V678.3H721.5V678.4H722V678.5H722.5V678.5H723V678.6H723.5V678.6H724V678.5H724.5V678.5H725V676.5H725.5V672.7H726V670.1H726.5V670.7H727V670.8H727.5V672.3H728V672.8H728.5V673.9H729V674.3H729.5V674.7H730V675.6H730.5V675.8H731V675.7H731.5V675.9H732V676.1H732.5V676.8H733V676.4H733.5V676.9H734V676.6H734.5V676.7H735V677.0H735.5V677.1H736V677.1H736.5V677.2H737V677.4H737.5V677.4H738V677.4H738.5V677.4H739V677.5H739.5V677.5H740V677.6H740.5V677.6H741V677.6H741.5V677.7H742V677.5H742.5V677.6H743V677.6H743.5V677.7H744V677.7H744.5V678.1H745V677.9H745.5V677.9H746V678.3H746.5V678.3H747V677.8H747.5V677.9H748V678.0H748.5V678.0H749V678.0H749.5V678.0H750V678.3H750.5V678.3H751V678.2H751.5V678.3H752V678.1H752.5V678.1H753V678.3H753.5V678.3H754V678.3H754.5V678.4H755V678.3H755.5V678.4H756V678.5H756.5V678.6H757V678.5H757.5V678.5H758V678.5H758.5V678.5H759V678.5H759.5V678.5H760V678.5H760.5V678.5H761V678.6H761.5V678.6H762V678.6H762.5V678.6H763V678.7H763.5V678.7H764V678.7H764.5V674.7H765V670.3H765.5V668.6H766V666.4H766.5V665.1H767V663.4H767.5V662.7H768V664.8H768.5V663.2H769V662.4H769.5V662.6H770V664.5H770.5V664.0H771V665.8H771.5V666.7H772V669.8H772.5V670.3H773V668.2H773.5V670.4H774V669.0H774.5V670.4H775V672.7H775.5V673.4H776V671.8H776.5V671.9H777V669.4H777.5V669.6H778V671.9H778.5V672.0H779V672.6H779.5V672.7H780V671.0H780.5V671.2H781V673.2H781.5V673.4H782V674.5H782.5V674.7H783V672.8H783.5V673.0H784V673.5H784.5V674.0H785V673.0H785.5V673.1H786V673.4H786.5V674.2H787V674.9H787.5V675.1H788V674.3H788.5V674.5H789V675.3H789.5V674.6H790V675.2H790.5V676.0H791V676.4H791.5V676.5H792V676.1H792.5V676.2H793V676.3H793.5V676.4H794V674.8H794.5V674.9H795V677.1H795.5V677.1H796V676.1H796.5V676.1H797V675.6H797.5V675.7H798V675.8H798.5V675.8H799V676.1H799.5V676.2H800V677.4H800.5V677.4H801V677.1H801.5V677.2H802V677.3H802.5V677.1H803V676.3H803.5V676.3H804V677.3H804.5V674.3H805V672.0H805.5V672.0H806V672.5H806.5V673.3H807V674.2H807.5V675.0H808V675.5H808.5V675.8H809V676.1H809.5V676.3H810V676.5H810.5V676.7H811V676.9H811.5V676.9H812V676.9H812.5V677.0H813V677.5H813.5V677.6H814V677.7H814.5V677.2H815V677.5H815.5V677.5H816V677.6H816.5V677.6H817V677.9H817.5V678.0H818V677.8H818.5V677.8H819V677.5H819.5V677.5H820V677.8H820.5V677.8H821V677.9H821.5V678.0H822V678.3H822.5V678.3H823V678.3H823.5V678.3H824V678.1H824.5V678.4H825V678.5H825.5V678.4H826V678.3H826.5V678.4H827V678.4H827.5V678.4H828V678.5H828.5V678.5H829V678.6H829.5V678.6H830V678.6H830.5V678.7H831V678.6H831.5V678.5H832V678.4H832.5V678.4H833V678.6H833.5V678.6H834V678.4H834.5V678.5H835V678.6H835.5V678.6H836V678.7H836.5V678.7H837V678.6H837.5V678.6H838V678.7H838.5V678.7H839V678.6H839.5V678.7H840V678.8H840.5V678.9H841V678.8H841.5V678.7H842V678.9H842.5V678.7H843V678.8H843.5V674.9H844V669.7H844.5V665.8H845V662.4H845.5V662.2H846V662.1H846.5V662.8H847V663.1H847.5V663.9H848V665.0H848.5V666.0H849V666.5H849.5V667.1H850V668.1H850.5V668.9H851V669.9H851.5V670.4H852V671.2H852.5V671.8H853V672.5H853.5V672.9H854V672.9H854.5V673.3H855V673.8H855.5V673.6H856V673.7H856.5V674.0H857V674.8H857.5V674.9H858V674.9H858.5V675.0H859V675.1H859.5V675.3H860V675.5H860.5V675.6H861V676.0H861.5V675.8H862V675.6H862.5V675.7H863V676.2H863.5V676.2H864V676.0H864.5V676.1H865V675.7H865.5V675.8H866V676.2H866.5V676.2H867V676.5H867.5V676.5H868V676.6H868.5V676.6H869V676.6H869.5V676.6H870V676.8H870.5V676.6H871V677.1H871.5V677.3H872V677.4H872.5V677.6H873V677.6H873.5V677.7H874V678.0H874.5V678.0H875V677.9H875.5V678.1H876V678.2H876.5V678.3H877V678.4H877.5V678.4H878V678.4H878.5V678.5H879V678.4H879.5V678.5H880V678.5H880.5V678.5H881V678.4H881.5V678.5H882V678.6H882.5V678.6H883V677.4H883.5V673.9H884V671.0H884.5V671.5H885V671.6H885.5V672.4H886V673.2H886.5V674.1H887V674.9H887.5V675.3H888V675.6H888.5V675.8H889V676.2H889.5V676.3H890V676.3H890.5V677.0H891V677.2H891.5V677.2H892V677.1H892.5V677.1H893V677.5H893.5V677.4H894V677.3H894.5V677.4H895V677.6H895.5V677.6H896V677.2H896.5V677.5H897V677.8H897.5V677.8H898V677.9H898.5V677.8H899V677.5H899.5V677.6H900V677.7H900.5V677.8H901V677.9H901.5V678.0H902V678.0H902.5V678.1H903V678.4H903.5V678.4H904V678.1H904.5V678.1H905V678.2H905.5V678.2H906V678.5H906.5V678.3H907V678.4H907.5V678.4H908V678.5H908.5V678.5H909V678.3H909.5V678.3H910V678.4H910.5V678.4H911V678.6H911.5V678.6H912V678.6H912.5V678.6H913V678.4H913.5V678.4H914V678.6H914.5V678.6H915V678.6H915.5V678.6H916V678.7H916.5V678.7H917V678.7H917.5V678.7H918V678.5H918.5V678.6H919V678.6H919.5V678.8H920V678.7H920.5V678.7H921V678.6H921.5V678.7H922V678.7H922.5V677.3H923V673.9H923.5V671.9H924V670.9H924.5V669.3H925V669.1H925.5V669.8H926V669.8H926.5V670.7H927V670.9H927.5V671.6H928V672.8H928.5V673.3H929V673.7H929.5V673.7H930V674.9H930.5V675.2H931V675.4H931.5V675.3H932V675.5H932.5V675.6H933V675.6H933.5V675.6H934V675.7H934.5V675.7H935V676.3H935.5V676.4H936V676.0H936.5V676.1H937V675.7H937.5V676.6H938V675.6H938.5V675.7H939V676.5H939.5V676.5H940V676.9H940.5V675.8H941V676.3H941.5V676.3H942V675.5H942.5V676.1H943V676.4H943.5V676.4H944V676.5H944.5V676.5H945V675.9H945.5V676.2H946V677.2H946.5V677.6H947V677.6H947.5V677.8H948V678.0H948.5V678.1H949V678.6H949.5V678.6H950V678.3H950.5V678.4H951V678.4H951.5V678.6H952V678.3H952.5V678.3H953V678.7H953.5V678.7H954V678.5H954.5V678.4H955V678.7H955.5V678.7H956V678.6H956.5V678.6H957V678.4H957.5V678.4H958V678.5H958.5V678.7H959V678.7H959.5V678.7H960V678.8H960.5V678.7H961V678.7H961.5V678.8H962V676.1H962.5V669.7H963V668.1H963.5V666.3H964V664.5H964.5V664.1H965V663.5H965.5V663.1H966V664.1H966.5V663.9H967V664.1H967.5V665.0H968V664.5H968.5V665.1H969V665.6H969.5V668.2H970V671.8H970.5V670.1H971V667.8H971.5V668.2H972V671.4H972.5V671.6H973V673.6H973.5V673.7H974V671.0H974.5V671.1H975V672.4H975.5V672.5H976V671.7H976.5V671.4H977V673.7H977.5V673.8H978V669.5H978.5V674.6H979V673.8H979.5V673.9H980V674.9H980.5V675.0H981V674.5H981.5V674.8H982V674.4H982.5V674.5H983V675.0H983.5V675.1H984V673.1H984.5V673.3H985V675.0H985.5V675.4H986V673.5H986.5V673.7H987V675.7H987.5V675.9H988V675.7H988.5V675.8H989V675.2H989.5V675.3H990V675.9H990.5V676.0H991V675.0H991.5V675.1H992V676.9H992.5V676.9H993V676.2H993.5V676.2H994V676.2H994.5V676.3H995V676.9H995.5V677.0H996V677.2H996.5V677.2H997V676.2H997.5V676.3H998V676.2H998.5V677.2H999V677.1H999.5V677.1H1000V677.4H1000.5V677.4H1001V677.6H1001.5V676.0H1002V670.4H1002.5V666.5H1003V662.2H1003.5V661.8H1004V661.7H1004.5V662.5H1005V663.1H1005.5V664.2H1006V664.8H1006.5V665.6H1007V666.2H1007.5V666.9H1008V667.9H1008.5V668.7H1009V669.6H1009.5V670.1H1010V671.3H1010.5V671.8H1011V671.9H1011.5V672.4H1012V672.7H1012.5V673.1H1013V673.5H1013.5V673.8H1014V674.4H1014.5V674.7H1015V674.4H1015.5V674.7H1016V675.3H1016.5V675.0H1017V675.4H1017.5V675.5H1018V675.3H1018.5V675.4H1019V675.3H1019.5V675.4H1020V675.8H1020.5V675.8H1021V676.1H1021.5V676.1H1022V676.0H1022.5V676.1H1023V676.3H1023.5V676.4H1024V676.3H1024.5V676.3H1025V676.3H1025.5V676.4H1026V676.4H1026.5V676.3H1027V676.7H1027.5V676.8H1028V676.5H1028.5V676.7H1029V676.7H1029.5V676.9H1030V677.2H1030.5V677.4H1031V677.6H1031.5V677.8H1032V677.8H1032.5V678.1H1033V678.0H1033.5V678.2H1034V678.2H1034.5V678.4H1035V678.2H1035.5V678.3H1036V678.4H1036.5V678.4H1037V678.4H1037.5V678.4H1038V678.4H1038.5V678.4H1039V678.4H1039.5V678.4H1040V678.5H1040.5V678.6H1041V677.7H1041.5V673.8H1042V670.4H1042.5V670.2H1043V670.8H1043.5V671.6H1044V672.6H1044.5V673.6H1045V674.6H1045.5V675.0H1046V675.3H1046.5V675.7H1047V675.6H1047.5V675.8H1048V676.2H1048.5V676.9H1049V676.2H1049.5V676.3H1050V676.9H1050.5V677.0H1051V677.0H1051.5V676.9H1052V676.7H1052.5V676.8H1053V677.2H1053.5V677.5H1054V677.2H1054.5V677.2H1055V677.6H1055.5V677.6H1056V677.4H1056.5V677.5H1057V677.6H1057.5V677.6H1058V677.5H1058.5V677.6H1059V677.7H1059.5V677.8H1060V677.7H1060.5V677.8H1061V677.8H1061.5V678.3H1062V678.1H1062.5V678.1H1063V677.9H1063.5V677.9H1064V678.1H1064.5V678.1H1065V678.4H1065.5V678.4H1066V678.1H1066.5V678.1H1067V678.4H1067.5V678.1H1068V678.0H1068.5V678.1H1069V678.2H1069.5V678.2H1070V678.3H1070.5V678.4H1071V678.4H1071.5V678.4H1072V678.6H1072.5V678.6H1073V678.6H1073.5V678.6H1074V678.3H1074.5V678.3H1075V678.3H1075.5V678.3H1076V679.6V680.6H1075.5V680.6H1075V680.6H1074.5V680.6H1074V680.6H1073.5V680.6H1073V680.9H1072.5V680.9H1072V680.7H1071.5V680.8H1071V680.7H1070.5V680.8H1070V681.1H1069.5V681.1H1069V681.0H1068.5V681.0H1068V680.8H1067.5V681.0H1067V681.0H1066.5V681.0H1066V680.8H1065.5V680.8H1065V681.1H1064.5V681.1H1064V681.1H1063.5V681.1H1063V681.2H1062.5V681.2H1062V681.1H1061.5V681.0H1061V681.1H1060.5V681.2H1060V681.3H1059.5V681.4H1059V681.9H1058.5V681.8H1058V681.7H1057.5V681.7H1057V681.8H1056.5V681.8H1056V681.7H1055.5V681.7H1055V681.7H1054.5V681.7H1054V681.9H1053.5V681.9H1053V682.0H1052.5V682.1H1052V682.3H1051.5V682.3H1051V682.5H1050.5V682.6H1050V682.9H1049.5V683.0H1049V682.7H1048.5V683.0H1048V683.3H1047.5V683.5H1047V683.5H1046.5V683.8H1046V684.5H1045.5V684.9H1045V685.3H1044.5V686.3H1044V687.5H1043.5V688.3H1043V688.6H1042.5V688.8H1042V685.5H1041.5V681.6H1041V680.6H1040.5V680.7H1040V680.7H1039.5V680.7H1039V680.8H1038.5V680.9H1038V680.7H1037.5V680.8H1037V680.8H1036.5V680.8H1036V680.9H1035.5V680.9H1035V680.8H1034.5V681.0H1034V681.0H1033.5V681.1H1033V681.2H1032.5V681.3H1032V681.6H1031.5V681.7H1031V681.7H1030.5V681.8H1030V682.1H1029.5V682.2H1029V682.3H1028.5V682.4H1028V682.7H1027.5V682.8H1027V683.0H1026.5V682.7H1026V682.9H1025.5V683.0H1025V683.0H1024.5V683.0H1024V683.0H1023.5V683.1H1023V683.4H1022.5V683.5H1022V683.2H1021.5V683.2H1021V683.4H1020.5V683.5H1020V683.4H1019.5V683.5H1019V683.9H1018.5V684.0H1018V684.2H1017.5V684.3H1017V684.1H1016.5V684.3H1016V684.1H1015.5V684.4H1015V684.4H1014.5V684.7H1014V685.2H1013.5V685.5H1013V685.6H1012.5V686.0H1012V686.8H1011.5V687.2H1011V687.1H1010.5V687.6H1010V688.2H1009.5V688.7H1009V690.5H1008.5V691.3H1008V692.2H1007.5V693.0H1007V693.4H1006.5V694.2H1006V695.0H1005.5V695.9H1005V697.1H1004.5V697.8H1004V697.1H1003.5V696.7H1003V692.7H1002.5V689.1H1002V683.2H1001.5V681.7H1001V683.0H1000.5V683.0H1000V683.2H999.5V683.2H999V682.8H998.5V681.7H998V683.4H997.5V683.5H997V682.5H996.5V682.6H996V683.3H995.5V683.3H995V681.8H994.5V681.8H994V682.0H993.5V682.0H993V683.3H992.5V683.4H992V683.9H991.5V684.0H991V683.7H990.5V683.8H990V682.7H989.5V682.8H989V683.3H988.5V683.4H988V683.1H987.5V683.0H987V684.9H986.5V685.1H986V685.9H985.5V683.3H985V686.3H984.5V686.5H984V684.5H983.5V684.7H983V686.4H982.5V686.6H982V683.8H981.5V685.7H981V686.1H980.5V686.3H980V687.3H979.5V687.6H979V685.9H978.5V689.7H978V688.4H977.5V688.5H977V686.2H976.5V685.6H976V688.5H975.5V688.6H975V687.3H974.5V687.4H974V686.2H973.5V686.3H973V685.9H972.5V686.0H972V686.0H971.5V686.3H971V686.6H970.5V687.8H970V690.9H969.5V692.9H969V693.3H968.5V693.9H968V694.9H967.5V696.2H967V695.4H966.5V695.3H966V696.1H965.5V695.7H965V694.8H964.5V694.4H964V693.0H963.5V691.2H963V688.2H962.5V683.5H962V680.4H961.5V680.4H961V680.8H960.5V680.7H960V680.6H959.5V680.6H959V680.5H958.5V680.5H958V680.8H957.5V680.8H957V680.6H956.5V680.5H956V680.5H955.5V680.5H955V680.7H954.5V680.5H954V680.8H953.5V680.8H953V680.6H952.5V680.6H952V680.6H951.5V680.8H951V681.0H950.5V681.0H950V681.0H949.5V681.0H949V680.8H948.5V680.9H948V680.9H947.5V681.1H947V682.3H946.5V682.8H946V682.6H945.5V682.9H945V683.4H944.5V683.4H944V682.3H943.5V682.3H943V682.7H942.5V682.3H942V683.2H941.5V683.3H941V682.3H940.5V682.4H940V683.1H939.5V683.1H939V682.5H938.5V682.5H938V682.9H937.5V684.0H937V683.1H936.5V683.1H936V683.1H935.5V683.1H935V682.6H934.5V682.6H934V683.9H933.5V683.9H933V683.6H932.5V683.7H932V683.4H931.5V683.3H931V683.3H930.5V683.5H930V685.0H929.5V685.3H929V686.3H928.5V686.9H928V686.9H927.5V687.6H927V688.7H926.5V688.7H926V689.6H925.5V690.4H925V690.6H924.5V688.9H924V686.9H923.5V685.3H923V681.8H922.5V680.4H922V680.5H921.5V680.4H921V680.5H920.5V680.4H920V680.4H919.5V680.6H919V680.5H918.5V680.6H918V680.6H917.5V680.6H917V680.8H916.5V680.8H916V680.5H915.5V680.5H915V680.7H914.5V680.7H914V680.7H913.5V680.7H913V680.8H912.5V680.8H912V680.9H911.5V680.9H911V680.9H910.5V680.9H910V680.8H909.5V680.8H909V681.1H908.5V681.1H908V681.0H907.5V681.0H907V680.8H906.5V681.0H906V680.9H905.5V680.9H905V680.9H904.5V680.9H904V680.9H903.5V680.9H903V680.9H902.5V681.0H902V681.3H901.5V681.4H901V681.5H900.5V681.6H900V681.3H899.5V681.4H899V681.6H898.5V681.9H898V681.4H897.5V681.4H897V681.7H896.5V681.7H896V681.6H895.5V681.6H895V681.7H894.5V681.8H894V681.9H893.5V682.4H893V682.1H892.5V682.2H892V682.3H891.5V682.4H891V682.5H890.5V682.7H890V682.7H889.5V682.9H889V683.2H888.5V683.5H888V683.9H887.5V684.3H887V684.9H886.5V685.8H886V686.5H885.5V687.3H885V687.9H884.5V688.4H884V685.3H883.5V681.8H883V680.6H882.5V680.6H882V680.7H881.5V680.7H881V680.7H880.5V680.7H880V680.8H879.5V680.8H879V680.8H878.5V680.8H878V680.8H877.5V681.0H877V681.0H876.5V681.0H876V681.0H875.5V681.1H875V681.2H874.5V681.3H874V681.3H873.5V681.4H873V681.6H872.5V681.8H872V681.9H871.5V682.1H871V682.3H870.5V682.6H870V682.4H869.5V682.5H869V682.9H868.5V682.9H868V683.0H867.5V683.0H867V683.2H866.5V683.3H866V683.1H865.5V683.1H865V683.2H864.5V683.2H864V683.4H863.5V683.4H863V683.2H862.5V683.2H862V683.1H861.5V683.3H861V683.6H860.5V683.7H860V683.9H859.5V684.0H859V684.0H858.5V684.1H858V684.5H857.5V684.7H857V685.0H856.5V685.3H856V685.1H855.5V685.7H855V686.2H854.5V686.6H854V686.2H853.5V686.5H853V687.9H852.5V688.5H852V689.1H851.5V689.6H851V690.2H850.5V691.0H850V691.9H849.5V693.0H849V693.7H848.5V694.3H848V694.9H847.5V695.7H847V696.3H846.5V697.5H846V697.7H845.5V697.5H845V694.0H844.5V689.9H844V684.2H843.5V680.3H843V680.5H842.5V680.4H842V680.5H841.5V680.3H841V680.5H840.5V680.4H840V680.5H839.5V680.5H839V680.5H838.5V680.6H838V680.5H837.5V680.4H837V680.5H836.5V680.5H836V680.6H835.5V680.6H835V680.5H834.5V680.5H834V680.6H833.5V680.6H833V680.5H832.5V680.5H832V680.5H831.5V680.6H831V680.9H830.5V680.9H830V680.6H829.5V680.6H829V680.9H828.5V680.9H828V681.0H827.5V681.0H827V680.8H826.5V680.8H826V681.0H825.5V680.7H825V680.7H824.5V680.8H824V681.1H823.5V681.2H823V681.0H822.5V681.1H822V681.3H821.5V681.4H821V681.4H820.5V681.5H820V681.2H819.5V681.2H819V681.3H818.5V681.3H818V681.2H817.5V681.3H817V681.6H816.5V681.6H816V681.7H815.5V681.7H815V681.6H814.5V681.6H814V681.9H813.5V681.9H813V681.7H812.5V681.7H812V682.0H811.5V682.5H811V682.6H810.5V682.7H810V682.7H809.5V682.9H809V683.4H808.5V683.7H808V684.1H807.5V684.9H807V686.1H806.5V686.8H806V686.8H805.5V687.6H805V684.8H804.5V681.8H804V682.5H803.5V682.5H803V682.8H802.5V683.1H802V681.6H801.5V681.7H801V682.4H800.5V682.4H800V682.6H799.5V682.7H799V682.9H798.5V683.0H798V682.1H797.5V682.1H797V682.3H796.5V682.9H796V683.9H795.5V684.0H795V682.5H794.5V682.5H794V684.5H793.5V684.6H793V683.2H792.5V684.7H792V683.9H791.5V684.0H791V684.9H790.5V682.9H790V684.5H789.5V683.3H789V683.8H788.5V683.9H788V683.1H787.5V683.2H787V683.3H786.5V684.1H786V686.6H785.5V686.8H785V685.2H784.5V687.5H784V686.0H783.5V686.2H783V686.5H782.5V686.7H782V684.9H781.5V685.0H781V688.9H780.5V689.1H780V685.6H779.5V685.7H779V690.3H778.5V690.4H778V686.1H777.5V686.2H777V686.1H776.5V686.2H776V688.0H775.5V690.9H775V688.2H774.5V689.2H774V690.2H773.5V688.2H773V691.8H772.5V692.5H772V692.6H771.5V693.5H771V696.6H770.5V694.9H770V695.3H769.5V695.5H769V695.1H768.5V696.3H768V695.3H767.5V694.6H767V693.2H766.5V691.9H766V690.7H765.5V689.0H765V684.6H764.5V680.5H764V680.6H763.5V680.6H763V680.6H762.5V680.7H762V680.7H761.5V680.7H761V680.7H760.5V680.7H760V680.5H759.5V680.5H759V680.7H758.5V680.7H758V680.7H757.5V680.8H757V680.9H756.5V680.9H756V680.8H755.5V680.8H755V680.9H754.5V680.9H754V681.0H753.5V681.0H753V680.7H752.5V680.8H752V680.8H751.5V681.0H751V681.1H750.5V681.1H750V680.8H749.5V680.8H749V681.1H748.5V681.1H748V681.1H747.5V681.2H747V681.0H746.5V681.0H746V681.0H745.5V681.0H745V681.0H744.5V681.4H744V681.2H743.5V681.3H743V681.3H742.5V681.4H742V681.7H741.5V681.7H741V682.1H740.5V682.1H740V682.0H739.5V682.0H739V681.6H738.5V681.6H738V681.9H737.5V681.9H737V681.8H736.5V681.9H736V682.0H735.5V682.1H735V682.2H734.5V682.2H734V682.5H733.5V682.6H733V682.1H732.5V683.0H732V683.0H731.5V683.2H731V683.7H730.5V683.9H730V684.2H729.5V684.6H729V685.4H728.5V686.4H728V687.1H727.5V688.2H727V688.8H726.5V689.4H726V686.5H725.5V682.7H725V680.6H724.5V680.6H724V680.8H723.5V680.8H723V680.7H722.5V680.8H722V680.7H721.5V680.8H721V680.8H720.5V680.9H720V680.9H719.5V680.8H719V680.9H718.5V681.0H718V681.0H717.5V681.1H717V681.2H716.5V681.3H716V681.5H715.5V681.7H715V681.8H714.5V682.0H714V682.2H713.5V682.4H713V682.5H712.5V682.7H712V682.7H711.5V682.7H711V682.7H710.5V682.6H710V683.1H709.5V683.2H709V683.1H708.5V683.1H708V682.8H707.5V682.9H707V683.1H706.5V683.1H706V683.6H705.5V683.6H705V683.2H704.5V683.2H704V683.2H703.5V683.3H703V683.4H702.5V683.5H702V683.8H701.5V683.9H701V683.8H700.5V683.9H700V684.6H699.5V684.8H699V684.8H698.5V685.1H698V685.5H697.5V685.8H697V685.8H696.5V685.7H696V686.2H695.5V686.6H695V687.3H694.5V687.9H694V688.1H693.5V688.7H693V690.1H692.5V690.8H692V692.1H691.5V692.8H691V693.1H690.5V694.1H690V694.8H689.5V695.6H689V696.7H688.5V697.6H688V697.5H687.5V697.3H687V694.1H686.5V690.2H686V685.4H685.5V682.4H685V681.9H684.5V681.9H684V682.4H683.5V682.0H683V682.5H682.5V682.6H682V683.2H681.5V683.2H681V682.1H680.5V682.2H680V682.9H679.5V683.0H679V683.8H678.5V683.9H678V683.3H677.5V683.4H677V683.0H676.5V683.7H676V683.5H675.5V683.2H675V682.9H674.5V683.5H674V682.5H673.5V682.5H673V682.5H672.5V682.6H672V684.0H671.5V684.4H671V684.1H670.5V684.7H670V685.6H669.5V683.8H669V685.4H668.5V685.6H668V685.2H667.5V685.4H667V685.4H666.5V685.6H666V684.7H665.5V684.8H665V685.1H664.5V684.1H664V684.4H663.5V687.4H663V689.0H662.5V689.2H662V687.8H661.5V688.3H661V685.0H660.5V685.0H660V690.0H659.5V687.9H659V686.0H658.5V689.5H658V687.6H657.5V687.8H657V691.1H656.5V686.8H656V686.9H655.5V687.0H655V691.7H654.5V692.4H654V688.1H653.5V692.6H653V693.9H652.5V695.4H652V695.7H651.5V696.0H651V694.5H650.5V694.3H650V695.2H649.5V694.9H649V694.2H648.5V693.5H648V692.0H647.5V690.4H647V689.7H646.5V685.5H646V680.6H645.5V680.4H645V680.5H644.5V680.5H644V680.5H643.5V680.5H643V680.4H642.5V680.4H642V680.7H641.5V680.7H641V680.7H640.5V680.7H640V680.4H639.5V680.5H639V680.9H638.5V680.9H638V680.4H637.5V680.4H637V680.5H636.5V680.5H636V680.5H635.5V680.5H635V681.0H634.5V681.0H634V680.6H633.5V680.6H633V681.0H632.5V681.1H632V680.8H631.5V681.0H631V681.5H630.5V682.1H630V681.9H629.5V683.0H629V683.6H628.5V683.6H628V682.9H627.5V683.2H627V682.6H626.5V682.6H626V682.9H625.5V682.9H625V683.1H624.5V683.1H624V682.6H623.5V682.7H623V683.1H622.5V683.1H622V683.7H621.5V683.3H621V683.0H620.5V683.0H620V683.2H619.5V683.0H619V682.9H618.5V682.9H618V683.7H617.5V683.7H617V683.7H616.5V683.9H616V682.7H615.5V683.3H615V684.3H614.5V684.0H614V685.1H613.5V685.6H613V685.7H612.5V686.1H612V686.9H611.5V687.5H611V688.5H610.5V689.2H610V689.7H609.5V690.5H609V691.2H608.5V689.1H608V687.4H607.5V686.0H607V683.0H606.5V680.4H606V680.6H605.5V680.5H605V680.6H604.5V680.6H604V680.6H603.5V680.6H603V680.5H602.5V680.5H602V680.6H601.5V680.6H601V680.6H600.5V680.6H600V680.6H599.5V680.7H599V680.6H598.5V680.6H598V680.6H597.5V680.6H597V680.7H596.5V680.8H596V680.7H595.5V680.9H595V680.7H594.5V680.7H594V680.8H593.5V680.9H593V680.7H592.5V681.0H592V680.9H591.5V680.9H591V681.1H590.5V681.1H590V680.9H589.5V681.0H589V680.9H588.5V681.0H588V680.8H587.5V680.8H587V680.8H586.5V681.0H586V681.3H585.5V681.4H585V681.3H584.5V681.7H584V681.6H583.5V681.6H583V681.4H582.5V682.0H582V681.9H581.5V681.9H581V681.7H580.5V681.7H580V681.6H579.5V681.6H579V681.5H578.5V681.6H578V681.7H577.5V681.8H577V681.7H576.5V681.7H576V681.9H575.5V682.0H575V682.6H574.5V682.9H574V683.0H573.5V683.1H573V683.1H572.5V683.2H572V683.7H571.5V684.1H571V684.4H570.5V685.2H570V686.4H569.5V687.3H569V687.9H568.5V688.0H568V686.4H567.5V683.0H567V680.6H566.5V680.6H566V680.8H565.5V680.8H565V680.8H564.5V680.8H564V680.9H563.5V680.8H563V680.9H562.5V680.8H562V680.8H561.5V680.8H561V680.9H560.5V680.9H560V681.1H559.5V681.2H559V681.1H558.5V681.3H558V681.5H557.5V681.6H557V681.6H556.5V682.0H556V682.1H555.5V682.3H555V682.3H554.5V682.5H554V682.4H553.5V682.5H553V682.5H552.5V682.5H552V683.0H551.5V683.0H551V682.9H550.5V683.0H550V683.1H549.5V682.9H549V683.1H548.5V683.2H548V683.0H547.5V683.1H547V683.2H546.5V683.2H546V683.7H545.5V683.8H545V683.7H544.5V683.6H544V683.8H543.5V683.9H543V684.3H542.5V684.4H542V684.0H541.5V684.1H541V684.3H540.5V684.5H540V684.9H539.5V685.1H539V686.3H538.5V686.7H538V686.3H537.5V686.6H537V687.3H536.5V687.7H536V687.7H535.5V688.1H535V689.2H534.5V690.9H534V691.5H533.5V692.2H533V693.0H532.5V693.8H532V694.6H531.5V695.3H531V696.3H530.5V697.0H530V697.1H529.5V697.5H529V694.7H528.5V690.8H528V686.5H527.5V680.4H527V680.5H526.5V680.5H526V680.5H525.5V680.5H525V680.4H524.5V680.5H524V680.6H523.5V680.6H523V680.5H522.5V680.5H522V680.5H521.5V680.4H521V680.6H520.5V680.6H520V680.5H519.5V680.5H519V680.5H518.5V680.5H518V680.6H517.5V680.6H517V680.7H516.5V680.7H516V680.6H515.5V680.6H515V680.6H514.5V680.6H514V680.8H513.5V680.8H513V680.9H512.5V680.9H512V680.8H511.5V680.8H511V680.8H510.5V680.8H510V680.8H509.5V680.8H509V680.7H508.5V680.7H508V680.9H507.5V681.0H507V681.0H506.5V681.0H506V681.2H505.5V681.3H505V681.3H504.5V681.4H504V681.6H503.5V681.6H503V681.4H502.5V681.4H502V681.5H501.5V681.6H501V681.4H500.5V681.5H500V681.4H499.5V681.4H499V681.5H498.5V681.6H498V681.7H497.5V681.8H497V681.8H496.5V681.6H496V681.8H495.5V681.8H495V682.5H494.5V682.7H494V682.9H493.5V683.0H493V683.2H492.5V683.5H492V684.2H491.5V685.0H491V685.5H490.5V686.3H490V686.8H489.5V687.3H489V685.7H488.5V682.7H488V682.3H487.5V682.4H487V682.4H486.5V682.0H486V682.7H485.5V682.7H485V681.9H484.5V681.9H484V681.8H483.5V681.8H483V681.8H482.5V683.0H482V682.6H481.5V682.7H481V682.8H480.5V683.8H480V683.1H479.5V683.1H479V684.0H478.5V684.1H478V682.9H477.5V683.0H477V682.4H476.5V682.5H476V683.0H475.5V683.1H475V683.1H474.5V684.2H474V682.7H473.5V682.7H473V685.8H472.5V683.7H472V683.3H471.5V684.9H471V684.8H470.5V683.5H470V683.9H469.5V684.4H469V686.2H468.5V686.4H468V687.4H467.5V687.6H467V684.6H466.5V685.2H466V685.1H465.5V685.1H465V687.4H464.5V687.6H464V689.5H463.5V689.7H463V686.1H462.5V689.8H462V685.8H461.5V685.9H461V685.6H460.5V690.3H460V688.4H459.5V688.6H459V686.9H458.5V691.1H458V689.8H457.5V688.5H457V686.7H456.5V687.1H456V690.9H455.5V694.3H455V694.4H454.5V695.8H454V694.5H453.5V695.5H453V695.9H452.5V695.7H452V696.1H451.5V696.3H451V693.1H450.5V692.2H450V691.8H449.5V690.1H449V687.0H448.5V680.4H448V680.4H447.5V680.5H447Z" fill="#85836f"/></g>
</svg>
</div></body></html>
